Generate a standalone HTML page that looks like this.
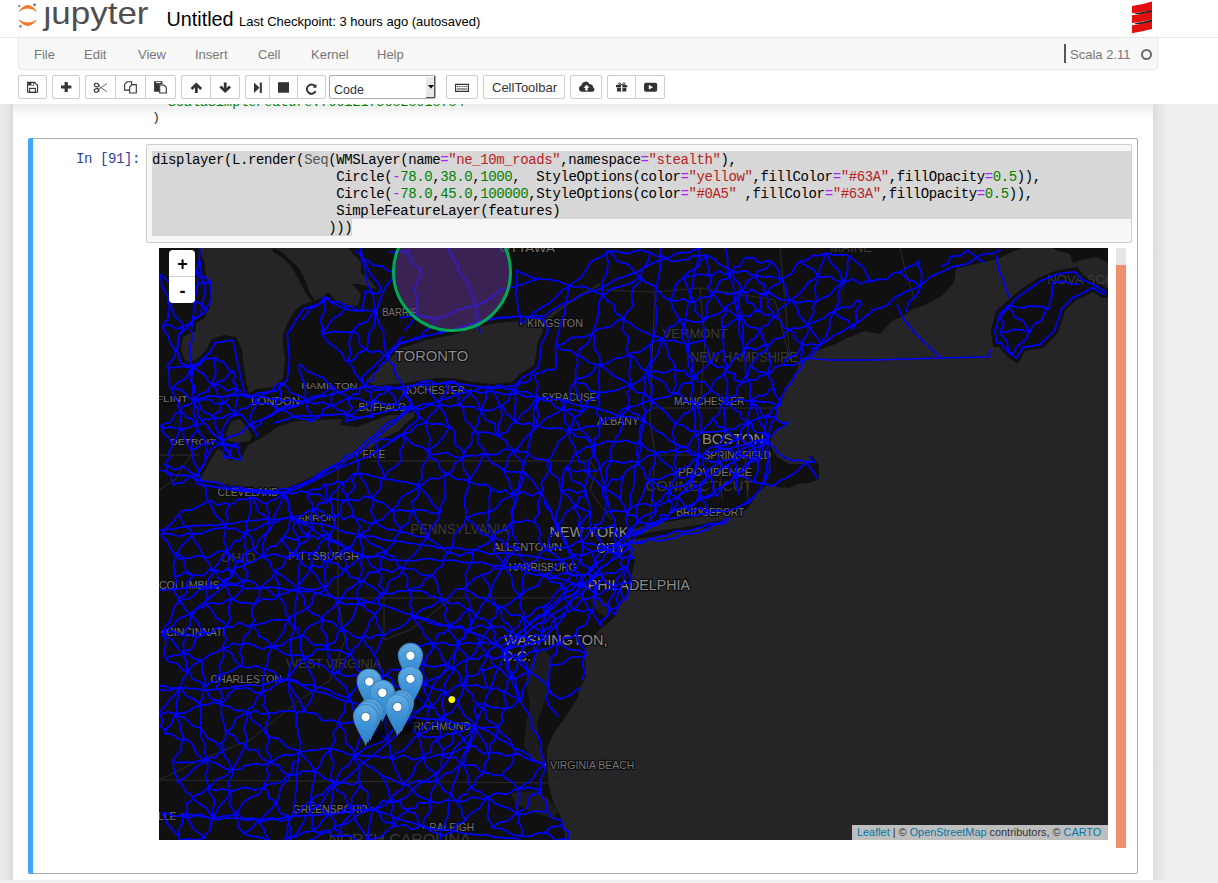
<!DOCTYPE html>
<html><head><meta charset="utf-8">
<style>
*{box-sizing:border-box;margin:0;padding:0}
html,body{width:1218px;height:883px;overflow:hidden;background:#fff;font-family:"Liberation Sans",sans-serif;position:relative}
.abs{position:absolute}
#nbbg{left:0;top:104px;width:1218px;height:779px;background:#eeeeee}
#lshadow{left:0;top:104px;width:13px;height:776px;background:linear-gradient(to right,#ececec 0,#e6e6e6 60%,#d8d8d8 100%)}
#rshadow{left:1153px;top:104px;width:14px;height:776px;background:linear-gradient(to right,#dcdcdc 0,#e8e8e8 60%,#eeeeee 100%)}
#page{left:13px;top:104px;width:1140px;height:776px;background:#fff}
#topshadow{left:13px;top:104px;width:1140px;height:16px;background:linear-gradient(to bottom,#ececec 0,#f8f8f8 50%,#fff 100%)}
#bottomstrip{left:0;top:880px;width:1218px;height:3px;background:#efeeec}
#hdrline{left:0;top:37px;width:1218px;height:1px;background:#e7e7e7}
#menubar{left:18px;top:38px;width:1140px;height:32px;background:#f8f8f8;border:1px solid #e7e7e7;border-top:none;border-radius:0 0 4px 4px}
.menu{position:absolute;top:47px;font-size:13px;color:#777;line-height:16px}
.btn{position:absolute;top:75px;height:24px;background:#fff;border:1px solid #ccc;border-radius:2px}
.grp{position:absolute;top:75px;height:24px;display:flex}
.grp>div{height:24px;background:#fff;border:1px solid #ccc;margin-left:-1px;position:relative}
.grp>div:first-child{border-radius:2px 0 0 2px;margin-left:0}
.grp>div:last-child{border-radius:0 2px 2px 0}
.ico{position:absolute;left:50%;top:50%;transform:translate(-50%,-50%)}
#cell{left:28px;top:138px;width:1110px;height:736px;border:1px solid #ababab;border-radius:2px}
#cellbar{left:28px;top:138px;width:5px;height:736px;background:#42a5f5;border-radius:2px 0 0 2px}
#prompt{left:76px;top:151px;font-family:"Liberation Mono",monospace;font-size:14px;letter-spacing:-0.395px;color:#303f9f;line-height:17px}
#input{left:146px;top:144px;width:986px;height:99px;background:#f7f7f7;border:1px solid #cfcfcf;border-radius:2px}
#code{left:152px;top:152px;font-family:"Liberation Mono",monospace;font-size:14px;letter-spacing:-0.395px;line-height:17px;color:#000;white-space:pre}
.sel{position:absolute;background:#d7d7d7}
.k{color:#aa22ff}.s{color:#ba2121}.n{color:#008000}.b{color:#555}
</style></head><body>
<div id="nbbg" class="abs"></div>
<div id="lshadow" class="abs"></div>
<div id="rshadow" class="abs"></div>
<div id="page" class="abs"></div>
<div id="topshadow" class="abs"></div>
<div id="bottomstrip" class="abs"></div>
<div id="hdrline" class="abs"></div>
<!-- header -->
<svg class="abs" style="left:0;top:0" width="160" height="36" viewBox="0 0 160 36">
  <path d="M18 12.6 Q27.6 -2.3 37.2 12.2 Q27.6 4.8 18 12.6 Z" fill="#f37726"/>
  <path d="M18 19 Q27.6 32.8 37.2 19.2 Q27.6 26 18 19 Z" fill="#f37726"/>
  <circle cx="19.2" cy="5.9" r="1.1" fill="#767677"/>
  <circle cx="34.6" cy="4.7" r="1.3" fill="#616262"/>
  <circle cx="20.5" cy="26.3" r="1.5" fill="#989798"/>
  <text x="43.5" y="23.6" font-family="Liberation Sans" font-size="31.5" fill="#4e4e4e" textLength="105" lengthAdjust="spacingAndGlyphs">&#x237;upyter</text>
</svg>
<div class="abs" style="left:166.5px;top:7.5px;font-size:19.8px;color:#000;line-height:22px">Untitled</div>
<div class="abs" style="left:239px;top:14px;font-size:13px;color:#000;line-height:16px">Last Checkpoint: 3 hours ago (autosaved)</div>
<svg class="abs" style="left:1131px;top:0px" width="22" height="35" viewBox="0 0 22 35">
  <path d="M1 6 Q11 4.8 21 1.5 L21 10.5 Q11 12.2 1 13.2 Z" fill="#e30f0f"/>
  <path d="M3 13.3 Q12 12.3 21 10 L21 12.6 Q12 14.6 6 14.2 Z" fill="#1f2325"/>
  <path d="M1 15.3 Q11 14.2 21 11.8 L21 19.5 Q11 22 1 23.1 Z" fill="#e30f0f"/>
  <path d="M3 23.2 Q12 22.2 21 19.5 L21 22 Q12 24.4 6 24.2 Z" fill="#1f2325"/>
  <path d="M1 25.3 Q11 24 21 21.5 L21 29 Q11 31.6 1 33.2 Z" fill="#e30f0f"/>
</svg>
<!-- menubar -->
<div id="menubar" class="abs"></div>
<div class="menu" style="left:34px">File</div>
<div class="menu" style="left:84px">Edit</div>
<div class="menu" style="left:138px">View</div>
<div class="menu" style="left:195px">Insert</div>
<div class="menu" style="left:258px">Cell</div>
<div class="menu" style="left:311px">Kernel</div>
<div class="menu" style="left:377px">Help</div>
<div class="abs" style="left:1064px;top:44px;width:1.5px;height:19px;background:#555"></div>
<div class="menu" style="left:1070px">Scala 2.11</div>
<div class="abs" style="left:1141px;top:49px;width:11px;height:11px;border:2px solid #6a6a6a;border-radius:50%"></div>
<!-- toolbar -->
<div class="btn" style="left:18px;width:29px"></div>
<div class="btn" style="left:52px;width:28px"></div>
<div class="grp" style="left:85px"><div style="width:31px"></div><div style="width:31px"></div><div style="width:31px"></div></div>
<div class="grp" style="left:181px"><div style="width:30px"></div><div style="width:30px"></div></div>
<div class="grp" style="left:245px"><div style="width:25px"></div><div style="width:29px"></div><div style="width:29px"></div></div>
<div class="btn" style="left:329px;width:107px;border-color:#aaa;background:#fff"></div>
<div class="btn" style="left:446px;width:32px"></div>
<div class="btn" style="left:483px;width:82px"></div>
<div class="abs" style="left:492px;top:80px;font-size:13px;color:#333;line-height:16px">CellToolbar</div>
<div class="btn" style="left:570px;width:32px"></div>
<div class="grp" style="left:607px"><div style="width:29px"></div><div style="width:30px"></div></div>

<svg class="abs" style="left:0;top:0" width="700" height="104" viewBox="0 0 700 104">
 <g fill="#333">
  <!-- save -->
  <path d="M27.6 82.4 h7 l2.9 2.9 v7 h-9.9 z" fill="none" stroke="#333" stroke-width="1.1"/>
  <rect x="28.2" y="82.5" width="6" height="3" fill="#333"/>
  <rect x="31.4" y="83" width="1.8" height="2" fill="#fff"/>
  <rect x="29.6" y="88.4" width="5.8" height="4" fill="none" stroke="#333" stroke-width="1.1"/>
  <!-- plus -->
  <path d="M64.6 82 h3.2 v3.6 h3.6 v2.9 h-3.6 v3.4 h-3.2 v-3.4 h-3.6 v-2.9 h3.6 z"/>
  <!-- cut -->
  <g fill="none" stroke="#333" stroke-width="1.2">
   <ellipse cx="96.6" cy="85.1" rx="2.3" ry="1.7" transform="rotate(20 96.6 85.1)"/>
   <ellipse cx="96.6" cy="90.4" rx="2.3" ry="1.7" transform="rotate(-20 96.6 90.4)"/>
  </g>
  <g fill="none" stroke="#555" stroke-width="0.9">
   <path d="M98.8 86.2 L106.8 91.6 M98.8 89.3 L106.8 83.5"/>
  </g>
  <!-- copy -->
  <g fill="#fff" stroke="#333" stroke-width="1.1">
   <path d="M124.6 84.3 l2.4-2.5 h4.6 v8.3 h-7 z"/>
   <path d="M129.7 87 l2.4-2.4 h4.2 v8.4 h-6.6 z"/>
  </g>
  <!-- paste -->
  <path d="M154.1 81.3 h8.3 v3.2 h-3.2 v7.2 h-5.1 z"/>
  <rect x="156" y="82.1" width="4.8" height="1" fill="#fff"/>
  <path d="M159.7 85 h4.3 l2.3 2.3 v5.7 h-6.6 z" fill="#fff" stroke="#333" stroke-width="1.1"/>
  <!-- up arrow -->
  <path d="M196.3 82.5 l5.8 5.6 l-1.9 1.9 l-2.5 -2.5 v5.5 h-2.8 v-5.5 l-2.5 2.5 l-1.9 -1.9 z"/>
  <!-- down arrow -->
  <path d="M225.2 93 l5.8 -5.6 l-1.9 -1.9 l-2.5 2.5 v-5.5 h-2.8 v5.5 l-2.5 -2.5 l-1.9 1.9 z"/>
  <!-- step forward -->
  <path d="M254 82.5 l5.5 5.2 l-5.5 5.3 z M259.8 82.5 h2 v10.5 h-2 z"/>
  <!-- stop -->
  <rect x="278" y="82.2" width="11" height="10.5"/>
  <!-- repeat -->
  <path d="M316.5 84 v3.8 h-3.8 l1.3-1.3 a3.6 3.6 0 1 0 0.7 4.2 l1.9 0.9 a5.6 5.6 0 1 1 -1.2 -6.5 z"/>
  <!-- keyboard -->
  <path d="M455 83.7 h14 v8.3 h-14 z M456.2 84.9 v5.9 h11.6 v-5.9 z" fill-rule="evenodd"/>
  <path d="M457 86 h1.2 v1 h-1.2z M459.2 86 h1.2 v1 h-1.2z M461.4 86 h1.2 v1 h-1.2z M463.6 86 h1.2 v1 h-1.2z M465.8 86 h1.2 v1 h-1.2z M457 88.6 h10 v1 h-10z"/>
  <!-- cloud upload -->
  <path d="M582 91.7 a3.2 3.2 0 0 1 -0.6-6.3 a4.3 4.3 0 0 1 8.2-1.2 a3 3 0 0 1 3.6 3.2 a2.3 2.3 0 0 1 -0.4 4.3 z"/>
  <path d="M586.5 84.8 l3 3 h-1.8 v2.8 h-2.4 v-2.8 h-1.8 z" fill="#fff"/>
  <!-- gift -->
  <path d="M616 85 h11.3 v2.3 h-11.3 z M617 87.8 h9.3 v3.6 h-9.3 z"/>
  <path d="M621 85 h1.4 v6.4 h-1.4 z" fill="#fff"/>
  <path d="M621.6 84.8 c-1-2.2 -3.5-2.5 -3.3-0.8 c0.2 1 2 0.8 3.3 0.8 z M621.8 84.8 c1-2.2 3.5-2.5 3.3-0.8 c-0.2 1 -2 0.8 -3.3 0.8 z" fill="none" stroke="#333" stroke-width="1"/>
  <!-- youtube play -->
  <rect x="644" y="82.8" width="13.2" height="8.9" rx="2"/>
  <path d="M648.8 84.8 l4.2 2.4 l-4.2 2.4 z" fill="#fff"/>
 </g>
 <!-- select arrow -->
 <rect x="426" y="77" width="9" height="20" fill="#e8e8e8"/>
 <path d="M435 76 v22 h-9 v-1 h8 v-21z" fill="#555"/>
 <path d="M428 85 h6 l-3 3.5z" fill="#000"/>
</svg>
<div class="abs" style="left:334px;top:83px;font-size:12.5px;color:#333;line-height:15px">Code</div>

<!-- previous output -->
<div class="abs" style="left:13px;top:104px;width:1140px;height:34px;overflow:hidden">
 <div class="abs" style="left:155px;top:-10px;font-family:'Liberation Mono',monospace;font-size:13.37px;line-height:17px;color:#008000;white-space:pre">ScalaSimpleFeature:766121756828918784</div>
</div>
<div class="abs" style="left:152px;top:109px;font-family:'Liberation Mono',monospace;font-size:13.37px;line-height:17px;color:#333;white-space:pre">)</div>
<div id="cell" class="abs"></div>
<div id="cellbar" class="abs"></div>
<div id="prompt" class="abs">In&nbsp;[91]:</div>
<div id="input" class="abs"></div>
<div class="sel" style="left:152px;top:151px;width:979px;height:68px"></div>
<div class="sel" style="left:152px;top:219px;width:200px;height:17px"></div>
<div id="code" class="abs">displayer(L.render(<span class="b">Seq</span>(WMSLayer(name<span class="k">=</span><span class="s">"ne_10m_roads"</span>,namespace<span class="k">=</span><span class="s">"stealth"</span>),
                       Circle(<span class="k">-</span><span class="n">78.0</span>,<span class="n">38.0</span>,<span class="n">1000</span>,  StyleOptions(color<span class="k">=</span><span class="s">"yellow"</span>,fillColor<span class="k">=</span><span class="s">"#63A"</span>,fillOpacity<span class="k">=</span><span class="n">0.5</span>)),
                       Circle(<span class="k">-</span><span class="n">78.0</span>,<span class="n">45.0</span>,<span class="n">100000</span>,StyleOptions(color<span class="k">=</span><span class="s">"#0A5"</span> ,fillColor<span class="k">=</span><span class="s">"#63A"</span>,fillOpacity<span class="k">=</span><span class="n">0.5</span>)),
                       SimpleFeatureLayer(features)
                      )))</div>
<!-- scrollbar -->
<div class="abs" style="left:1116px;top:248px;width:10px;height:600px;background:#e6e6e6"></div>
<div class="abs" style="left:1116px;top:265px;width:10px;height:583px;background:#f0906a"></div>
<div id="map" class="abs" style="left:159px;top:248px;width:949px;height:592px;background:#101010;overflow:hidden"><svg width="949" height="592" viewBox="159 248 949 592" style="position:absolute;left:0;top:0">
<rect x="159" y="248" width="949" height="592" fill="#101010"/>
<polygon points="1022,248 1010,253 1000,258 985,262 971,265 956,269 954,282 942,296 925,305 911,310 902,317 893,320 880,334 864,331 847,338 833,345 816,351 800,360 797,370 787,386 781,404 777,410 776,420 786,424 773,432 770,445 777,457 789,464 805,464 813,462 808,456 813,456 819,466 819,479 809,483 797,484 789,488 777,487 767,485 758,493 752,502 746,510 726,514 702,516 679,520 651,524 630,530 628,536 629,550 635,561 632,573 629,591 620,606 614,618 598,631 586,647 585,659 586,677 580,688 578,697 569,712 554,733 547,748 547,765 549,787 554,804 562,819 566,840 1108,840 1108,262 1095,257 1081,260 1073,263 1070,254 1058,251 1052,248" fill="#252527"/>
<polygon points="198,248 204,260 206,276 210,287 210,307 204,319 196,323 196,331 183,337 181,350 185,360 190,362 198,358 206,350 212,339 224,335 236,337 242,350 244,366 246,382 249,393 256,389 274,387 283,378 285,358 283,346 283,333 293,313 301,305 314,301 319,299 329,292 334,299 349,305 358,306 361,294 352,284 359,284 376,289 376,287 368,278 361,273 361,263 358,258 353,254 349,248" fill="#252527"/>
<polygon points="232,421 240,419 248,429 252,435 250,441 238,443 228,441 226,433" fill="#252527"/>
<polygon points="414,412 399,415 389,415 356,427 340,425 342,419 320,420 297,421 277,427 263,437 248,445 242,457 230,461 220,449 216,451 204,472 200,480 210,482 238,486 269,490 287,488 308,479 336,465 366,453 384,438 399,431 403,426 414,417" fill="#252527"/>
<polygon points="366,380 372,374 382,366 400,348.5 425,340.6 453,334.7 478,326.8 496,322.9 520,320.9 540,322.9 543.4,330.8 537.5,342.6 535.5,358.3 533.5,366.2 520,374.1 512,382 492,384 472.5,382 453,378 435,378 413,382 394,384 375,386" fill="#252527"/>
<polygon points="540,322 560,307 580,294 600,283 601,285 582,296 562,309 543,325" fill="#252527"/>
<polygon points="526,680 530,706 526,723 524,744 532,761 545,761 539,744 537,723 545,701 549,680 552,660 545,650 535,655 528,668" fill="#1d1d1f"/>
<polygon points="612,606 600,598 590,600 596,610 606,618" fill="#1d1d1f"/>
<polygon points="511,793 536.6,791 549.4,799.5 558,812 553.7,818.7 532.3,812 515.3,803.8" fill="#1d1d1f"/>
<polygon points="991,330 996,311 1011,298 1022,288 1040,277 1058,270 1077,267 1084,276 1095,280 1108,289 1108,298 1102,298 1093,292 1075,301 1065,311 1058,333 1043,348 1025,351 1018,364 1008,357 999,347 993,347" fill="#101010"/>
<polygon points="630,540 659,536 689,530 706,528 731,518 703,524 679,528 651,532 630,537" fill="#101010"/>
<polygon points="274,248 282,252 290,260 299,268 305,280 310,293 315,301 312,302 305,292 298,278 291,266 283,258 272,251" fill="#101010"/>
<polyline points="372,461 590,461 596,470 590,490 600,505 612,520" fill="none" stroke="#2c2c2c" stroke-width="1"/>
<polyline points="338,466 338,598 600,598" fill="none" stroke="#2c2c2c" stroke-width="1"/>
<polyline points="338,598 345,640 330,680 300,700 250,740 200,760 159,780" fill="none" stroke="#2c2c2c" stroke-width="1"/>
<polyline points="159,780 300,781 450,782 560,783" fill="none" stroke="#2c2c2c" stroke-width="1"/>
<polyline points="384,598 384,640 410,630 450,600" fill="none" stroke="#2c2c2c" stroke-width="1"/>
<polyline points="655,292 652,360 650,420 655,455 650,520" fill="none" stroke="#2c2c2c" stroke-width="1"/>
<polyline points="655,292 700,288 712,290" fill="none" stroke="#2c2c2c" stroke-width="1"/>
<polyline points="700,288 705,340 700,408" fill="none" stroke="#2c2c2c" stroke-width="1"/>
<polyline points="650,408 780,408" fill="none" stroke="#2c2c2c" stroke-width="1"/>
<polyline points="650,455 745,455 748,500" fill="none" stroke="#2c2c2c" stroke-width="1"/>
<polyline points="720,455 722,500" fill="none" stroke="#2c2c2c" stroke-width="1"/>
<polyline points="712,290 775,300 790,360" fill="none" stroke="#2c2c2c" stroke-width="1"/>
<polyline points="780,248 785,300 790,360" fill="none" stroke="#2c2c2c" stroke-width="1"/>
<polyline points="900,248 905,270 915,300" fill="none" stroke="#2c2c2c" stroke-width="1"/>
<polyline points="600,290 655,292" fill="none" stroke="#2c2c2c" stroke-width="1"/>
<polyline points="159,455 200,455" fill="none" stroke="#2c2c2c" stroke-width="1"/>
<polyline points="200,440 175,480 159,490" fill="none" stroke="#2c2c2c" stroke-width="1"/>
<g font-family="Liberation Sans" ><text x="382.2" y="315.8" font-size="10.0" textLength="35.7" lengthAdjust="spacingAndGlyphs" fill="#747474" stroke="#0b0b0b" stroke-width="2.4" stroke-linejoin="round" paint-order="stroke">BARRIE</text>
<text x="527.0" y="326.6" font-size="10.7" textLength="56.0" lengthAdjust="spacingAndGlyphs" fill="#747474" stroke="#0b0b0b" stroke-width="2.4" stroke-linejoin="round" paint-order="stroke">KINGSTON</text>
<text x="401.9" y="393.6" font-size="10.0" textLength="62.9" lengthAdjust="spacingAndGlyphs" fill="#747474" stroke="#0b0b0b" stroke-width="2.4" stroke-linejoin="round" paint-order="stroke">ROCHESTER</text>
<text x="541.8" y="400.9" font-size="10.4" textLength="54.4" lengthAdjust="spacingAndGlyphs" fill="#747474" stroke="#0b0b0b" stroke-width="2.4" stroke-linejoin="round" paint-order="stroke">SYRACUSE</text>
<text x="358.4" y="411.3" font-size="10.0" textLength="47.7" lengthAdjust="spacingAndGlyphs" fill="#747474" stroke="#0b0b0b" stroke-width="2.4" stroke-linejoin="round" paint-order="stroke">BUFFALO</text>
<text x="301.3" y="389.1" font-size="9.8" textLength="56.3" lengthAdjust="spacingAndGlyphs" fill="#747474" stroke="#0b0b0b" stroke-width="2.4" stroke-linejoin="round" paint-order="stroke">HAMILTON</text>
<text x="155.9" y="402.1" font-size="9.8" textLength="32.3" lengthAdjust="spacingAndGlyphs" fill="#747474" stroke="#0b0b0b" stroke-width="2.4" stroke-linejoin="round" paint-order="stroke">FLINT</text>
<text x="251.0" y="404.9" font-size="10.4" textLength="48.9" lengthAdjust="spacingAndGlyphs" fill="#747474" stroke="#0b0b0b" stroke-width="2.4" stroke-linejoin="round" paint-order="stroke">LONDON</text>
<text x="170.2" y="444.9" font-size="9.8" textLength="45.6" lengthAdjust="spacingAndGlyphs" fill="#747474" stroke="#0b0b0b" stroke-width="2.4" stroke-linejoin="round" paint-order="stroke">DETROIT</text>
<text x="362.4" y="457.7" font-size="11.3" textLength="22.8" lengthAdjust="spacingAndGlyphs" fill="#747474" stroke="#0b0b0b" stroke-width="2.4" stroke-linejoin="round" paint-order="stroke">ERIE</text>
<text x="217.5" y="496.1" font-size="11.3" textLength="61.3" lengthAdjust="spacingAndGlyphs" fill="#747474" stroke="#0b0b0b" stroke-width="2.4" stroke-linejoin="round" paint-order="stroke">CLEVELAND</text>
<text x="297.6" y="520.8" font-size="9.7" textLength="38.6" lengthAdjust="spacingAndGlyphs" fill="#747474" stroke="#0b0b0b" stroke-width="2.4" stroke-linejoin="round" paint-order="stroke">AKRON</text>
<text x="288.6" y="560.0" font-size="10.7" textLength="70.2" lengthAdjust="spacingAndGlyphs" fill="#747474" stroke="#0b0b0b" stroke-width="2.4" stroke-linejoin="round" paint-order="stroke">PITTSBURGH</text>
<text x="158.9" y="588.8" font-size="10.4" textLength="60.7" lengthAdjust="spacingAndGlyphs" fill="#747474" stroke="#0b0b0b" stroke-width="2.4" stroke-linejoin="round" paint-order="stroke">COLUMBUS</text>
<text x="166.3" y="635.8" font-size="10.3" textLength="59.0" lengthAdjust="spacingAndGlyphs" fill="#747474" stroke="#0b0b0b" stroke-width="2.4" stroke-linejoin="round" paint-order="stroke">CINCINNATI</text>
<text x="210.5" y="683.0" font-size="10.7" textLength="71.4" lengthAdjust="spacingAndGlyphs" fill="#747474" stroke="#0b0b0b" stroke-width="2.4" stroke-linejoin="round" paint-order="stroke">CHARLESTON</text>
<text x="493.0" y="550.5" font-size="10.5" textLength="68.9" lengthAdjust="spacingAndGlyphs" fill="#747474" stroke="#0b0b0b" stroke-width="2.4" stroke-linejoin="round" paint-order="stroke">ALLENTOWN</text>
<text x="509.0" y="570.7" font-size="11.3" textLength="67.7" lengthAdjust="spacingAndGlyphs" fill="#747474" stroke="#0b0b0b" stroke-width="2.4" stroke-linejoin="round" paint-order="stroke">HARRISBURG</text>
<text x="674.0" y="404.6" font-size="11.1" textLength="70.6" lengthAdjust="spacingAndGlyphs" fill="#747474" stroke="#0b0b0b" stroke-width="2.4" stroke-linejoin="round" paint-order="stroke">MANCHESTER</text>
<text x="597.2" y="425.2" font-size="10.1" textLength="41.8" lengthAdjust="spacingAndGlyphs" fill="#747474" stroke="#0b0b0b" stroke-width="2.4" stroke-linejoin="round" paint-order="stroke">ALBANY</text>
<text x="703.8" y="459.1" font-size="10.7" textLength="67.2" lengthAdjust="spacingAndGlyphs" fill="#747474" stroke="#0b0b0b" stroke-width="2.4" stroke-linejoin="round" paint-order="stroke">SPRINGFIELD</text>
<text x="678.2" y="475.9" font-size="10.4" textLength="74.1" lengthAdjust="spacingAndGlyphs" fill="#747474" stroke="#0b0b0b" stroke-width="2.4" stroke-linejoin="round" paint-order="stroke">PROVIDENCE</text>
<text x="676.2" y="516.3" font-size="10.7" textLength="68.2" lengthAdjust="spacingAndGlyphs" fill="#747474" stroke="#0b0b0b" stroke-width="2.4" stroke-linejoin="round" paint-order="stroke">BRIDGEPORT</text>
<text x="413.3" y="729.5" font-size="11.3" textLength="57.7" lengthAdjust="spacingAndGlyphs" fill="#747474" stroke="#0b0b0b" stroke-width="2.4" stroke-linejoin="round" paint-order="stroke">RICHMOND</text>
<text x="549.9" y="769.2" font-size="11.5" textLength="84.4" lengthAdjust="spacingAndGlyphs" fill="#747474" stroke="#0b0b0b" stroke-width="2.4" stroke-linejoin="round" paint-order="stroke">VIRGINIA BEACH</text>
<text x="292.6" y="813.3" font-size="11.3" textLength="75.1" lengthAdjust="spacingAndGlyphs" fill="#747474" stroke="#0b0b0b" stroke-width="2.4" stroke-linejoin="round" paint-order="stroke">GREENSBORO</text>
<text x="429.3" y="830.5" font-size="11.3" textLength="44.9" lengthAdjust="spacingAndGlyphs" fill="#747474" stroke="#0b0b0b" stroke-width="2.4" stroke-linejoin="round" paint-order="stroke">RALEIGH</text>
<text x="119.4" y="819.5" font-size="11.4" textLength="57.2" lengthAdjust="spacingAndGlyphs" fill="#747474" stroke="#0b0b0b" stroke-width="2.4" stroke-linejoin="round" paint-order="stroke">ASHEVILLE</text>
<text x="499.4" y="252.0" font-size="11.4" textLength="55.5" lengthAdjust="spacingAndGlyphs" fill="#747474" stroke="#0b0b0b" stroke-width="2.4" stroke-linejoin="round" paint-order="stroke">OTTAWA</text>
<text x="395.0" y="361.1" font-size="13.9" textLength="73.1" lengthAdjust="spacingAndGlyphs" fill="#8c8c8c" stroke="#0b0b0b" stroke-width="2.4" stroke-linejoin="round" paint-order="stroke">TORONTO</text>
<text x="701.9" y="444.3" font-size="14.1" textLength="62.2" lengthAdjust="spacingAndGlyphs" fill="#8c8c8c" stroke="#0b0b0b" stroke-width="2.4" stroke-linejoin="round" paint-order="stroke">BOSTON</text>
<text x="549.6" y="537.0" font-size="15.0" textLength="78.8" lengthAdjust="spacingAndGlyphs" fill="#8c8c8c" stroke="#0b0b0b" stroke-width="2.4" stroke-linejoin="round" paint-order="stroke">NEW YORK</text>
<text x="596.4" y="553.0" font-size="15.0" textLength="29.6" lengthAdjust="spacingAndGlyphs" fill="#8c8c8c" stroke="#0b0b0b" stroke-width="2.4" stroke-linejoin="round" paint-order="stroke">CITY</text>
<text x="587.8" y="590.4" font-size="15.0" textLength="102.2" lengthAdjust="spacingAndGlyphs" fill="#8c8c8c" stroke="#0b0b0b" stroke-width="2.4" stroke-linejoin="round" paint-order="stroke">PHILADELPHIA</text>
<text x="504.1" y="645.3" font-size="15.0" textLength="103.4" lengthAdjust="spacingAndGlyphs" fill="#8c8c8c" stroke="#0b0b0b" stroke-width="2.4" stroke-linejoin="round" paint-order="stroke">WASHINGTON,</text>
<text x="502.8" y="661.3" font-size="15.0" textLength="28.3" lengthAdjust="spacingAndGlyphs" fill="#8c8c8c" stroke="#0b0b0b" stroke-width="2.4" stroke-linejoin="round" paint-order="stroke">D.C.</text>
<text x="662.6" y="337.7" font-size="13.4" textLength="65.2" lengthAdjust="spacingAndGlyphs" fill="#3a3a3a">VERMONT</text>
<text x="690.2" y="361.9" font-size="14.2" textLength="107.6" lengthAdjust="spacingAndGlyphs" fill="#3a3a3a">NEW HAMPSHIRE</text>
<text x="645.7" y="490.6" font-size="14.6" textLength="106.6" lengthAdjust="spacingAndGlyphs" fill="#3a3a3a">CONNECTICUT</text>
<text x="410.5" y="533.7" font-size="13.9" textLength="98.5" lengthAdjust="spacingAndGlyphs" fill="#3a3a3a">PENNSYLVANIA</text>
<text x="220.7" y="561.6" font-size="13.5" textLength="35.1" lengthAdjust="spacingAndGlyphs" fill="#3a3a3a">OHIO</text>
<text x="286.3" y="667.5" font-size="13.7" textLength="95.2" lengthAdjust="spacingAndGlyphs" fill="#3a3a3a">WEST VIRGINIA</text>
<text x="328.4" y="843.5" font-size="14.2" textLength="142.2" lengthAdjust="spacingAndGlyphs" fill="#3a3a3a">NORTH CAROLINA</text>
<text x="830.3" y="251.7" font-size="12.8" textLength="41.9" lengthAdjust="spacingAndGlyphs" fill="#3a3a3a">MAINE</text>
<text x="1047.2" y="284.1" font-size="13.2" textLength="88.4" lengthAdjust="spacingAndGlyphs" fill="#3a3a3a">NOVA SCOTIA</text>
<circle cx="375.9" cy="312.8" r="2.3" fill="#6e6e6e" stroke="#0b0b0b" stroke-width="1.3"/>
<circle cx="521.3" cy="323.6" r="2.3" fill="#6e6e6e" stroke="#0b0b0b" stroke-width="1.3"/>
<circle cx="388.1" cy="356.6" r="2.3" fill="#6e6e6e" stroke="#0b0b0b" stroke-width="1.3"/>
<circle cx="470.5" cy="391" r="2.3" fill="#6e6e6e" stroke="#0b0b0b" stroke-width="1.3"/>
<circle cx="537.5" cy="397" r="2.3" fill="#6e6e6e" stroke="#0b0b0b" stroke-width="1.3"/>
<circle cx="412.4" cy="408" r="2.3" fill="#6e6e6e" stroke="#0b0b0b" stroke-width="1.3"/>
<circle cx="364.9" cy="385.8" r="2.3" fill="#6e6e6e" stroke="#0b0b0b" stroke-width="1.3"/>
<circle cx="193.5" cy="399" r="2.3" fill="#6e6e6e" stroke="#0b0b0b" stroke-width="1.3"/>
<circle cx="305.8" cy="401.3" r="2.3" fill="#6e6e6e" stroke="#0b0b0b" stroke-width="1.3"/>
<circle cx="222.4" cy="442.4" r="2.3" fill="#6e6e6e" stroke="#0b0b0b" stroke-width="1.3"/>
<circle cx="357" cy="454" r="2.3" fill="#6e6e6e" stroke="#0b0b0b" stroke-width="1.3"/>
<circle cx="284.1" cy="492.6" r="2.3" fill="#6e6e6e" stroke="#0b0b0b" stroke-width="1.3"/>
<circle cx="292.6" cy="517.7" r="2.3" fill="#6e6e6e" stroke="#0b0b0b" stroke-width="1.3"/>
<circle cx="362.8" cy="556" r="2.3" fill="#6e6e6e" stroke="#0b0b0b" stroke-width="1.3"/>
<circle cx="224.7" cy="585" r="2.3" fill="#6e6e6e" stroke="#0b0b0b" stroke-width="1.3"/>
<circle cx="162.4" cy="632" r="2.3" fill="#6e6e6e" stroke="#0b0b0b" stroke-width="1.3"/>
<circle cx="287.6" cy="679.5" r="2.3" fill="#6e6e6e" stroke="#0b0b0b" stroke-width="1.3"/>
<circle cx="567.5" cy="546.8" r="2.3" fill="#6e6e6e" stroke="#0b0b0b" stroke-width="1.3"/>
<circle cx="503.4" cy="566.5" r="2.3" fill="#6e6e6e" stroke="#0b0b0b" stroke-width="1.3"/>
<circle cx="582.8" cy="585" r="2.3" fill="#6e6e6e" stroke="#0b0b0b" stroke-width="1.3"/>
<circle cx="699.5" cy="455.5" r="2.3" fill="#6e6e6e" stroke="#0b0b0b" stroke-width="1.3"/>
<circle cx="670.9" cy="512.6" r="2.3" fill="#6e6e6e" stroke="#0b0b0b" stroke-width="1.3"/>
<circle cx="544.5" cy="765" r="2.3" fill="#6e6e6e" stroke="#0b0b0b" stroke-width="1.3"/>
<circle cx="372" cy="809" r="2.3" fill="#6e6e6e" stroke="#0b0b0b" stroke-width="1.3"/>
<circle cx="423.8" cy="827" r="2.3" fill="#6e6e6e" stroke="#0b0b0b" stroke-width="1.3"/>
<circle cx="475.1" cy="725.5" r="2.3" fill="#6e6e6e" stroke="#0b0b0b" stroke-width="1.3"/>
<circle cx="182.4" cy="815" r="2.3" fill="#6e6e6e" stroke="#0b0b0b" stroke-width="1.3"/>
<circle cx="644" cy="421" r="2.3" fill="#6e6e6e" stroke="#0b0b0b" stroke-width="1.3"/>
<circle cx="750.9" cy="400.5" r="2.3" fill="#6e6e6e" stroke="#0b0b0b" stroke-width="1.3"/>
<circle cx="767" cy="439" r="2.3" fill="#6e6e6e" stroke="#0b0b0b" stroke-width="1.3"/></g>
<path d="M222.4 442.4 L218.2 444.2 L213.6 440.0 L209.5 443.9 L205.2 443.5 M179.7 687.9 L178.9 692.3 L179.1 696.7 L176.7 700.8 L176.6 705.3 L177.2 709.8 L175.9 714.1 M192.8 797.6 L196.6 794.7 L201.6 793.7 L204.8 789.9 L208.7 787.2 M182.4 815.0 L186.4 812.7 L187.4 808.5 L186.8 803.5 L190.8 801.1 L192.8 797.6 M722.8 327.1 L726.8 326.2 L730.0 323.5 L733.1 320.8 L736.6 318.8 L740.7 318.2 M732.8 271.8 L730.4 275.6 L727.2 278.7 L721.7 279.6 L718.6 282.7 L717.2 287.4 L714.5 290.9 L711.5 294.2 M351.0 654.8 L352.5 650.9 L354.8 647.5 L358.6 645.0 L360.5 641.3 L362.0 637.4 M253.0 428.6 L256.8 426.2 L260.6 423.9 L262.4 419.0 L266.5 416.9 L270.7 415.1 L274.2 412.3 L277.4 409.3 M767.6 345.9 L764.7 342.6 L762.8 338.7 L762.1 334.3 L760.1 330.6 M200.2 705.3 L196.0 706.4 L192.3 708.8 L188.5 711.0 L184.6 712.8 L180.1 713.1 L175.9 714.1 M462.5 763.8 L466.9 765.2 L472.0 765.1 L476.7 766.1 L479.8 770.7 L483.9 772.8 M496.9 606.9 L496.8 611.9 L495.6 616.7 L490.6 620.4 L491.5 625.8 M267.6 713.1 L266.4 709.0 L262.6 705.6 L265.6 700.5 L264.6 696.3 L262.2 692.6 M709.1 362.3 L712.9 359.5 L714.5 354.2 L719.3 352.6 L723.5 350.4 M742.0 290.6 L746.6 292.7 L751.7 289.3 L756.2 291.9 L760.7 294.1 L765.6 293.3 M201.7 660.2 L205.2 658.0 L208.3 655.1 L212.1 653.5 L216.2 652.2 L219.9 650.4 L222.9 647.4 M707.5 255.0 L704.1 258.0 L700.2 260.6 L699.1 266.1 L695.5 268.9 L691.0 270.7 L686.9 273.0 L684.1 276.7 M270.0 762.4 L274.2 760.6 L277.8 757.3 L281.9 755.4 L286.4 754.7 L291.4 755.3 L295.8 754.1 L299.6 751.6 M372.6 417.5 L368.0 416.4 L363.3 416.6 L358.6 417.9 L354.1 416.8 L349.4 416.3 M375.9 312.8 L371.9 310.8 L367.6 310.0 L362.9 310.9 L358.5 310.9 L354.6 308.4 L350.6 306.3 L346.1 306.1 M702.9 321.6 L704.4 317.8 L707.2 314.4 L706.5 309.8 L706.3 305.5 L708.2 301.7 L710.4 298.1 L711.5 294.2 M465.9 518.2 L470.3 516.7 L474.6 514.6 L479.1 513.4 L483.9 513.3 L488.3 511.8 M774.4 389.2 L772.6 385.5 L772.6 381.0 L769.0 377.9 L768.3 373.7 M523.0 836.4 L522.2 831.8 L521.6 827.1 L518.7 822.9 L519.4 817.9 L517.7 813.5 M314.4 770.1 L310.5 771.6 L306.2 771.0 L302.0 771.3 L298.5 774.5 L294.3 774.6 L290.2 775.0 M175.3 554.4 L178.6 551.5 L180.1 546.9 L183.8 544.4 L186.2 540.7 L189.9 538.1 L192.4 534.4 M276.1 571.4 L273.2 574.5 L271.6 578.7 L267.8 581.1 L264.2 583.6 L262.2 587.6 M735.1 474.6 L738.9 476.6 L743.6 476.4 L747.5 478.0 L751.0 480.8 L755.0 482.3 M388.1 356.6 L390.2 353.0 L393.3 350.2 L397.2 347.9 L397.5 343.0 L399.8 339.6 L402.8 336.7 M185.6 634.5 L185.1 629.2 L190.2 625.7 L189.9 620.5 L191.4 615.8 M512.1 631.4 L508.6 634.7 L504.4 637.0 L499.7 638.5 L496.7 642.4 M517.7 813.5 L517.1 809.3 L516.1 805.1 L518.6 801.0 L520.2 796.9 L517.8 792.6 L518.3 788.5 M386.0 551.6 L384.0 555.3 L380.8 558.6 L380.5 563.0 L380.8 567.7 L378.2 571.2 M203.4 556.8 L206.0 560.0 L209.3 562.7 L209.9 567.4 L213.2 570.1 M226.8 626.6 L222.6 627.9 L217.8 627.3 L214.0 629.9 L210.4 633.1 L205.8 633.2 M383.6 478.3 L379.1 477.9 L374.8 476.8 L370.5 475.5 L366.2 474.3 L361.8 473.6 L357.3 473.1 M386.0 551.6 L382.5 549.2 L379.2 546.5 L374.7 545.6 L371.1 543.5 L367.8 540.7 L364.6 537.9 L360.9 535.8 M225.9 551.8 L230.0 553.9 L233.0 557.9 L236.3 561.3 L241.8 561.2 L245.5 564.1 M462.5 763.8 L465.8 759.9 L464.7 754.1 L468.4 750.4 L470.5 746.1 M309.2 536.8 L304.5 536.1 L300.0 537.1 L295.6 539.9 L290.9 538.9 L286.1 537.4 L281.6 538.7 M182.1 287.9 L185.6 285.0 L186.7 280.6 L185.7 274.8 L191.0 273.1 L193.9 269.9 M187.5 670.9 L186.0 675.4 L182.7 679.0 L181.5 683.6 L179.7 687.9 M514.5 450.7 L515.3 455.2 L519.0 458.3 L521.5 462.1 L522.9 466.4 L523.2 471.2 L526.5 474.5 M502.6 775.1 L497.9 775.2 L493.2 774.8 L488.6 773.4 L483.9 772.8 M297.5 588.7 L299.6 592.5 L302.4 596.0 L304.8 599.6 L304.5 604.4 L306.4 608.2 M364.9 385.8 L365.8 390.3 L371.1 392.6 L370.8 397.7 L372.4 401.8 M630.9 385.9 L626.8 386.5 L622.7 387.7 L618.8 389.0 L614.8 390.6 L610.6 390.9 L606.6 392.1 L602.3 392.1 L598.3 393.4 M711.5 294.2 L715.3 296.2 L717.8 299.4 L719.7 303.1 L722.0 306.5 L725.5 308.7 M391.8 510.4 L396.1 510.8 L400.5 509.8 L404.8 510.8 L409.1 511.1 L413.5 510.5 M758.6 460.0 L755.9 456.8 L754.1 453.2 L754.4 448.5 L751.4 445.5 M537.5 397.0 L541.2 399.7 L545.8 400.8 L550.8 400.9 L553.7 405.3 L557.5 408.0 L562.1 408.9 M304.0 657.1 L305.2 660.9 L306.3 664.8 L307.7 668.6 L310.4 671.9 L311.7 675.7 L313.8 679.2 L314.2 683.4 L315.7 687.2 M404.4 784.6 L408.8 785.9 L412.0 789.0 L414.9 792.8 L418.1 795.9 L422.3 797.6 L426.5 799.0 L430.4 801.1 M748.2 422.6 L744.8 426.3 L741.0 429.6 L740.4 435.1 L737.8 439.2 M625.4 599.7 L626.9 595.8 L628.4 591.9 L629.7 588.0 L629.9 583.6 L631.9 579.9 M707.5 255.0 L706.5 259.9 L707.5 264.7 L709.4 269.4 L708.1 274.3 M737.2 454.6 L738.3 449.5 L736.7 444.3 L737.8 439.2 M267.6 713.1 L269.1 717.5 L267.1 721.8 L265.7 726.0 L265.9 730.4 L266.7 734.7 M158.8 712.9 L163.0 713.9 L167.5 711.7 L171.7 712.9 L175.9 714.1 M275.2 803.6 L277.9 800.5 L279.3 796.7 L279.7 792.3 L280.4 788.1 L282.9 784.9 L285.5 781.6 L289.1 779.0 L290.2 775.0 M656.2 452.4 L661.0 451.9 L666.0 452.7 L670.7 450.3 L675.6 450.9 M236.2 414.6 L234.7 410.5 L235.8 406.4 L236.3 402.2 L237.8 398.1 L237.2 394.0 L236.4 389.8 M572.6 609.6 L569.0 611.3 L564.8 612.0 L562.2 615.5 L558.6 617.4 L555.1 619.3 M457.6 644.6 L459.4 648.7 L462.7 651.7 L466.1 654.6 L467.9 658.7 M638.1 504.3 L642.4 504.0 L646.7 503.8 L650.9 506.2 L655.3 505.0 M565.3 468.1 L569.9 468.3 L574.0 471.6 L578.6 471.5 L583.6 470.0 L587.7 472.4 M332.8 386.3 L333.5 391.0 L332.2 395.5 L331.1 400.1 L331.8 404.8 M604.3 547.5 L601.5 544.4 L600.2 540.3 L597.8 537.0 L594.6 534.1 L593.2 530.1 M347.6 499.0 L351.8 499.9 L356.0 500.8 L360.2 500.0 L364.3 496.2 L368.5 497.2 L372.7 498.5 M335.5 516.2 L331.9 513.0 L332.5 508.1 L331.6 503.8 L328.7 500.4 M330.2 814.6 L329.9 810.1 L330.5 805.7 L331.9 801.3 L332.3 796.9 L333.3 792.5 L333.3 788.1 L333.2 783.6 M685.7 343.7 L690.6 343.9 L695.1 342.0 L699.9 341.1 L704.7 340.7 M403.0 567.8 L401.4 572.2 L399.0 576.1 L394.6 578.5 L389.7 580.5 L387.9 584.9 L387.1 590.0 L384.0 593.4 M441.9 598.8 L446.8 599.3 L450.0 595.9 L453.2 592.7 L456.3 589.2 L461.0 589.2 L465.3 588.5 M765.6 293.3 L767.6 297.0 L767.9 301.4 L767.6 305.9 L770.4 309.4 L773.5 312.7 L774.1 317.0 M351.0 654.8 L353.0 658.3 L355.8 661.4 L355.7 665.9 L357.1 669.7 L360.9 672.3 L361.9 676.3 M513.6 494.5 L515.8 490.2 L519.9 487.2 L522.1 483.0 L523.0 477.9 L526.5 474.5 M204.5 688.5 L207.1 685.3 L209.8 682.2 L215.2 682.0 L216.0 676.8 L219.7 674.9 M382.4 709.1 L378.8 712.1 L375.0 714.8 L371.9 718.3 L368.9 722.0 L365.3 725.0 M201.7 660.2 L196.6 659.7 L192.2 657.6 L188.3 654.1 L183.5 653.1 M815.5 302.6 L819.2 300.1 L823.0 297.6 L827.5 296.1 L831.2 293.6 L834.0 289.8 L837.2 286.7 L840.9 284.0 L844.3 281.2 M468.7 480.9 L471.3 477.2 L473.9 473.5 L476.4 469.8 L478.3 465.7 L480.6 461.8 L481.8 457.3 L484.6 453.7 M388.0 737.8 L389.9 734.2 L392.3 730.8 L394.8 727.5 L397.1 724.1 L397.7 719.8 L398.7 715.6 L401.7 712.6 M726.1 370.0 L722.8 366.0 L717.0 367.7 L713.5 364.1 L709.1 362.3 M726.1 370.0 L729.3 372.8 L734.3 373.4 L734.3 380.1 L738.8 381.3 L742.6 383.4 M684.1 276.7 L688.2 276.7 L692.2 276.2 L696.0 274.5 L700.0 274.2 L704.2 275.3 L708.1 274.3 M193.5 399.0 L191.6 403.4 L187.4 405.4 L182.4 406.5 L180.7 411.2 M359.1 580.9 L355.8 577.6 L350.3 577.3 L348.2 572.4 L344.0 570.4 M263.4 787.4 L266.9 785.0 L270.9 783.5 L275.6 783.7 L279.7 782.5 L283.4 780.5 L286.2 776.4 L290.2 775.0 M359.9 781.3 L357.9 777.1 L359.8 772.1 L359.5 767.5 L357.1 763.4 L354.7 759.2 L354.5 754.6 M272.1 647.3 L274.6 643.9 L277.1 640.5 L279.7 637.2 L282.2 633.8 L284.2 630.1 L284.9 625.6 L287.4 622.2 L289.5 618.6 M185.6 634.5 L189.7 634.5 L193.9 636.9 L197.7 632.7 L201.7 632.2 L205.8 633.2 M338.5 723.1 L337.4 727.4 L334.0 731.0 L333.3 735.5 L335.3 740.8 L332.3 744.5 L330.6 748.7 M691.6 479.5 L694.8 476.2 L698.2 473.2 L703.5 474.0 L707.3 472.0 M347.5 361.5 L352.0 360.2 L355.8 357.9 L358.0 352.9 L362.3 351.4 L366.6 349.7 M328.3 560.8 L326.7 556.6 L330.3 552.6 L329.3 548.4 L328.7 544.2 L329.4 540.1 L329.8 536.0 M277.4 409.3 L273.4 406.7 L269.7 403.3 L264.5 403.6 L259.5 403.2 L255.7 400.1 M407.4 809.0 L402.2 807.8 L400.0 801.9 L394.8 800.8 L390.5 798.4 M699.5 455.5 L697.6 459.3 L698.2 463.9 L696.9 468.0 L693.7 471.3 L692.6 475.4 L691.6 479.5 M305.8 401.3 L310.0 402.6 L314.3 404.0 L318.9 402.6 L323.3 402.1 L327.4 404.8 L331.8 404.8 M225.5 731.4 L226.0 735.6 L225.5 739.7 L220.7 743.2 L224.1 747.7 L223.2 751.8 M577.9 526.4 L578.9 522.2 L580.3 517.8 L577.8 514.0 L575.5 510.1 L575.4 506.0 M255.7 400.1 L253.2 403.6 L249.6 405.6 L246.6 408.2 L241.7 408.6 L238.4 410.8 L236.2 414.6 M675.8 369.6 L675.4 373.6 L674.5 377.6 L675.9 381.8 L675.9 385.9 L673.6 389.8 L673.4 393.8 M201.7 660.2 L197.7 662.4 L193.8 664.5 L190.6 667.7 L187.5 670.9 M342.3 630.2 L341.1 625.7 L339.1 621.4 L338.4 616.8 L339.8 611.8 L337.7 607.4 L336.6 602.9 M514.8 389.2 L517.7 385.9 L520.3 382.3 L526.0 382.6 L529.9 380.6 L531.4 375.4 L535.4 373.5 M255.7 400.1 L252.5 396.8 L247.9 396.1 L243.0 396.1 L240.7 391.0 L236.4 389.8 M200.4 728.3 L200.6 723.7 L200.0 719.1 L201.6 714.5 L200.2 709.9 L200.2 705.3 M648.8 479.8 L649.7 475.8 L649.5 471.6 L652.2 468.1 L654.4 464.5 L655.3 460.6 L655.4 456.4 L656.2 452.4 M166.0 659.4 L169.8 656.4 L174.4 655.3 L179.4 655.4 L183.5 653.1 M712.1 418.8 L710.5 423.0 L706.8 425.6 L704.0 428.9 L701.9 432.7 M245.8 532.4 L246.2 527.9 L246.3 523.5 L248.5 519.2 L249.4 514.9 L250.9 510.6 L251.3 506.1 L249.7 501.5 L249.8 497.0 M562.1 408.9 L564.8 412.8 L564.4 417.7 L564.3 422.4 L568.1 425.9 L568.6 430.5 M452.5 668.0 L448.0 666.6 L443.7 664.6 L438.9 665.9 L434.2 667.2 L429.7 666.0 L425.3 664.7 M471.7 553.1 L473.4 558.0 L471.4 562.2 L469.1 566.3 L467.1 570.5 L465.0 574.7 L465.9 579.5 L465.9 584.0 L465.3 588.5 M510.9 677.9 L506.5 675.9 L503.4 672.2 L499.9 668.9 L495.7 666.7 M572.6 609.6 L571.5 605.6 L568.6 602.6 L565.1 599.8 L564.6 595.6 L564.9 590.9 L561.8 588.0 M582.7 411.4 L578.6 411.2 L574.5 410.0 L570.5 408.9 L566.2 410.2 L562.1 408.9 M404.4 784.6 L402.0 789.1 L397.7 791.8 L393.7 794.7 L390.5 798.4 M308.3 492.2 L312.1 494.6 L317.2 493.8 L321.2 495.4 L324.0 500.2 L328.7 500.4 M825.8 253.0 L828.0 256.6 L829.8 260.5 L832.0 264.1 L835.4 266.9 L838.6 269.8 L840.1 273.9 L841.8 277.8 L844.3 281.2 M712.1 418.8 L715.9 421.2 L717.3 426.3 L722.3 427.3 L725.3 430.5 M418.5 735.1 L419.5 739.6 L420.9 744.0 L421.4 748.5 L422.7 752.9 L423.1 757.5 M637.6 443.0 L633.1 443.3 L628.7 441.2 L624.3 440.3 L619.7 441.9 L615.2 441.3 M537.7 426.1 L534.7 429.1 L531.8 432.2 L528.3 434.7 L525.4 437.8 L522.8 441.1 L520.6 444.8 L517.8 447.9 L514.5 450.7 M166.0 659.4 L169.2 661.9 L173.6 662.5 L177.4 663.8 L180.3 667.1 L183.2 670.3 L187.5 670.9 M185.6 634.5 L185.7 639.2 L183.0 643.6 L183.9 648.4 L183.5 653.1 M428.6 453.7 L430.4 458.1 L435.7 459.3 L438.8 462.5 L439.4 468.0 L442.4 471.2 L446.5 473.5 M220.6 704.2 L221.2 700.0 L222.6 695.8 L220.3 691.6 L216.6 687.5 L218.7 683.3 L221.5 679.0 L219.7 674.9 M737.2 454.6 L733.8 452.1 L730.2 450.2 L726.1 449.4 L721.7 449.4 L718.4 446.5 M656.2 452.4 L653.0 455.4 L648.1 455.5 L644.6 458.2 L641.4 461.3 L637.3 462.8 M603.0 487.7 L599.7 485.0 L597.3 481.2 L593.5 478.9 L590.2 476.1 L587.7 472.4 M468.7 480.9 L468.3 476.8 L465.8 473.1 L463.5 469.4 L463.2 465.2 L463.2 461.0 L463.7 456.7 M567.5 546.8 L570.8 550.4 L572.6 555.3 L576.3 558.5 L580.7 561.0 M162.4 632.0 L162.9 636.6 L166.0 640.8 L165.5 645.5 L163.7 650.4 L164.7 654.9 L166.0 659.4 M745.2 257.7 L749.6 257.5 L753.9 257.8 L757.6 261.8 L761.8 263.1 L766.4 260.7 L770.7 261.3 M542.9 633.4 L539.5 636.1 L534.4 634.4 L531.3 638.2 L527.3 639.3 M484.6 453.7 L480.5 454.4 L476.4 456.0 L472.1 455.3 L467.8 455.8 L463.7 456.7 M470.5 391.0 L465.6 390.4 L461.0 388.9 L457.3 385.5 L454.0 381.4 L448.8 381.3 M418.5 735.1 L419.3 730.9 L422.5 727.5 L424.7 723.8 L426.7 720.0 L427.5 715.8 L428.1 711.4 L429.4 707.4 M429.4 707.4 L434.3 707.7 L436.3 712.3 L438.8 716.2 L443.5 716.8 M675.8 369.6 L671.2 369.6 L666.9 372.2 L662.5 373.2 L657.7 371.3 L653.1 371.4 L648.6 372.6 M719.3 462.7 L718.2 458.7 L719.8 454.6 L718.5 450.6 L718.4 446.5 M178.5 601.9 L183.0 604.2 L185.0 608.9 L188.2 612.3 L191.4 615.8 M355.7 518.6 L352.9 515.1 L352.6 510.7 L351.2 506.7 L348.5 503.2 L347.6 499.0 M222.9 647.4 L223.9 643.3 L227.0 639.5 L224.3 634.7 L224.3 630.4 L226.8 626.6 M673.4 393.8 L669.6 392.0 L667.2 388.6 L665.5 384.2 L662.6 381.4 L659.0 379.3 L654.8 377.9 L650.9 376.2 L648.6 372.6 M418.5 735.1 L422.3 732.7 L427.0 731.7 L429.6 727.8 L432.5 724.2 L435.8 721.2 L439.5 718.8 L443.5 716.8 M364.9 385.8 L369.0 386.5 L373.2 386.4 L377.3 387.5 L381.4 387.6 L385.6 386.5 L389.7 386.6 M200.2 705.3 L197.2 701.9 L193.8 699.0 L189.2 697.5 L185.5 694.9 L182.9 691.0 L179.7 687.9 M251.4 624.8 L247.4 626.2 L243.1 624.5 L238.9 622.4 L235.0 625.1 L231.0 627.6 L226.8 626.6 M563.4 823.4 L562.8 828.4 L568.6 831.5 L567.8 836.6 L568.5 841.2 M709.1 362.3 L706.6 366.7 L702.7 369.8 L698.6 372.8 L695.7 376.8 M576.0 633.1 L577.7 637.5 L578.2 642.5 L582.2 645.9 L585.0 649.8 L586.1 654.5 M321.9 618.8 L318.7 622.3 L314.1 624.0 L309.6 625.8 L306.3 629.1 L303.8 633.4 L300.2 636.4 M517.7 813.5 L520.7 810.6 L525.2 809.2 L527.9 806.0 L528.6 800.9 L529.8 796.3 L533.6 794.2 L538.3 792.9 L540.7 789.4 M458.3 703.3 L459.2 698.6 L462.3 694.5 L463.3 689.9 L463.2 684.9 M633.6 557.6 L628.8 555.8 L623.5 558.4 L618.7 555.9 M670.4 299.8 L671.7 303.9 L672.7 308.2 L675.0 311.9 L677.0 315.7 L679.7 319.1 M383.4 675.5 L387.5 674.7 L390.0 670.0 L394.2 669.4 L399.2 670.5 L402.5 667.8 L406.0 665.7 M182.1 287.9 L186.4 287.8 L190.9 288.6 L194.9 287.3 L198.7 284.2 L202.7 282.6 L207.0 282.4 L211.3 282.9 M432.3 643.8 L432.5 648.5 L430.4 652.4 L427.2 656.0 L425.8 660.2 L425.3 664.7 M516.9 753.3 L513.2 756.1 L513.1 761.2 L511.1 765.1 L508.3 768.4 L504.1 770.9 L502.6 775.1 M594.4 559.3 L592.9 555.0 L591.1 551.0 L586.9 548.6 L583.3 545.8 L582.0 541.4 M321.9 618.8 L322.2 623.1 L321.0 627.7 L323.2 631.6 L326.4 635.4 L327.3 639.6 L326.0 644.2 L327.2 648.4 M160.8 425.7 L162.2 430.2 L164.3 434.3 L168.5 437.1 L170.8 441.1 L172.4 445.5 M702.9 321.6 L703.4 326.4 L704.4 331.1 L704.2 336.0 L704.7 340.7 M374.4 656.0 L372.4 651.9 L370.4 647.9 L365.9 645.5 L365.0 640.7 L362.0 637.4 M615.2 441.3 L611.1 441.6 L606.7 440.9 L602.9 442.7 L599.0 444.6 L594.9 444.8 M496.9 606.9 L493.4 604.8 L490.3 602.1 L486.9 599.9 L483.2 598.2 L479.0 597.2 L475.2 595.8 L472.2 592.9 L468.6 590.9 L465.3 588.5 M711.0 389.7 L707.5 386.0 L704.4 382.0 L698.1 381.7 L695.7 376.8 M735.1 474.6 L730.8 472.1 L729.0 466.3 L722.8 466.3 L719.3 462.7 M510.9 677.9 L512.3 673.5 L516.1 670.1 L517.3 665.7 L517.9 661.0 L519.5 656.7 M542.9 633.4 L539.8 630.6 L536.1 628.5 L532.5 626.3 L529.5 623.4 L526.4 620.5 L523.2 617.9 M637.3 462.8 L633.9 466.0 L629.8 468.3 L626.2 471.2 L623.5 475.1 M213.4 385.4 L216.4 382.5 L220.1 380.6 L224.8 380.3 L226.8 376.0 L229.8 373.0 L233.8 371.7 M628.6 354.8 L626.6 350.5 L627.3 345.9 L628.3 341.2 L628.2 336.7 L623.9 332.8 L622.4 328.5 L623.6 323.8 L623.4 319.3 M475.1 725.5 L470.8 725.9 L466.6 726.6 L463.5 730.9 L459.4 731.7 L455.0 731.7 M503.4 566.5 L506.3 569.8 L509.0 573.3 L511.6 576.8 L512.1 581.5 L513.1 585.9 L514.4 590.1 L517.5 593.4 L520.0 596.9 M205.8 604.7 L205.3 600.6 L207.9 596.5 L205.9 592.3 L206.2 588.2 M496.9 606.9 L499.8 609.9 L501.6 613.7 L501.7 618.4 L504.0 621.9 L508.3 624.0 L510.8 627.4 L512.1 631.4 M542.9 633.4 L545.0 629.0 L550.5 627.6 L552.0 622.8 L555.1 619.3 M699.3 494.7 L700.4 490.8 L700.6 486.6 L703.8 483.5 L706.2 480.1 L705.8 475.7 L707.3 472.0 M800.3 261.2 L797.0 264.0 L794.5 267.7 L792.7 272.1 L789.6 275.2 L785.1 276.8 L781.5 279.4 M582.7 411.4 L579.2 414.7 L574.4 417.1 L572.8 421.8 L571.9 427.0 L568.6 430.5 M423.9 683.6 L426.2 679.0 L424.7 674.1 L422.1 669.2 L425.3 664.7 M355.7 518.6 L357.5 522.7 L360.2 526.6 L358.6 531.8 L360.9 535.8 M422.7 381.4 L418.2 383.4 L413.6 385.2 L409.9 388.5 L405.8 391.2 M520.0 596.9 L521.4 592.6 L523.0 588.4 L522.5 583.7 L522.6 579.2 L524.2 575.0 L525.6 570.7 L526.4 566.3 M806.1 463.6 L802.3 465.7 L799.3 468.9 L796.1 472.0 L792.8 474.7 L788.5 476.2 L785.0 478.7 L780.8 480.3 L777.2 482.8 L774.1 485.9 M225.5 731.4 L229.5 729.7 L232.7 727.2 L234.4 722.8 L235.9 718.3 L239.8 716.4 L243.3 714.2 L247.1 712.3 M581.9 679.1 L583.9 675.2 L585.0 671.2 L583.1 666.7 L582.9 662.4 L584.3 658.4 L586.1 654.5 M513.6 494.5 L509.9 496.7 L506.0 498.8 L501.6 500.1 L499.2 504.4 L496.3 508.0 L492.8 510.7 L488.3 511.8 M438.5 737.9 L442.8 736.9 L446.3 733.7 L451.1 734.0 L455.0 731.7 M608.5 611.5 L611.9 609.2 L615.9 607.7 L618.9 604.8 L621.2 601.0 L625.4 599.7 M600.2 365.1 L596.0 364.4 L592.0 363.3 L588.1 362.0 L584.8 359.3 L581.5 356.5 L577.4 355.7 M455.0 731.7 L458.5 734.0 L461.9 736.6 L464.2 740.4 L466.9 743.7 L470.5 746.1 M623.4 319.3 L620.9 316.1 L616.7 314.3 L614.9 310.6 L614.7 305.5 L611.5 302.8 L607.4 301.1 L604.8 298.0 L602.4 294.7 M158.8 712.9 L161.4 709.7 L164.2 706.8 L167.0 703.9 L169.3 700.4 L172.0 697.4 L174.9 694.5 L177.5 691.4 L179.7 687.9 M688.1 509.4 L691.6 506.3 L695.2 503.2 L697.5 499.1 L699.3 494.7 M293.3 554.1 L297.9 555.2 L302.3 551.4 L306.9 552.7 L311.5 553.3 M388.0 737.8 L384.6 740.4 L381.0 742.5 L376.9 743.6 L373.1 745.2 L369.0 746.4 L365.2 748.2 L362.0 750.9 L358.5 753.3 L354.5 754.6 M349.9 398.6 L354.5 398.4 L359.1 398.4 L363.3 401.0 L367.8 402.2 L372.4 401.8 M834.0 311.6 L831.8 315.6 L830.0 319.7 L829.9 324.4 L828.7 328.8 L827.1 333.0 L826.0 337.4 L822.3 340.7 L820.8 344.9 M299.6 751.6 L304.1 751.7 L308.4 750.2 L312.9 750.4 L317.3 749.9 L321.7 748.7 L326.1 748.4 L330.6 748.7 M443.5 716.8 L444.5 712.7 L443.0 708.6 L442.0 704.5 L442.7 700.4 L443.9 696.4 L444.6 692.4 M206.2 588.2 L208.3 583.8 L208.4 578.6 L212.0 574.8 L213.2 570.1 M503.4 566.5 L502.4 562.2 L499.4 558.7 L496.5 555.2 L494.6 551.3 L495.2 546.3 L494.3 542.0 L491.3 538.5 M436.6 780.3 L436.9 775.9 L438.7 771.8 L441.6 768.0 L441.3 763.4 L441.5 758.9 L442.7 754.7 M774.1 317.0 L777.7 319.0 L781.4 320.7 L782.4 325.8 L785.3 328.6 L789.6 329.7 M224.7 585.0 L228.9 583.2 L233.7 584.3 L238.0 583.2 L242.2 581.2 L246.7 580.5 M789.6 329.7 L793.7 332.4 L794.5 337.9 L798.0 341.1 L801.7 344.2 M899.9 272.6 L895.4 272.2 L891.8 274.4 L888.6 277.8 L884.9 279.6 L880.4 279.2 L876.2 279.6 L872.5 281.4 M514.5 450.7 L511.0 453.8 L507.8 457.0 L507.2 461.8 L506.5 466.5 L503.1 469.7 M519.5 656.7 L522.3 652.8 L521.9 647.4 L524.9 643.5 L527.3 639.3 M193.5 399.0 L196.7 396.6 L199.7 393.8 L203.7 392.5 L208.0 391.7 L209.6 387.0 L213.4 385.4 M448.8 381.3 L444.5 382.9 L440.1 383.4 L435.8 384.2 L431.4 381.3 L427.1 381.2 L422.7 381.4 M245.7 745.3 L241.9 743.6 L237.6 742.7 L236.0 737.7 L232.9 735.1 L229.0 733.6 L225.5 731.4 M503.4 566.5 L506.8 563.2 L507.8 558.1 L510.8 554.5 L513.9 550.9 L516.9 547.3 M555.6 525.3 L559.8 523.1 L563.0 519.7 L564.0 514.1 L567.7 511.3 L571.6 508.7 L575.4 506.0 M222.9 647.4 L227.9 647.2 L232.2 643.0 L237.5 645.0 L242.4 644.1 M516.9 753.3 L512.8 754.1 L508.8 755.7 L504.8 755.8 L500.7 753.6 L496.6 752.4 L492.6 752.6 L488.5 753.8 M521.3 323.6 L520.8 319.5 L520.2 315.4 L518.6 311.4 L517.9 307.4 L517.6 303.3 L516.6 299.2 L515.4 295.2 L516.6 290.9 L516.2 286.8 L516.7 282.6 L516.6 278.5 L517.4 274.3 L516.1 270.3 M178.5 601.9 L178.5 597.6 L175.7 593.7 L173.9 589.6 L175.4 585.1 L176.8 580.6 L174.8 576.5 M403.0 567.8 L398.8 567.8 L394.9 570.2 L391.1 572.5 L386.5 570.3 L382.1 568.9 L378.2 571.2 M471.7 553.1 L474.5 550.1 L477.9 547.8 L481.7 546.1 L485.6 544.4 L489.1 542.3 L491.3 538.5 M808.3 325.0 L809.6 320.5 L812.1 316.3 L814.0 312.0 L812.9 306.7 L815.5 302.6 M349.9 398.6 L345.1 399.3 L340.7 401.4 L336.7 404.3 L331.8 404.8 M475.1 725.5 L475.0 729.8 L475.7 734.3 L473.4 738.1 L470.8 741.8 L470.5 746.1 M593.2 530.1 L590.8 525.8 L589.3 521.3 L590.3 516.3 L589.9 511.7 M457.6 644.6 L459.5 640.0 L465.5 638.3 L465.0 631.9 L469.0 628.8 M270.0 762.4 L266.2 760.4 L262.4 758.5 L259.5 755.3 L258.0 750.0 L252.9 749.9 L248.0 749.4 L245.7 745.3 M808.3 325.0 L810.6 329.1 L813.2 333.0 L816.4 336.6 L819.0 340.4 L820.8 344.9 M224.3 457.6 L229.1 455.4 L230.4 450.2 L232.7 445.8 L237.3 443.5 M751.4 445.5 L746.5 444.1 L743.0 439.9 L737.8 439.2 M684.1 276.7 L685.2 281.1 L686.9 285.2 L688.2 289.4 L689.8 293.6 L691.9 297.6 L692.9 301.9 M402.6 434.6 L405.7 437.3 L408.5 440.2 L411.3 443.2 L414.8 445.3 L419.3 445.9 L423.0 447.7 L426.5 449.8 L428.6 453.7 M382.4 709.1 L379.9 705.6 L379.1 701.0 L377.1 697.2 L373.7 694.2 L370.5 691.2 L366.9 688.4 L365.6 684.1 L363.8 680.2 L361.9 676.3 M474.6 430.3 L476.2 426.5 L478.6 423.1 L478.6 418.7 L480.0 414.8 L482.0 411.2 M305.8 401.3 L301.6 401.9 L298.1 405.1 L293.9 405.5 L289.4 405.1 L285.2 405.9 L281.5 408.1 L277.4 409.3 M321.9 618.8 L318.6 615.3 L313.7 614.2 L309.9 611.4 L306.4 608.2 M412.4 408.0 L417.0 408.5 L421.6 409.1 L425.9 406.4 L430.2 404.7 L434.9 405.5 L439.4 405.4 M330.2 814.6 L332.7 818.7 L335.5 822.6 L334.1 828.7 L339.0 831.6 L340.7 836.1 M456.6 801.2 L459.4 798.3 L461.9 795.1 L467.0 794.7 L467.8 789.8 L471.3 787.6 M496.9 606.9 L494.9 602.9 L492.1 599.2 L490.6 595.0 L490.0 590.4 L489.3 585.9 L486.7 582.2 L484.1 578.4 L482.5 574.3 M373.7 523.0 L377.6 523.9 L381.1 526.2 L384.7 528.1 L388.5 529.6 L392.7 529.6 L396.5 530.8 L400.4 531.8 M341.2 482.1 L339.6 486.4 L337.0 490.0 L333.1 492.7 L330.9 496.5 L328.7 500.4 M175.3 554.4 L172.4 551.4 L170.6 547.6 L168.7 544.0 L166.8 540.3 L163.2 537.7 L161.3 534.1 M801.6 361.7 L800.0 357.3 L802.9 353.0 L802.0 348.6 L801.7 344.2 M513.6 494.5 L511.7 490.4 L510.2 486.2 L509.4 481.6 L507.0 477.8 L505.0 473.7 L503.1 469.7 M582.8 585.0 L578.1 582.4 L576.7 576.2 L571.1 574.4 M323.6 484.4 L326.6 487.8 L326.5 492.3 L326.0 496.8 L328.7 500.4 M742.0 290.6 L740.5 286.7 L738.7 282.9 L735.0 280.1 L733.6 276.1 L732.8 271.8 M577.9 526.4 L582.8 528.6 L588.3 528.3 L593.2 530.1 M555.6 345.6 L555.5 350.2 L556.0 354.7 L556.3 359.3 L556.2 363.8 L555.7 368.4 M312.7 509.7 L313.1 504.9 L310.3 501.0 L307.9 497.0 L308.3 492.2 M603.0 487.7 L607.1 486.7 L609.6 483.0 L611.7 478.9 L617.1 480.1 L620.8 478.4 L623.5 475.1 M382.4 709.1 L385.2 705.7 L388.0 702.3 L392.1 700.5 L397.1 699.5 L399.4 695.6 L401.8 691.8 L405.5 689.4 M230.4 570.9 L226.2 569.0 L221.7 572.6 L217.5 570.5 L213.2 570.1 M230.4 570.9 L227.8 566.5 L227.9 561.4 L228.8 556.1 L225.9 551.8 M488.3 687.7 L486.2 684.2 L485.0 680.4 L484.7 676.2 L482.7 672.6 L480.5 669.2 M707.3 472.0 L710.4 467.7 L715.0 465.4 L719.3 462.7 M600.2 365.1 L599.6 369.1 L599.0 373.1 L599.2 377.2 L598.2 381.2 L599.5 385.4 L599.2 389.4 L598.3 393.4 M582.8 585.0 L583.8 589.8 L582.9 594.5 L582.5 599.2 M474.6 430.3 L478.4 432.9 L483.0 431.9 L487.2 432.6 L491.5 432.9 L495.3 435.4 L499.5 436.2 M357.3 473.1 L360.2 476.3 L362.5 479.9 L365.1 483.3 L367.3 486.8 L368.2 491.3 L369.9 495.2 L372.7 498.5 M418.5 735.1 L414.9 737.0 L412.1 740.0 L409.7 743.5 L407.1 746.7 L404.5 749.8 L400.8 751.7 L396.3 752.5 L393.9 756.1 L390.4 758.1 M520.0 596.9 L521.5 601.0 L519.8 605.5 L521.6 609.6 L524.2 613.5 L523.2 617.9 M425.7 422.8 L421.4 424.0 L417.1 425.0 L413.8 428.1 L411.0 432.0 L406.7 433.1 L402.6 434.6 M224.7 585.0 L219.8 583.9 L215.7 587.9 L211.1 588.9 L206.2 588.2 M270.1 842.8 L274.0 841.2 L278.5 842.2 L282.4 841.0 L286.0 838.3 L290.2 837.9 M575.8 452.6 L580.0 452.1 L583.1 448.8 L586.7 446.7 L591.2 446.8 L594.9 444.8 M372.0 809.0 L368.6 805.8 L367.2 801.7 L368.0 796.6 L367.7 792.1 L363.6 789.1 L360.0 786.0 L359.9 781.3 M567.5 546.8 L572.5 545.4 L576.8 542.1 L582.0 541.4 M783.0 365.2 L784.4 361.1 L787.3 358.4 L791.1 356.3 L795.9 355.2 L798.4 352.1 L800.1 348.1 L801.7 344.2 M293.3 554.1 L288.9 555.4 L284.7 557.3 L280.1 555.9 L275.5 554.1 L271.1 554.5 L266.7 556.1 L262.4 556.9 M400.4 531.8 L401.7 527.7 L405.1 524.9 L409.5 522.7 L409.5 517.8 L410.8 513.7 L413.5 510.5 M375.9 312.8 L377.4 308.7 L378.9 304.5 L380.3 300.4 L381.1 296.0 L383.0 292.0 L384.9 288.0 L387.3 284.3 L390.8 281.0 L392.3 276.9 L393.2 272.5 M743.4 350.5 L743.4 346.4 L742.5 342.4 L743.5 338.3 L742.8 334.3 L743.4 330.2 L742.6 326.2 L741.6 322.2 L740.7 318.2 M429.4 707.4 L430.0 703.0 L428.5 699.2 L426.6 695.5 L424.8 691.7 L424.3 687.7 L423.9 683.6 M512.1 631.4 L507.7 631.4 L504.2 627.9 L500.2 626.3 L495.6 627.0 L491.5 625.8 M311.0 801.2 L310.6 805.4 L311.2 809.6 L311.1 813.8 L312.2 817.9 L312.1 822.2 L312.0 826.4 L312.4 830.5 M718.4 446.5 L722.4 445.2 L726.6 444.8 L729.8 441.4 L734.0 440.8 L737.8 439.2 M180.7 411.2 L178.5 407.0 L178.1 402.0 L175.0 398.2 L173.6 393.6 L172.0 389.2 M374.7 614.0 L373.0 618.1 L369.4 621.2 L368.2 625.6 L367.1 630.1 L364.3 633.6 L362.0 637.4 M409.7 590.5 L410.8 594.9 L412.1 599.2 L409.1 603.9 L411.2 608.2 L412.9 612.5 L412.3 617.0 M278.7 595.3 L275.5 598.8 L271.4 599.9 L266.7 599.2 L262.1 599.0 L258.6 601.5 L255.1 604.3 M599.7 425.7 L595.2 426.0 L590.7 426.4 L586.2 426.5 L581.9 428.3 L577.6 429.9 L573.0 429.5 L568.6 430.5 M234.6 814.8 L239.0 814.8 L242.6 818.2 L246.8 819.3 L251.6 817.9 L255.6 819.6 L259.6 821.3 M548.2 460.4 L550.8 457.3 L552.7 453.7 L554.7 450.2 L556.7 446.7 L558.1 442.8 L560.9 439.8 L564.0 437.0 L566.8 434.1 L568.6 430.5 M345.3 549.1 L342.9 553.2 L343.5 557.5 L346.0 562.0 L345.9 566.3 L344.0 570.4 M1078.9 284.1 L1074.7 284.0 L1070.3 284.0 L1066.3 281.8 L1062.0 281.1 L1057.6 282.7 L1053.4 281.7 M442.7 754.7 L443.4 750.1 L446.7 746.9 L451.2 744.4 L453.2 740.6 L453.0 735.6 L455.0 731.7 M586.2 491.9 L584.2 496.0 L579.1 497.6 L578.3 502.6 L575.4 506.0 M516.9 547.3 L512.1 547.5 L507.9 545.9 L504.0 543.2 L500.7 539.0 L496.1 538.5 L491.3 538.5 M381.2 775.6 L378.7 772.0 L374.8 770.0 L371.9 766.9 L367.2 766.0 L364.1 763.0 L360.5 760.7 L357.2 758.1 L354.5 754.6 M503.4 566.5 L508.0 567.0 L512.6 566.8 L517.2 565.1 L521.8 565.4 L526.4 566.3 M224.7 585.0 L227.6 589.5 L229.4 594.5 L231.7 599.3 M628.6 354.8 L624.7 356.5 L620.6 358.0 L616.1 358.2 L612.2 360.1 L608.5 362.7 L604.5 364.3 L600.2 365.1 M648.8 479.8 L650.0 484.0 L653.4 487.6 L653.3 492.1 L652.0 496.9 L653.0 501.1 L655.3 505.0 M262.4 556.9 L265.1 553.4 L267.3 549.3 L270.9 546.6 L276.1 545.7 L279.2 542.6 L281.6 538.7 M711.0 389.7 L714.7 392.8 L718.7 395.4 L721.9 399.0 L726.2 401.2 M767.6 345.9 L763.3 345.2 L759.5 347.2 L755.8 349.6 L751.4 348.4 L747.2 348.2 L743.4 350.5 M389.7 386.6 L393.5 388.5 L397.7 389.0 L402.0 389.3 L405.8 391.2 M699.5 455.5 L703.2 458.8 L702.9 464.0 L704.8 468.1 L707.3 472.0 M628.6 354.8 L632.7 356.9 L636.2 359.6 L638.4 363.9 L640.9 367.9 L644.7 370.3 L648.6 372.6 M820.8 344.9 L816.0 344.9 L811.2 343.7 L806.4 345.1 L801.7 344.2 M463.2 684.9 L465.9 688.6 L469.1 691.9 L472.7 694.9 L473.3 700.0 L476.5 703.4 M184.6 739.1 L182.5 735.2 L180.5 731.2 L180.5 726.5 L179.6 722.1 L177.3 718.3 L175.9 714.1 M183.4 326.3 L179.4 328.2 L175.3 328.6 L171.0 325.5 L166.8 324.4 L162.8 327.3 M430.4 801.1 L434.8 802.4 L439.2 803.0 L443.5 800.8 L447.9 799.9 L452.3 800.5 L456.6 801.2 M630.9 385.9 L629.7 390.1 L627.1 394.0 L629.4 398.8 L629.0 403.0 L627.5 407.1 M259.6 821.3 L255.2 823.6 L252.4 828.1 L248.2 830.7 L244.0 833.2 M513.6 494.5 L513.5 498.9 L515.4 503.3 L514.5 507.7 L511.1 512.1 L512.0 516.5 L513.2 520.9 M446.5 473.5 L450.5 471.9 L453.5 469.1 L454.0 463.9 L457.1 461.4 L461.1 459.8 L463.7 456.7 M200.4 728.3 L203.1 731.4 L205.3 734.9 L207.5 738.6 L212.0 739.9 L215.7 742.0 L218.0 745.4 L220.6 748.6 L223.2 751.8 M527.3 639.3 L531.2 641.3 L533.3 644.9 L534.0 649.5 L537.4 651.9 M284.1 492.6 L288.1 492.9 L292.2 493.5 L296.2 492.9 L300.2 491.0 L304.3 491.6 L308.3 492.2 M711.0 389.7 L707.8 393.2 L703.6 395.9 L701.0 399.9 L698.4 404.0 M484.6 453.7 L487.5 456.6 L489.2 460.9 L492.4 463.4 L496.5 464.9 L499.8 467.2 L503.1 469.7 M562.7 561.3 L567.1 564.6 L566.4 571.3 L571.1 574.4 M191.8 366.4 L195.1 368.8 L198.7 371.0 L202.2 373.2 L205.3 376.0 L207.2 380.0 L210.1 382.9 L213.4 385.4 M215.0 357.6 L218.4 360.8 L223.5 361.8 L226.3 366.0 L229.3 369.9 L233.8 371.7 M272.1 647.3 L267.9 646.9 L263.4 648.8 L259.1 648.2 L255.1 645.9 L251.0 644.1 L246.8 643.2 L242.4 644.1 M160.8 425.7 L164.4 423.5 L169.1 423.1 L172.2 420.3 L173.9 415.7 L176.6 412.5 L180.7 411.2 M263.4 787.4 L266.9 789.8 L268.3 793.7 L268.8 798.3 L273.5 799.9 L275.2 803.6 M409.7 590.5 L413.5 587.9 L418.7 587.5 L422.4 584.7 L424.5 579.2 L428.7 577.3 L433.4 576.1 M742.0 290.6 L739.2 293.6 L737.4 297.4 L735.4 301.1 L731.7 303.3 L727.7 305.2 L725.5 308.7 M247.1 712.3 L248.9 708.4 L253.5 706.8 L255.1 702.8 L256.3 698.5 L259.5 695.7 L262.2 692.6 M808.3 325.0 L811.8 322.8 L815.7 321.3 L819.6 319.8 L823.6 318.5 L826.8 315.8 L829.8 312.6 L834.0 311.6 M637.6 443.0 L637.6 447.9 L636.4 452.9 L638.3 457.9 L637.3 462.8 M587.7 472.4 L589.3 468.6 L588.3 464.2 L589.0 460.1 L592.3 456.8 L593.9 453.0 L594.9 449.0 L594.9 444.8 M236.2 414.6 L231.4 413.8 L226.8 415.2 L222.3 417.9 L217.7 418.3 L212.8 417.1 M289.2 818.1 L293.7 816.3 L297.2 813.4 L300.6 810.2 L303.4 806.3 L306.9 803.4 L311.0 801.2 M675.9 474.1 L671.2 474.2 L666.7 475.5 L662.6 478.3 L658.2 479.7 L653.3 479.1 L648.8 479.8 M781.5 279.4 L777.3 278.2 L773.1 277.0 L768.9 276.4 L764.4 277.1 L760.2 276.2 L756.0 274.9 M800.3 261.2 L804.9 260.8 L808.9 258.8 L812.5 255.4 L817.4 255.9 L821.7 254.6 L825.8 253.0 M495.7 666.7 L490.6 667.3 L485.9 670.1 L480.5 669.2 M440.3 511.9 L435.7 513.6 L431.3 513.0 L426.9 510.8 L422.5 509.9 L418.0 509.8 L413.5 510.5 M443.5 716.8 L446.9 720.1 L447.7 725.4 L452.7 727.5 L455.0 731.7 M175.3 554.4 L179.3 554.7 L183.1 557.5 L187.1 558.4 L191.2 557.8 L195.4 556.2 L199.5 555.7 L203.4 556.8 M325.3 587.2 L320.6 587.4 L316.1 589.6 L311.5 589.5 L306.8 589.1 L302.1 588.1 L297.5 588.7 M164.9 464.5 L166.7 460.8 L170.2 457.8 L168.5 452.7 L170.6 449.2 L172.4 445.5 M465.9 518.2 L464.7 522.5 L463.3 526.8 L458.7 529.4 L456.2 533.1 L453.7 536.8 L452.8 541.3 L452.8 546.3 L450.3 550.0 L447.5 553.5 M372.6 417.5 L371.1 412.3 L372.2 407.0 L372.4 401.8 M367.9 841.0 L371.7 838.8 L376.2 838.0 L380.7 837.0 L383.9 833.9 L387.0 830.5 L390.7 828.1 L394.3 825.7 M386.0 551.6 L388.2 548.1 L391.6 545.5 L394.0 542.3 L394.9 537.8 L397.6 534.8 L400.4 531.8 M545.1 574.5 L549.4 573.9 L553.8 576.9 L558.1 575.3 L562.5 573.1 L566.8 573.4 L571.1 574.4 M519.5 656.7 L521.9 660.9 L526.2 664.0 L526.5 669.3 L528.9 673.5 M577.9 526.4 L581.7 523.3 L583.8 519.0 L587.2 515.7 L589.9 511.7 M516.1 270.3 L519.9 272.3 L523.9 273.9 L527.9 275.5 L531.7 277.6 L535.9 278.4 L540.2 279.0 L544.5 279.5 L549.0 279.2 L553.1 280.4 L557.5 280.5 L561.3 282.8 L565.3 284.0 L569.3 285.6 M401.7 712.6 L402.0 707.9 L400.6 702.9 L401.0 698.2 L403.5 693.8 L405.5 689.4 M442.7 754.7 L446.8 753.7 L450.9 753.1 L454.9 751.9 L458.7 750.1 L462.3 747.6 L466.4 747.1 L470.5 746.1 M592.7 332.6 L594.7 336.4 L594.4 340.8 L593.7 345.2 L594.3 349.4 L597.6 352.9 L599.7 356.7 L600.0 360.8 L600.2 365.1 M555.6 345.6 L559.9 344.7 L564.0 343.2 L567.7 340.6 L571.3 337.5 L575.9 337.4 L580.4 337.3 L584.9 336.7 L589.0 335.2 L592.7 332.6 M212.8 417.1 L209.1 419.6 L203.8 418.9 L201.4 423.8 L197.1 425.2 M428.6 453.7 L427.6 457.8 L425.8 461.5 L423.4 465.1 L421.5 468.9 L421.9 473.4 L421.9 477.7 L419.5 481.3 L418.0 485.2 M479.8 642.7 L481.9 647.1 L484.6 651.2 L487.4 655.2 M623.4 319.3 L624.6 315.3 L627.1 311.9 L630.8 309.0 L632.7 305.3 L632.3 300.7 L631.3 295.8 L632.2 291.7 L633.1 287.6 L637.0 284.7 L640.2 281.6 L640.6 277.3 M372.0 809.0 L367.4 810.8 L363.4 807.6 L359.3 804.8 L354.8 806.0 L350.4 806.7 M750.9 400.5 L746.8 401.2 L742.6 399.6 L738.5 399.0 L734.4 401.0 L730.3 402.2 L726.2 401.2 M334.1 673.7 L335.6 678.2 L339.4 681.3 L342.9 684.6 L346.4 687.9 L347.6 692.7 L349.3 697.1 M504.6 708.8 L506.7 704.6 L505.1 700.4 L503.6 696.3 L504.1 692.1 M423.8 827.0 L427.6 828.9 L431.0 831.5 L435.1 832.7 L439.2 833.8 L443.0 835.7 M268.5 522.8 L269.1 527.3 L267.9 531.5 L265.7 535.5 L264.8 539.7 L263.0 543.8 L262.6 548.1 L263.3 552.7 L262.4 556.9 M354.5 754.6 L350.3 754.8 L346.3 753.5 L342.6 751.5 L338.6 750.5 L334.6 749.4 L330.6 748.7 M270.0 762.4 L266.0 764.0 L261.8 765.1 L257.2 763.8 L252.9 764.2 L248.7 765.2 L244.5 766.0 L240.8 769.3 L236.4 769.5 L232.1 769.4 M537.5 397.0 L538.5 401.2 L536.3 405.3 L536.7 409.5 L539.4 413.6 L537.8 417.8 L536.8 422.0 L537.7 426.1 M205.8 604.7 L209.2 607.5 L212.3 610.5 L214.3 614.6 L216.5 618.5 L220.4 620.8 L224.5 622.8 L226.8 626.6 M487.6 797.4 L483.2 798.7 L478.7 798.5 L474.0 796.9 L469.7 798.2 L465.6 800.9 L461.2 801.7 L456.6 801.2 M449.0 626.2 L452.8 628.8 L457.2 626.3 L461.3 625.6 L464.8 630.2 L469.0 628.8 M550.1 666.0 L549.8 660.8 L552.1 656.6 L556.9 653.3 L556.6 648.1 L558.5 643.7 M270.1 842.8 L268.6 838.2 L265.4 834.4 L264.4 829.6 L261.2 825.8 L259.6 821.3 M430.4 801.1 L426.8 802.9 L422.6 803.1 L418.0 802.3 L415.7 808.2 L411.5 808.4 L407.4 809.0 M652.2 524.2 L650.4 519.0 L655.1 514.8 L656.0 510.1 L655.3 505.0 M576.0 633.1 L577.2 628.3 L582.4 626.6 L586.1 623.7 L588.4 619.8 L588.7 614.4 L592.3 611.4 M335.5 516.2 L339.7 515.4 L343.3 519.7 L347.7 517.1 L351.9 516.0 L355.7 518.6 M516.9 547.3 L519.6 550.7 L519.8 555.3 L521.9 559.0 L525.1 562.2 L526.4 566.3 M436.6 780.3 L439.4 783.4 L441.7 786.9 L443.7 790.7 L447.9 792.4 L451.8 794.4 L453.9 798.2 L456.6 801.2 M544.5 765.0 L540.8 767.4 L537.3 770.1 L535.3 774.4 L532.9 778.4 L529.8 781.5 L525.7 783.5 L522.2 786.2 L518.3 788.5 M230.4 570.9 L233.9 568.6 L237.8 567.1 L241.9 566.3 L245.5 564.1 M765.6 293.3 L768.7 290.4 L771.2 286.9 L775.2 285.0 L779.0 282.9 L781.5 279.4 M630.9 385.9 L634.0 389.0 L636.8 392.5 L641.7 392.8 L645.8 394.4 L648.6 397.8 L652.1 400.2 M767.6 345.9 L771.3 343.2 L773.8 339.0 L779.0 338.4 L783.6 336.9 L785.6 331.9 L789.6 329.7 M627.5 407.1 L631.8 406.6 L636.0 406.0 L639.9 404.1 L643.8 402.0 L648.0 401.4 L652.1 400.2 M205.2 443.5 L204.3 439.5 L202.3 436.1 L199.4 433.0 L197.6 429.4 L197.1 425.2 M409.7 590.5 L413.9 590.8 L418.3 590.5 L422.4 591.3 L426.3 592.9 L429.7 596.2 L433.9 596.3 L437.7 598.4 L441.9 598.8 M206.2 760.6 L207.8 764.9 L207.9 769.4 L205.4 774.1 L206.0 778.5 L207.4 782.8 L208.7 787.2 M311.0 801.2 L310.9 796.7 L311.4 792.3 L312.3 787.9 L313.3 783.5 L314.6 779.1 L315.0 774.7 L314.4 770.1 M172.9 761.9 L177.1 762.7 L181.3 762.4 L185.5 762.2 L189.6 762.4 L193.8 762.4 L197.9 761.0 L202.1 760.3 L206.2 760.6 M177.6 782.0 L181.4 779.7 L185.2 777.2 L188.7 774.4 L191.6 770.9 L195.0 768.0 L198.6 765.2 L202.4 762.9 L206.2 760.6 M623.4 319.3 L619.0 319.8 L615.6 322.4 L612.5 325.8 L608.7 327.6 L604.2 327.7 L600.1 328.8 L596.0 329.8 L592.7 332.6 M817.3 276.2 L821.8 277.3 L826.6 276.5 L831.2 276.6 L835.2 280.0 L839.6 281.6 L844.3 281.2 M409.7 590.5 L405.4 591.0 L401.1 590.9 L396.8 591.6 L392.7 593.6 L388.3 593.6 L384.0 593.4 M429.4 707.4 L432.8 704.7 L436.4 702.3 L438.8 698.7 L440.8 694.6 L444.6 692.4 M193.5 399.0 L193.2 394.9 L194.8 390.8 L194.8 386.7 L191.7 382.8 L190.3 378.8 L192.4 374.6 L193.0 370.4 L191.8 366.4 M568.6 430.5 L572.3 432.6 L575.4 436.0 L579.7 436.9 L584.4 437.2 L587.9 439.8 L591.0 443.0 L594.9 444.8 M449.0 626.2 L449.1 630.7 L451.7 634.0 L454.7 637.0 L456.9 640.5 L457.6 644.6 M229.9 791.3 L225.8 789.7 L221.6 788.8 L216.8 790.6 L212.7 789.5 L208.7 787.2 M325.3 587.2 L326.0 582.9 L324.8 578.3 L324.3 573.8 L325.0 569.4 L327.0 565.1 L328.3 560.8 M758.6 460.0 L757.9 464.5 L758.4 469.1 L757.3 473.6 L754.6 477.7 L755.0 482.3 M359.1 580.9 L355.9 584.1 L352.7 587.2 L348.2 589.1 L345.1 592.3 L342.3 595.9 L340.0 600.0 L336.6 602.9 M304.0 657.1 L302.6 653.1 L300.7 649.1 L300.4 644.9 L300.7 640.6 L300.2 636.4 M251.4 624.8 L255.7 624.8 L259.9 623.7 L264.2 623.5 L268.2 621.3 L272.3 619.7 L276.6 619.6 L281.1 620.3 L285.4 619.9 L289.5 618.6 M403.0 567.8 L398.3 565.9 L396.2 561.3 L394.4 556.4 L388.7 555.6 L386.0 551.6 M563.4 823.4 L559.6 826.0 L554.8 826.7 L550.1 827.6 L546.8 831.2 L542.8 833.5 M607.7 250.5 L611.6 252.5 L613.9 256.3 L616.2 260.3 L620.0 262.3 L624.8 263.2 L628.7 265.1 L631.9 267.9 L633.8 272.2 L637.0 275.1 L640.6 277.3 M275.2 803.6 L272.6 807.7 L269.5 811.2 L265.7 814.1 L262.4 817.5 L259.6 821.3 M278.7 595.3 L273.8 595.0 L270.4 591.5 L267.0 588.2 L262.2 587.6 M449.0 626.2 L444.9 625.3 L440.5 625.7 L436.4 624.9 L432.4 623.5 L428.3 622.4 L424.6 620.0 L420.5 619.1 L416.4 618.0 L412.3 617.0 M499.5 436.2 L502.4 433.0 L507.2 432.0 L509.4 428.1 L511.5 424.0 L515.6 422.3 M334.1 673.7 L338.9 672.7 L343.3 675.2 L347.9 676.5 L352.6 675.1 L357.3 675.7 L361.9 676.3 M293.3 554.1 L290.8 557.3 L285.9 558.3 L284.6 562.6 L282.9 566.8 L278.9 568.5 L276.1 571.4 M178.5 601.9 L182.4 599.7 L186.9 599.0 L191.3 597.8 L194.7 594.7 L197.8 591.1 L201.6 588.9 L206.2 588.2 M483.9 772.8 L479.9 775.8 L475.9 778.8 L474.9 784.3 L471.3 787.6 M304.0 657.1 L308.2 656.4 L312.2 655.4 L314.7 650.2 L318.6 649.1 L323.3 649.9 L327.2 648.4 M577.9 526.4 L581.8 530.8 L580.2 536.6 L582.0 541.4 M372.0 809.0 L376.2 807.8 L379.3 804.6 L382.0 800.7 L387.7 802.1 L390.5 798.4 M555.6 345.6 L558.8 348.2 L562.2 350.3 L566.9 349.8 L570.9 350.8 L574.2 353.1 L577.4 355.7 M276.1 571.4 L275.6 575.5 L276.2 579.5 L278.5 583.3 L279.9 587.1 L279.0 591.3 L278.7 595.3 M334.1 673.7 L332.4 669.6 L333.5 664.8 L331.9 660.7 L328.6 657.0 L327.6 652.8 L327.2 648.4 M222.9 647.4 L223.5 652.1 L224.0 656.8 L221.4 661.1 L219.1 665.5 L220.0 670.3 L219.7 674.9 M627.5 407.1 L626.1 410.9 L622.7 414.0 L621.6 417.9 L622.2 422.4 L622.5 426.8 L620.7 430.4 L619.3 434.2 L615.9 437.3 L615.2 441.3 M780.5 405.1 L775.8 406.8 L771.9 409.5 L769.5 414.2 L765.5 416.8 M546.3 550.2 L548.3 546.2 L548.5 541.6 L549.5 537.2 L552.8 533.7 L555.4 530.0 L555.6 525.3 M649.8 252.2 L649.2 256.7 L648.3 261.1 L645.6 264.9 L642.8 268.6 L641.5 272.9 L640.6 277.3 M513.6 494.5 L509.0 493.5 L505.1 489.9 L499.5 492.4 L495.1 490.7 L490.8 488.4 M572.6 609.6 L577.5 610.4 L582.3 611.7 L587.5 609.8 L592.3 611.4 M449.0 626.2 L452.4 623.3 L456.8 621.6 L460.4 619.0 L462.1 614.1 L465.9 611.6 L470.0 609.6 M602.1 575.0 L602.3 579.4 L599.2 582.8 L596.5 586.4 L595.9 590.6 L596.2 595.0 M630.9 385.9 L630.5 381.5 L629.4 377.1 L629.0 372.6 L630.1 368.1 L630.0 363.6 L630.3 359.1 L628.6 354.8 M345.3 549.1 L341.4 550.7 L338.6 554.0 L335.2 556.3 L331.8 558.7 L328.3 560.8 M750.9 400.5 L754.6 398.2 L758.2 395.7 L763.1 395.9 L766.9 393.7 L769.7 389.5 L774.4 389.2 M537.5 397.0 L535.5 392.4 L538.0 387.5 L537.4 382.8 L535.1 378.3 L535.4 373.5 M161.3 534.1 L165.8 533.4 L170.2 533.6 L174.6 535.0 L179.1 536.2 L183.5 535.1 L188.0 533.3 L192.4 534.4 M222.4 442.4 L224.6 447.3 L223.4 452.6 L224.3 457.6 M372.4 401.8 L377.2 401.4 L381.6 403.5 L386.0 405.1 L390.8 404.0 L395.4 404.9 M406.0 665.7 L404.4 670.4 L406.0 675.2 L408.1 679.9 L404.7 684.6 L405.5 689.4 M324.3 297.0 L328.7 298.9 L332.3 302.4 L337.8 301.7 L342.1 303.5 L346.1 306.1 M699.5 455.5 L703.4 454.0 L706.5 450.8 L709.8 447.8 L713.9 446.7 L718.4 446.5 M586.2 491.9 L584.1 487.8 L581.4 484.1 L576.6 482.3 L571.7 480.5 L570.7 475.4 L568.9 471.0 L565.3 468.1 M309.2 536.8 L313.3 535.6 L317.6 539.3 L321.5 535.1 L325.6 534.4 L329.8 536.0 M220.6 704.2 L218.3 700.2 L212.5 699.6 L209.3 696.5 L207.7 691.7 L204.5 688.5 M342.3 630.2 L337.6 632.5 L336.8 638.0 L334.8 642.4 L329.4 644.1 L327.2 648.4 M711.5 294.2 L710.0 290.3 L707.9 286.6 L711.7 281.9 L710.4 278.0 L708.1 274.3 M267.6 713.1 L263.4 714.2 L259.4 713.0 L255.4 709.9 L251.2 713.0 L247.1 712.3 M675.9 474.1 L675.0 478.5 L672.5 482.2 L670.3 486.1 L669.4 490.4 M225.4 527.3 L229.2 529.1 L233.9 527.9 L237.7 530.1 L241.4 532.5 L245.8 532.4 M329.8 536.0 L326.7 538.9 L322.6 540.6 L319.8 543.7 L318.6 548.5 L315.5 551.3 L311.5 553.3 M594.4 559.3 L598.1 555.7 L600.1 550.7 L604.3 547.5 M575.0 380.9 L578.8 383.3 L583.8 383.2 L587.2 386.2 L589.8 390.7 L594.3 391.7 L598.3 393.4 M423.9 683.6 L419.8 686.7 L414.9 687.2 L409.7 686.8 L405.5 689.4 M740.7 318.2 L744.0 315.0 L749.7 317.1 L752.2 312.2 L756.4 311.1 M172.9 761.9 L174.2 757.8 L177.2 754.5 L180.1 751.2 L181.1 747.0 L181.8 742.5 L184.6 739.1 M328.3 560.8 L332.3 563.1 L337.4 563.6 L340.3 567.5 L344.0 570.4 M266.7 734.7 L270.2 736.9 L274.3 737.9 L278.5 738.6 L281.8 741.3 L284.5 745.0 L287.8 747.7 L292.0 748.5 L295.9 749.8 L299.6 751.6 M725.3 430.5 L725.1 426.3 L725.4 422.2 L724.4 417.9 L724.1 413.7 L724.4 409.6 L726.1 405.4 L726.2 401.2 M452.5 668.0 L456.5 666.0 L459.9 662.8 L464.1 661.1 L467.9 658.7 M526.5 474.5 L522.0 472.7 L517.3 471.6 L512.4 472.0 L507.5 471.8 L503.1 469.7 M391.8 510.4 L394.4 514.3 L393.6 519.6 L396.1 523.6 L399.8 527.1 L400.4 531.8 M613.3 525.0 L609.4 526.5 L605.4 527.7 L601.3 528.3 L596.9 528.0 L593.2 530.1 M602.1 575.0 L603.9 579.4 L606.3 583.2 L610.8 585.0 L614.4 587.6 M324.3 297.0 L321.5 300.6 L318.9 304.3 L315.0 306.8 L310.3 308.6 L307.9 312.5 L304.9 315.8 L302.4 319.7 M383.6 478.3 L386.2 474.7 L388.2 470.5 L392.6 468.5 L396.1 465.8 L399.5 463.0 L401.8 459.1 M817.3 276.2 L819.4 272.5 L819.8 268.3 L821.5 264.6 L823.5 260.9 L824.2 256.8 L825.8 253.0 M685.7 343.7 L683.6 339.9 L681.7 336.0 L682.5 331.5 L683.7 326.8 L681.5 323.0 L679.7 319.1 M305.8 401.3 L309.2 398.3 L313.0 396.0 L317.9 395.9 L322.2 394.5 L325.6 391.4 L329.1 388.7 L332.8 386.3 M335.5 516.2 L330.4 516.8 L325.8 515.6 L322.2 511.0 L317.6 509.9 L312.7 509.7 M391.8 510.4 L394.6 507.4 L397.8 505.0 L399.0 500.4 L401.7 497.4 L404.9 494.9 L408.7 493.1 L412.4 491.0 L415.7 488.7 L418.0 485.2 M546.7 811.3 L542.6 811.6 L538.4 811.5 L534.2 811.0 L530.1 812.3 L526.0 813.8 L521.9 814.4 L517.7 813.5 M622.7 567.4 L620.8 563.8 L621.9 559.1 L618.7 555.9 M537.5 397.0 L533.6 396.1 L530.2 393.5 L526.7 391.4 L522.3 392.0 L518.2 391.5 L514.8 389.2 M474.6 430.3 L472.0 427.1 L469.4 423.9 L466.2 421.1 L464.1 417.5 L463.8 412.9 L463.1 408.5 L459.7 405.8 M333.2 783.6 L331.7 779.3 L331.0 775.0 L331.5 770.5 L333.6 766.0 L333.8 761.6 L330.9 757.4 L330.5 753.1 L330.6 748.7 M555.7 368.4 L551.8 370.0 L547.3 369.2 L543.6 371.9 L539.5 372.9 L535.4 373.5 M178.2 514.9 L180.8 518.0 L182.2 521.9 L184.1 525.5 L187.6 527.9 L191.1 530.3 L192.4 534.4 M423.8 827.0 L423.6 822.4 L424.1 817.9 L428.1 814.3 L430.7 810.4 L430.1 805.6 L430.4 801.1 M338.5 723.1 L343.0 723.4 L347.5 722.8 L352.1 722.2 L356.5 723.1 L360.9 724.4 L365.3 725.0 M510.9 677.9 L512.4 682.4 L514.6 686.6 L516.1 691.2 L517.9 695.6 L521.4 699.2 M383.2 635.3 L378.9 634.9 L374.6 635.4 L370.7 639.0 L366.1 636.0 L362.0 637.4 M545.1 574.5 L549.4 572.9 L552.6 569.8 L555.7 566.7 L558.7 563.4 L562.7 561.3 M439.4 405.4 L443.5 404.9 L447.5 406.4 L451.6 406.5 L455.7 404.7 L459.7 405.8 M178.5 601.9 L179.7 597.7 L184.3 595.3 L187.2 592.0 L186.6 586.7 L187.4 582.2 L190.5 578.9 L193.2 575.5 M204.5 688.5 L203.0 692.6 L203.7 697.3 L200.2 700.8 L200.2 705.3 M1030.3 331.1 L1026.9 328.4 L1025.2 324.1 L1022.9 320.4 L1018.0 319.0 L1014.3 316.5 L1013.0 311.9 L1009.9 308.9 L1006.9 305.8 M742.0 290.6 L745.3 293.5 L746.4 297.7 L747.0 302.4 L752.4 303.7 L755.0 307.0 L756.4 311.1 M174.8 576.5 L179.4 575.6 L183.8 572.6 L188.5 573.9 L193.2 575.5 M470.0 609.6 L469.2 614.4 L470.5 619.2 L470.5 624.0 L469.0 628.8 M568.5 841.2 L564.5 839.1 L559.7 839.6 L554.7 840.7 L551.3 836.3 L547.6 833.2 L542.8 833.5 M351.0 654.8 L346.9 654.2 L343.2 652.1 L339.5 650.1 L335.2 650.2 L330.9 650.3 L327.2 648.4 M735.1 474.6 L739.5 473.0 L742.3 468.7 L745.2 464.7 L748.8 461.8 L754.2 461.6 L758.6 460.0 M691.6 479.5 L688.0 481.6 L685.0 484.6 L681.3 486.5 L676.8 486.7 L672.8 488.0 L669.4 490.4 M722.8 327.1 L721.6 322.3 L722.2 317.6 L725.9 313.5 L725.5 308.7 M468.7 480.9 L472.9 483.0 L477.3 484.7 L482.3 484.4 L487.0 485.2 L490.8 488.4 M287.6 679.5 L290.0 675.5 L292.6 671.7 L295.1 667.8 L298.7 664.6 L301.5 661.0 L304.0 657.1 M304.0 657.1 L300.2 655.2 L295.9 655.1 L291.3 655.8 L287.3 654.7 L283.4 653.3 L279.8 650.7 L276.2 648.2 L272.1 647.3 M321.9 618.8 L326.0 621.0 L331.0 621.6 L335.1 623.9 L338.2 627.9 L342.3 630.2 M331.8 404.8 L334.9 407.8 L338.5 409.9 L343.0 410.8 L346.1 413.7 L349.4 416.3 M443.0 835.7 L447.2 833.7 L452.0 832.6 L454.3 827.9 L457.0 823.9 L461.8 822.8 L465.5 820.1 M558.5 643.7 L554.1 644.9 L550.1 647.2 L546.1 649.4 L541.4 649.6 L537.4 651.9 M637.6 443.0 L641.7 444.1 L645.0 447.0 L648.2 449.8 L652.3 451.0 L656.2 452.4 M783.0 365.2 L778.6 366.0 L774.5 367.4 L772.2 371.9 L768.3 373.7 M233.8 371.7 L235.7 376.0 L232.5 381.1 L236.3 385.2 L236.4 389.8 M596.2 595.0 L601.0 593.7 L604.7 589.8 L609.9 589.5 L614.4 587.6 M544.5 765.0 L544.6 769.2 L543.7 773.2 L541.6 777.1 L540.4 781.0 L540.4 785.2 L540.7 789.4 M255.1 604.3 L256.3 599.9 L259.4 596.3 L259.6 591.4 L262.2 587.6 M767.0 439.0 L766.2 443.6 L761.8 446.7 L762.3 451.7 L761.0 456.1 L758.6 460.0 M545.1 574.5 L540.9 573.8 L537.8 570.7 L533.4 570.6 L529.7 568.7 L526.4 566.3 M180.0 428.7 L184.5 428.7 L188.7 427.7 L192.8 425.6 L197.1 425.2 M560.9 490.0 L561.9 485.6 L562.9 481.3 L562.3 476.6 L564.2 472.4 L565.3 468.1 M510.9 677.9 L509.9 673.4 L507.1 669.6 L505.5 665.3 L506.4 660.3 L504.2 656.2 M475.1 725.5 L479.6 727.8 L484.3 727.8 L489.1 727.1 L493.9 727.2 L498.5 728.2 M391.8 510.4 L388.1 512.8 L385.1 516.3 L382.3 519.9 L377.3 520.5 L373.7 523.0 M767.0 439.0 L763.0 440.3 L759.1 442.0 L755.4 444.2 L751.4 445.5 M442.7 754.7 L442.2 750.3 L440.7 746.3 L438.4 742.4 L438.5 737.9 M449.0 626.2 L447.9 622.3 L445.3 618.8 L444.5 614.8 L446.8 610.0 L445.2 606.3 L442.5 602.8 L441.9 598.8 M691.6 479.5 L693.1 483.5 L696.2 486.7 L698.9 490.1 L699.3 494.7 M433.4 576.1 L434.6 571.6 L437.8 568.4 L442.2 565.9 L443.5 561.5 L444.1 556.7 L447.5 553.5 M748.2 422.6 L752.4 420.9 L756.5 418.8 L761.0 417.6 L765.5 416.8 M504.6 708.8 L503.0 712.6 L501.2 716.3 L503.0 721.1 L499.6 724.3 L498.5 728.2 M630.9 385.9 L627.7 383.3 L624.2 381.2 L620.6 379.1 L616.7 377.5 L613.2 375.3 L610.1 372.5 L606.7 370.2 L603.5 367.5 L600.2 365.1 M670.4 299.8 L674.8 301.1 L679.4 300.3 L684.2 298.3 L688.3 302.4 L692.9 301.9 M716.3 496.0 L715.0 492.0 L712.6 488.3 L713.5 483.4 L711.8 479.4 L708.0 476.3 L707.3 472.0 M712.1 418.8 L716.0 416.1 L719.6 413.3 L719.7 407.6 L722.4 404.0 L726.2 401.2 M546.7 811.3 L546.8 806.6 L546.0 802.1 L543.1 798.2 L540.7 794.1 L540.7 789.4 M586.2 491.9 L586.8 495.9 L587.0 499.9 L589.2 503.6 L589.7 507.6 L589.9 511.7 M817.3 276.2 L815.2 271.7 L811.9 268.6 L807.6 266.6 L803.6 264.3 L800.3 261.2 M440.3 511.9 L440.4 507.6 L442.1 503.5 L444.6 499.5 L444.4 495.1 L445.6 490.9 L445.0 486.4 L444.7 482.0 L445.2 477.7 L446.5 473.5 M175.5 351.8 L177.2 347.7 L178.9 343.5 L178.5 338.7 L179.2 334.3 L182.2 330.5 L183.4 326.3 M774.1 485.9 L769.3 485.3 L764.6 483.6 L759.7 483.6 L755.0 482.3 M193.5 399.0 L188.8 397.8 L185.5 393.8 L181.9 390.3 L177.5 388.5 L172.0 389.2 M630.9 385.9 L634.5 383.3 L638.6 381.4 L642.2 378.8 L645.0 375.1 L648.6 372.6 M234.6 814.8 L237.7 817.9 L237.9 822.4 L238.2 826.9 L241.0 830.1 L244.0 833.2 M439.4 405.4 L436.9 409.1 L434.1 412.5 L430.2 415.0 L427.9 418.9 L425.7 422.8 M817.3 276.2 L818.1 280.7 L815.6 284.9 L814.8 289.3 L815.7 293.8 L816.1 298.2 L815.5 302.6 M452.5 668.0 L452.9 672.6 L449.3 676.0 L447.2 679.8 L444.5 683.4 L444.6 687.9 L444.6 692.4 M474.6 430.3 L477.1 433.9 L478.3 438.0 L477.5 442.9 L481.0 446.1 L484.2 449.3 L484.6 453.7 M450.0 426.7 L445.9 426.9 L442.2 423.9 L438.0 423.6 L433.8 424.1 L429.7 423.8 L425.7 422.8 M182.4 815.0 L186.7 817.0 L191.2 817.6 L196.0 815.2 L200.6 814.1 L204.9 816.4 L209.2 818.0 L213.7 818.4 M514.5 450.7 L511.5 447.8 L507.5 445.9 L506.2 441.3 L502.6 439.0 L499.5 436.2 M205.1 838.0 L205.9 833.7 L209.6 830.6 L210.8 826.5 L210.6 821.7 L213.7 818.4 M312.7 509.7 L316.8 507.5 L319.4 502.7 L325.2 503.4 L328.7 500.4 M638.1 504.3 L636.5 509.2 L637.1 514.1 L637.3 519.1 M496.7 642.4 L493.4 638.8 L495.8 633.5 L492.8 629.9 L491.5 625.8 M354.5 754.6 L358.5 755.0 L362.5 755.9 L366.5 755.8 L370.5 756.0 L374.5 756.4 L378.5 756.2 L382.4 757.9 L386.5 756.8 L390.4 758.1 M292.6 517.7 L296.0 520.3 L298.4 523.9 L300.5 527.6 L302.2 531.8 L306.2 533.9 L309.2 536.8 M357.3 473.1 L354.2 476.8 L352.5 481.1 L355.3 487.1 L352.1 490.8 L347.7 494.1 L347.6 499.0 M502.6 775.1 L505.3 778.3 L509.3 780.0 L513.0 782.0 L515.3 785.7 L518.3 788.5 M602.1 575.0 L606.0 572.9 L610.8 573.1 L615.5 573.1 L618.9 569.7 L622.7 567.4 M488.5 753.8 L488.5 758.8 L484.6 762.9 L484.5 767.9 L483.9 772.8 M582.8 585.0 L578.7 586.5 L574.2 585.0 L569.9 584.7 L566.2 589.0 L561.8 588.0 M633.0 532.0 L637.2 531.1 L641.2 530.1 L644.3 526.6 L647.9 524.6 L652.2 524.2 M270.0 762.4 L274.4 764.4 L279.4 765.4 L281.5 771.0 L285.6 773.5 L290.2 775.0 M1012.0 354.3 L1014.8 351.1 L1016.0 346.7 L1019.8 344.3 L1023.3 341.7 L1026.3 338.8 L1027.8 334.5 L1030.3 331.1 M575.8 452.6 L573.2 456.5 L571.9 461.3 L568.7 464.8 L565.3 468.1 M304.0 657.1 L307.6 659.4 L311.3 661.7 L314.9 664.1 L319.8 664.1 L323.6 666.1 L326.9 668.9 L330.0 672.1 L334.1 673.7 M310.1 569.5 L308.3 573.8 L304.5 576.8 L302.0 580.7 L299.7 584.7 L297.5 588.7 M765.6 293.3 L763.5 289.7 L764.7 284.4 L759.5 282.4 L756.7 279.2 L756.0 274.9 M596.2 595.0 L594.5 599.0 L595.1 603.4 L593.5 607.4 L592.3 611.4 M702.9 321.6 L698.2 321.5 L693.4 322.2 L688.9 320.7 L684.3 319.7 L679.7 319.1 M276.1 571.4 L279.7 574.2 L283.6 576.7 L287.2 579.6 L291.0 582.2 L294.2 585.6 L297.5 588.7 M510.9 677.9 L506.7 681.7 L507.6 687.9 L504.1 692.1 M235.6 688.2 L240.1 689.0 L244.8 687.7 L249.3 688.3 L253.3 691.2 L257.5 693.3 L262.2 692.6 M735.1 474.6 L737.0 479.3 L736.2 484.4 L738.0 489.1 L738.6 494.0 M206.1 311.3 L207.1 307.3 L209.0 303.5 L211.2 299.7 L211.4 295.5 L210.4 291.1 L209.9 286.8 L211.3 282.9 M465.5 820.1 L468.0 816.2 L471.2 813.1 L475.4 810.8 L479.3 808.3 L481.8 804.4 L484.6 800.8 L487.6 797.4 M325.3 587.2 L327.2 591.8 L330.5 595.4 L334.9 598.2 L336.6 602.9 M605.6 512.4 L610.5 511.2 L615.4 510.6 L620.4 511.5 L625.3 511.3 M448.8 381.3 L449.6 385.8 L450.6 390.3 L455.8 392.9 L458.7 396.5 L457.3 402.0 L459.7 405.8 M349.3 697.1 L351.1 700.7 L351.9 704.9 L353.1 708.8 L355.7 712.0 L360.7 713.8 L363.4 716.9 L363.6 721.4 L365.3 725.0 M983.8 261.9 L979.7 260.3 L976.6 257.4 L973.3 254.7 L970.0 252.0 L966.0 250.4 M388.1 356.6 L383.7 355.6 L380.3 351.2 L375.5 351.4 L370.5 352.3 L366.6 349.7 M436.6 780.3 L432.6 781.4 L428.6 782.2 L424.5 781.8 L420.2 780.7 L416.2 781.3 L412.3 782.7 L408.4 784.3 L404.4 784.6 M299.6 751.6 L298.3 755.6 L298.1 760.1 L293.2 762.6 L292.2 766.7 L292.3 771.3 L290.2 775.0 M167.6 368.1 L169.2 372.2 L169.2 376.6 L169.4 380.9 L169.2 385.4 L172.0 389.2 M458.3 703.3 L455.9 699.4 L450.4 699.2 L447.9 695.3 L444.6 692.4 M457.6 644.6 L462.0 643.7 L466.4 642.6 L470.9 642.9 L475.4 643.8 L479.8 642.7 M523.2 617.9 L524.5 622.1 L524.9 626.4 L525.1 630.9 L525.1 635.3 L527.3 639.3 M488.5 753.8 L483.5 753.1 L479.1 750.8 L475.8 746.1 L470.5 746.1 M362.8 556.0 L358.4 554.4 L354.3 552.0 L349.6 551.1 L345.3 549.1 M309.2 536.8 L308.7 532.2 L312.1 528.0 L312.4 523.4 L310.0 518.5 L311.2 514.1 L312.7 509.7 M487.6 797.4 L489.1 801.5 L488.9 806.0 L488.2 810.5 L487.3 815.1 L488.5 819.3 L491.2 823.3 L492.3 827.5 M514.8 389.2 L510.3 389.0 L505.8 389.4 L501.7 386.0 L497.4 385.2 L492.6 387.9 L488.3 386.1 M325.3 587.2 L323.4 591.0 L319.2 592.7 L315.0 594.3 L312.8 597.7 L312.8 603.1 L309.7 605.8 L306.4 608.2 M268.5 522.8 L266.7 518.6 L263.9 514.9 L259.2 512.7 L256.6 509.0 L255.9 503.8 L253.2 500.2 L249.8 497.0 M640.6 277.3 L643.7 280.1 L646.8 282.9 L651.0 284.2 L654.7 286.2 L657.3 289.6 L660.1 292.7 L662.9 296.0 L666.0 298.6 L670.4 299.8 M631.9 579.9 L628.1 583.0 L623.1 583.6 L618.1 584.0 L614.4 587.6 M523.0 836.4 L527.0 836.3 L531.0 836.2 L534.8 834.3 L538.6 832.7 L542.8 833.5 M289.2 818.1 L286.8 814.9 L281.6 814.2 L279.3 810.9 L278.0 806.5 L275.2 803.6 M555.6 525.3 L555.6 520.8 L556.3 516.4 L556.7 512.0 L559.3 507.8 L559.6 503.4 L560.9 499.1 L561.4 494.6 L560.9 490.0 M628.6 354.8 L632.1 352.6 L636.5 352.3 L640.7 351.6 L644.0 349.1 L647.3 346.4 L650.5 343.8 L654.1 341.7 L657.9 340.2 L661.9 339.1 M205.2 443.5 L205.9 447.5 L206.5 451.6 L204.4 455.6 L205.6 459.6 M412.4 408.0 L411.8 403.4 L410.0 399.3 L406.4 395.8 L405.8 391.2 M383.6 478.3 L387.8 479.6 L392.3 479.7 L396.5 480.9 L400.8 481.7 L405.3 481.7 L409.5 483.2 L413.8 483.9 L418.0 485.2 M429.4 707.4 L425.2 706.5 L421.4 708.5 L418.0 711.9 L413.9 712.0 L409.6 711.0 L405.3 709.8 L401.7 712.6 M474.6 430.3 L472.2 433.8 L471.6 437.9 L471.9 442.5 L469.5 445.8 L466.1 448.9 L464.2 452.5 L463.7 456.7 M541.4 493.1 L543.7 496.9 L544.2 501.5 L545.5 505.7 L548.0 509.4 L551.7 512.6 L552.5 517.1 L554.1 521.2 L555.6 525.3 M698.4 404.0 L697.7 408.2 L699.2 412.2 L701.1 416.1 L701.5 420.2 L701.0 424.5 L701.3 428.6 L701.9 432.7 M418.5 735.1 L415.2 732.6 L412.4 729.7 L410.4 726.2 L410.1 721.4 L407.8 718.1 L404.9 715.3 L401.7 712.6 M711.5 294.2 L708.2 296.7 L704.2 297.4 L699.9 297.6 L696.8 300.8 L692.9 301.9 M491.3 538.5 L494.8 536.4 L496.3 531.9 L500.4 530.6 L504.6 529.5 L507.8 527.0 L509.9 523.3 L513.2 520.9 M158.8 712.9 L161.1 716.8 L162.9 720.8 L160.3 726.1 L164.5 729.4 L165.1 733.8 M208.7 787.2 L208.8 791.8 L211.4 795.9 L214.7 800.0 L214.0 804.6 L212.3 809.5 L212.2 814.1 L213.7 818.4 M450.0 426.7 L453.6 429.6 L454.9 433.5 L454.9 438.1 L454.1 443.0 L456.9 446.2 L461.3 448.7 L463.3 452.3 L463.7 456.7 M177.6 782.0 L181.6 784.2 L184.2 787.7 L185.9 792.1 L190.2 794.0 L192.8 797.6 M586.1 654.5 L582.4 652.3 L578.7 650.0 L574.3 649.9 L569.8 649.6 L566.0 647.7 L562.5 645.2 L558.5 643.7 M675.3 423.3 L678.6 420.5 L681.2 416.9 L684.2 413.8 L688.6 412.4 L691.9 409.6 L695.3 407.0 L698.4 404.0 M781.5 279.4 L783.5 283.5 L786.3 287.3 L785.9 292.5 L787.7 296.7 L790.6 300.5 M206.2 760.6 L210.2 757.7 L215.5 757.7 L218.4 752.9 L223.2 751.8 M423.9 683.6 L427.9 685.6 L431.8 688.0 L436.2 689.1 L440.8 689.8 L444.6 692.4 M546.3 550.2 L541.8 551.4 L539.3 555.1 L537.4 559.5 L533.5 561.5 L529.2 563.0 L526.4 566.3 M575.4 506.0 L580.1 508.1 L584.9 510.2 L589.9 511.7 M408.9 644.2 L407.1 648.4 L408.8 652.9 L410.0 657.5 L407.6 661.5 L406.0 665.7 M289.5 618.6 L293.2 615.1 L297.7 613.0 L302.5 611.3 L306.4 608.2 M241.4 666.2 L242.4 661.8 L242.2 657.4 L239.4 652.8 L241.0 648.5 L242.4 644.1 M277.4 409.3 L281.8 410.3 L286.1 411.4 L290.0 413.8 L293.5 417.0 L297.8 418.2 L302.3 418.8 L307.0 419.0 L310.7 421.7 M575.0 380.9 L573.0 384.8 L569.8 388.2 L569.8 393.1 L570.2 398.1 L567.6 401.7 L564.1 405.0 L562.1 408.9 M191.8 366.4 L189.9 370.5 L187.7 374.3 L185.7 378.2 L182.0 380.8 L177.6 382.7 L174.3 385.5 L172.0 389.2 M289.2 818.1 L287.8 823.1 L291.3 827.9 L290.3 832.9 L290.2 837.9 M237.3 443.5 L237.6 447.7 L238.5 451.8 L240.0 455.7 L241.2 459.7 M684.1 276.7 L681.1 280.1 L677.4 283.1 L674.4 286.5 L674.1 291.5 L672.6 295.9 L670.4 299.8 M592.7 332.6 L590.8 336.9 L588.9 341.2 L586.4 345.1 L581.6 347.4 L578.5 350.9 L577.4 355.7 M321.5 334.0 L324.0 330.7 L326.8 327.6 L329.1 324.1 L331.4 320.7 L334.0 317.4 L338.3 315.7 L341.6 313.1 L344.0 309.7 L346.1 306.1 M899.9 272.6 L903.5 269.8 L907.3 267.2 L911.8 265.9 L916.0 264.0 L919.4 260.8 M603.0 487.7 L604.4 483.9 L606.2 480.2 L606.9 476.2 L606.0 471.7 L607.0 467.8 L609.1 464.1 L610.9 460.4 M310.1 569.5 L312.6 565.4 L317.7 566.8 L322.2 566.9 L324.4 562.1 L328.3 560.8 M463.2 684.9 L464.7 680.6 L466.0 676.4 L466.7 672.0 L465.8 667.3 L466.0 662.9 L467.9 658.7 M534.4 522.0 L537.1 525.5 L539.3 529.4 L540.6 533.6 L538.6 539.2 L540.3 543.2 L543.5 546.6 L546.3 550.2 M516.9 547.3 L517.6 542.7 L515.3 538.6 L512.8 534.4 L512.9 529.9 L513.7 525.3 L513.2 520.9 M207.9 500.9 L204.5 503.3 L200.9 505.3 L197.3 507.3 L193.5 509.0 L189.7 510.4 L184.9 510.0 L181.3 511.9 L178.2 514.9 M402.6 434.6 L398.5 435.2 L395.1 438.1 L391.4 440.2 L387.0 439.5 L382.8 439.4 L378.6 439.7 L374.9 441.7 M470.0 609.6 L465.9 608.4 L462.3 605.6 L458.9 602.6 L454.0 603.4 L449.2 603.6 L445.6 601.0 L441.9 598.8 M251.4 624.8 L250.0 628.9 L248.8 633.0 L244.7 635.8 L243.4 639.9 L242.4 644.1 M427.6 537.7 L426.1 533.6 L424.1 529.7 L421.7 526.0 L419.0 522.5 L416.3 518.9 L415.0 514.6 L413.5 510.5 M223.4 402.8 L221.7 399.1 L218.0 396.6 L217.4 392.3 L216.1 388.5 L213.4 385.4 M192.8 797.6 L195.5 800.8 L199.0 803.3 L202.5 805.7 L206.6 807.7 L208.4 811.8 L211.0 815.2 L213.7 818.4 M429.4 707.4 L425.9 704.9 L423.0 701.6 L420.0 698.5 L415.7 697.1 L411.7 695.3 L407.9 693.3 L405.5 689.4 M220.6 704.2 L223.8 701.2 L227.1 698.3 L228.8 693.9 L232.4 691.2 L235.6 688.2 M487.6 797.4 L491.3 795.8 L494.8 793.7 L498.9 793.2 L503.3 794.2 L507.5 794.1 L511.0 791.9 L514.5 789.6 L518.3 788.5 M545.1 574.5 L547.8 577.9 L550.4 581.6 L555.4 582.3 L560.0 583.4 L561.8 588.0 M575.0 380.9 L575.4 385.5 L575.8 390.0 L577.8 394.1 L579.9 398.2 L581.3 402.5 L581.6 407.1 L582.7 411.4 M215.0 357.6 L214.2 362.2 L215.4 366.9 L216.1 371.6 L214.8 376.2 L213.2 380.7 L213.4 385.4 M383.2 635.3 L381.5 631.1 L378.8 627.2 L377.0 623.0 L376.2 618.4 L374.7 614.0 M1049.5 307.7 L1045.3 307.9 L1041.0 306.7 L1036.8 306.1 L1032.5 306.3 L1028.3 305.9 L1023.9 307.8 L1019.7 307.7 L1015.4 307.0 L1011.2 305.6 L1006.9 305.8 M206.1 311.3 L204.0 307.4 L201.2 304.4 L197.4 302.2 L194.0 299.7 L190.1 297.7 L186.9 295.0 L184.1 291.9 L182.1 287.9 M633.0 532.0 L632.6 527.1 L636.6 523.6 L637.3 519.1 M586.2 491.9 L582.0 491.0 L577.6 493.4 L573.6 491.2 L569.5 489.4 L565.1 490.4 L560.9 490.0 M321.5 334.0 L324.3 337.2 L326.6 340.8 L329.5 343.8 L333.4 345.9 L336.6 348.7 L339.9 351.4 L343.0 354.2 L343.9 359.1 L347.5 361.5 M1049.5 307.7 L1049.4 303.3 L1050.6 299.0 L1052.7 294.9 L1051.9 290.3 L1052.5 286.0 L1053.4 281.7 M439.4 405.4 L439.5 400.8 L441.6 397.0 L445.6 393.9 L447.5 390.1 L446.7 385.1 L448.8 381.3 M412.4 408.0 L408.3 406.3 L403.7 407.3 L399.6 406.0 L395.4 404.9 M496.9 606.9 L501.3 606.4 L505.7 606.0 L509.4 604.0 L512.6 600.8 L516.0 598.3 L520.0 596.9 M304.2 711.4 L308.1 712.6 L312.2 712.8 L316.2 713.7 L319.4 716.8 L322.4 720.6 L326.6 720.7 L331.0 720.1 L335.0 720.8 L338.5 723.1 M504.6 708.8 L509.7 707.9 L514.0 705.8 L517.0 701.3 L521.4 699.2 M362.8 556.0 L362.0 560.1 L360.0 564.1 L362.4 568.7 L361.7 572.8 L359.5 576.7 L359.1 580.9 M452.5 668.0 L453.8 663.4 L454.2 658.6 L455.2 653.9 L456.1 649.2 L457.6 644.6 M640.6 277.3 L636.9 279.1 L633.5 281.9 L629.6 283.6 L625.7 285.0 L621.5 285.9 L617.6 287.6 L613.2 287.9 L609.5 290.1 L606.5 293.5 L602.4 294.7 M175.3 554.4 L175.5 558.8 L173.9 563.2 L173.7 567.6 L174.8 572.1 L174.8 576.5 M375.9 312.8 L374.8 316.9 L374.8 321.3 L374.5 325.5 L371.6 329.2 L369.2 332.9 L368.3 337.0 L368.2 341.4 L367.7 345.6 L366.6 349.7 M362.8 556.0 L366.8 558.1 L369.2 561.8 L371.1 566.1 L375.3 568.0 L378.2 571.2 M394.3 825.7 L393.2 821.2 L392.1 816.7 L391.2 812.2 L393.1 807.3 L391.6 802.8 L390.5 798.4 M357.0 454.0 L357.1 458.8 L358.9 463.5 L357.6 468.3 L357.3 473.1 M362.8 556.0 L362.7 551.9 L363.6 547.8 L361.0 543.9 L359.9 540.0 L360.9 535.8 M206.1 311.3 L202.5 314.2 L198.6 316.5 L194.0 317.7 L191.3 321.7 L187.8 324.7 L183.4 326.3 M638.1 504.3 L633.5 506.0 L629.9 509.5 L625.3 511.3 M245.7 745.3 L246.5 741.2 L247.2 737.1 L245.1 732.9 L243.6 728.7 L244.9 724.6 L246.9 720.5 L247.3 716.4 L247.1 712.3 M767.6 345.9 L767.3 350.5 L768.0 355.1 L770.4 359.7 L770.4 364.4 L768.3 369.1 L768.3 373.7 M740.7 318.2 L736.7 316.2 L733.0 313.6 L729.6 310.6 L725.5 308.7 M726.1 370.0 L724.0 373.5 L721.3 376.7 L716.7 378.4 L714.1 381.6 L712.3 385.5 L711.0 389.7 M468.7 480.9 L464.2 479.7 L459.3 479.5 L454.7 478.4 L450.8 475.5 L446.5 473.5 M383.2 635.3 L381.4 639.4 L379.8 643.6 L378.9 648.1 L376.0 651.8 L374.4 656.0 M669.4 490.4 L666.5 493.2 L663.5 496.0 L661.6 499.8 L658.2 502.2 L655.3 505.0 M245.8 532.4 L249.0 535.3 L251.9 538.4 L253.2 542.7 L253.4 547.7 L255.2 551.5 L259.0 554.1 L262.4 556.9 M170.0 307.4 L168.5 303.2 L168.2 298.7 L166.7 294.5 L164.8 290.5 L161.7 286.8 L161.5 282.3 L160.5 277.9 L158.8 273.8 M178.2 514.9 L175.5 518.2 L173.1 521.8 L170.0 524.7 L166.7 527.5 L163.8 530.6 L161.3 534.1 M737.2 454.6 L733.7 458.6 L728.8 459.7 L723.5 460.1 L719.3 462.7 M180.0 428.7 L178.6 433.1 L176.5 437.2 L174.1 441.2 L172.4 445.5 M514.8 389.2 L511.1 392.0 L509.8 396.6 L508.2 401.0 L504.2 403.5 L501.2 406.7 M541.4 493.1 L540.1 497.1 L538.3 501.1 L537.9 505.3 L538.8 509.9 L538.9 514.3 L535.2 517.8 L534.4 522.0 M314.4 770.1 L311.7 766.2 L309.3 762.0 L305.9 758.8 L302.3 755.5 L299.6 751.6 M175.5 351.8 L173.6 347.6 L170.9 343.9 L169.2 339.6 L167.6 335.2 L164.8 331.4 L162.8 327.3 M342.3 630.2 L344.4 626.3 L347.9 623.3 L351.1 620.2 L353.4 616.4 L354.9 612.1 L356.3 607.8 L358.5 604.1 M608.5 611.5 L609.0 607.4 L608.6 603.1 L609.9 599.2 L612.8 595.6 L615.3 592.0 L614.4 587.6 M750.9 400.5 L750.9 405.0 L750.3 409.4 L748.0 413.6 L747.6 418.0 L748.2 422.6 M487.6 797.4 L491.2 799.6 L494.2 803.0 L498.1 804.9 L502.1 806.4 L506.4 807.3 L510.3 809.1 L513.8 811.7 L517.7 813.5 M615.2 441.3 L612.4 445.7 L610.3 450.3 L611.2 455.5 L610.9 460.4 M162.4 632.0 L164.6 628.3 L166.5 624.5 L170.1 621.6 L171.2 617.4 L172.6 613.3 L173.7 609.0 L175.6 605.2 L178.5 601.9 M180.7 411.2 L183.8 414.2 L186.6 417.5 L191.5 418.6 L194.2 422.0 L197.1 425.2 M442.7 754.7 L437.7 754.6 L432.9 756.2 L428.2 757.8 L423.1 757.5 M463.2 684.9 L459.1 685.3 L455.2 686.4 L452.1 689.5 L448.8 692.1 L444.6 692.4 M184.6 739.1 L188.9 740.9 L192.0 744.0 L194.2 748.0 L195.9 752.4 L198.2 756.3 L202.8 757.8 L206.2 760.6 M289.2 818.1 L285.1 819.7 L281.0 821.4 L276.5 819.3 L272.0 817.5 L267.8 818.4 L263.9 821.4 L259.6 821.3 M245.5 564.1 L243.6 568.4 L248.1 572.2 L246.0 576.4 L246.7 580.5 M207.9 500.9 L212.3 501.0 L216.2 504.8 L220.7 504.3 L225.4 502.9 L229.6 504.6 M496.7 642.4 L494.7 647.4 L489.1 649.9 L487.4 655.2 M512.1 631.4 L515.1 628.2 L519.3 626.0 L520.4 621.3 L523.2 617.9 M661.9 339.1 L660.6 342.9 L659.9 346.9 L658.6 350.7 L658.0 354.8 L655.2 357.9 L653.0 361.4 L650.9 364.8 L650.2 368.9 L648.6 372.6 M675.9 474.1 L676.9 469.5 L674.0 464.9 L673.8 460.2 L676.6 455.5 L675.6 450.9 M182.4 815.0 L177.3 816.2 L172.3 815.7 L167.6 813.6 L162.6 813.1 M523.0 836.4 L518.4 835.9 L513.9 834.9 L509.6 833.3 L505.7 830.6 L501.5 828.6 L496.8 828.5 L492.3 827.5 M652.1 400.2 L650.1 395.8 L652.9 390.7 L652.2 386.1 L648.5 381.9 L648.2 377.3 L648.6 372.6 M575.8 452.6 L575.2 447.9 L573.0 443.7 L569.5 439.9 L569.9 434.9 L568.6 430.5 M383.4 675.5 L382.4 671.2 L379.1 668.0 L377.2 664.1 L376.9 659.5 L374.4 656.0 M225.4 527.3 L225.4 531.4 L224.5 535.5 L223.5 539.6 L224.8 543.7 L226.5 547.7 L225.9 551.8 M521.3 323.6 L524.7 321.3 L527.4 318.1 L531.1 316.3 L533.2 312.4 L536.9 310.4 L540.4 308.2 L543.9 306.1 L547.4 304.0 L550.9 301.8 L554.1 299.3 L556.8 296.1 L559.7 293.2 L562.2 289.8 L566.2 288.2 L569.3 285.6 M661.9 339.1 L665.2 336.1 L666.3 331.1 L668.7 327.2 L673.8 325.9 L677.3 322.9 L679.7 319.1 M767.6 345.9 L765.6 349.9 L762.4 352.9 L757.6 354.4 L756.2 358.9 L753.1 362.0 L750.6 365.6 M198.5 474.2 L194.2 475.5 L189.7 476.3 L186.2 479.6 L182.7 482.9 L177.8 482.9 L173.7 484.7 M436.6 780.3 L440.5 778.3 L443.4 774.8 L447.4 772.7 L452.4 772.4 L455.2 768.7 L458.6 765.8 L462.5 763.8 M335.5 516.2 L333.4 519.9 L334.9 524.6 L333.7 528.5 L331.0 532.0 L329.8 536.0 M582.0 541.4 L586.2 543.7 L591.1 543.4 L595.4 545.2 L599.8 546.7 L604.3 547.5 M432.3 643.8 L429.9 640.4 L427.0 637.3 L423.9 634.4 L423.0 629.9 L420.0 626.9 L417.6 623.5 L414.8 620.3 L412.3 617.0 M230.4 570.9 L235.1 572.3 L237.9 576.9 L241.7 579.7 L246.7 580.5 M458.3 703.3 L454.8 707.0 L452.7 712.0 L447.7 714.0 L443.5 716.8 M342.3 630.2 L344.4 634.1 L346.5 637.9 L346.8 642.5 L346.5 647.1 L349.5 650.7 L351.0 654.8 M205.8 604.7 L202.3 607.7 L196.9 608.1 L194.5 612.4 L191.4 615.8 M605.6 512.4 L603.3 516.1 L602.8 521.0 L599.4 523.9 L594.1 525.4 L593.2 530.1 M310.7 421.7 L314.3 419.0 L318.6 417.1 L322.1 414.2 L323.5 408.8 L328.1 407.4 L331.8 404.8 M516.9 753.3 L514.1 749.8 L512.5 745.5 L510.7 741.3 L507.6 738.0 L504.1 735.1 L500.3 732.3 L498.5 728.2 M354.5 754.6 L355.8 750.3 L357.8 746.2 L358.2 741.6 L360.4 737.6 L362.4 733.5 L364.4 729.5 L365.3 725.0 M352.7 330.9 L357.0 333.5 L358.9 337.9 L359.5 343.3 L362.3 347.1 L366.6 349.7 M765.6 293.3 L762.3 296.1 L760.2 299.5 L760.9 304.4 L760.5 308.7 L756.4 311.1 M742.6 383.4 L746.5 380.9 L751.0 379.8 L755.9 379.7 L759.5 376.4 L763.9 374.9 L768.3 373.7 M872.5 281.4 L868.9 278.9 L866.5 275.3 L865.0 271.0 L863.2 266.9 L859.4 264.6 L856.1 262.0 L853.0 259.1 L849.8 256.3 M440.3 511.9 L437.4 508.6 L434.2 505.7 L431.4 502.4 L429.5 498.3 L427.1 494.6 L423.8 491.7 L420.8 488.5 L418.0 485.2 M604.3 547.5 L608.3 545.8 L612.7 545.1 L616.6 543.3 M345.3 549.1 L342.8 545.8 L340.3 542.4 L335.9 541.3 L332.0 539.6 L329.8 536.0 M338.5 723.1 L340.8 726.9 L344.2 730.1 L345.9 734.2 L345.2 739.5 L346.5 743.8 L350.3 746.9 L353.4 750.2 L354.5 754.6 M225.4 527.3 L227.0 523.0 L227.9 518.4 L225.6 513.3 L227.5 509.0 L229.6 504.6 M280.7 382.8 L276.6 384.5 L274.1 388.5 L271.0 391.7 L266.6 393.1 L262.4 394.6 L259.2 397.6 L255.7 400.1 M287.6 679.5 L291.9 679.6 L296.0 680.4 L299.4 683.7 L303.4 684.8 L307.8 684.7 L312.0 685.0 L315.7 687.2 M560.9 490.0 L563.7 493.3 L567.3 495.9 L570.4 498.9 L572.7 502.6 L575.4 506.0 M732.8 271.8 L728.8 273.5 L724.8 274.5 L720.3 271.3 L716.2 272.2 L712.4 275.8 L708.1 274.3 M278.7 595.3 L280.6 599.1 L283.8 602.4 L285.7 606.2 L285.4 611.1 L286.8 615.1 L289.5 618.6 M644.0 421.0 L641.0 424.9 L639.5 429.2 L639.7 434.0 L640.0 438.9 L637.6 443.0 M537.7 426.1 L533.3 425.5 L529.2 422.6 L524.4 424.1 L519.9 423.9 L515.6 422.3 M725.3 430.5 L729.8 433.0 L733.1 437.1 L737.8 439.2 M383.6 478.3 L383.5 474.0 L382.7 469.9 L380.4 466.2 L377.8 462.5 L377.9 458.2 L378.1 453.9 L377.6 449.7 L376.5 445.7 L374.9 441.7 M594.4 559.3 L594.2 564.6 L590.3 568.6 L588.8 573.5 M470.0 609.6 L473.8 612.0 L475.7 617.0 L480.2 618.4 L485.3 619.1 L488.2 622.7 L491.5 625.8 M245.7 745.3 L243.8 749.5 L241.3 753.4 L239.1 757.4 L237.3 761.8 L234.7 765.6 L232.1 769.4 M308.3 492.2 L311.6 489.2 L316.5 489.3 L321.0 488.7 L323.6 484.4 M418.0 485.2 L417.5 489.5 L419.3 494.1 L416.4 498.0 L412.0 501.5 L413.2 506.1 L413.5 510.5 M707.5 255.0 L703.5 255.4 L699.4 256.0 L695.3 255.7 L691.3 256.4 L687.7 259.5 L683.6 259.4 L679.7 260.5 L675.7 261.1 L671.6 261.3 M557.8 716.3 L555.4 712.8 L552.4 709.8 L549.5 706.6 L548.4 702.3 L546.1 698.8 M582.7 411.4 L586.5 408.5 L586.3 401.9 L591.1 399.8 L596.1 397.8 L598.3 393.4 M861.2 301.3 L860.7 305.5 L857.3 308.8 L855.4 312.5 L856.3 317.1 L856.5 321.6 L854.9 325.4 L852.5 329.0 M510.9 677.9 L515.9 678.9 L520.0 675.9 L524.2 673.5 L528.9 673.5 M462.5 763.8 L464.7 767.5 L466.4 771.3 L468.0 775.3 L467.8 779.9 L469.2 783.9 L471.3 787.6 M359.1 580.9 L363.7 581.9 L367.6 584.5 L371.9 586.3 L375.6 589.4 L379.2 592.4 L384.0 593.4 M742.6 383.4 L743.5 378.5 L747.8 375.0 L749.0 370.2 L750.6 365.6 M675.8 369.6 L679.6 371.6 L684.7 370.0 L687.1 375.8 L691.5 376.1 L695.7 376.8 M702.9 321.6 L706.1 318.6 L709.9 316.4 L714.1 315.1 L718.3 313.6 L722.2 311.7 L725.5 308.7 M305.8 401.3 L306.1 405.5 L307.6 409.5 L311.0 413.0 L310.6 417.4 L310.7 421.7 M200.4 728.3 L196.6 726.9 L192.6 725.7 L189.7 722.5 L186.6 719.7 L183.5 717.1 L179.2 716.4 L175.9 714.1 M480.5 669.2 L482.9 664.6 L485.4 660.0 L487.4 655.2 M673.4 393.8 L677.4 392.4 L679.8 389.0 L681.3 384.4 L685.4 383.1 L690.5 383.2 L692.8 379.6 L695.7 376.8 M488.3 386.1 L486.3 390.0 L486.2 394.4 L486.2 398.9 L483.6 402.7 L482.8 406.9 L482.0 411.2 M774.1 317.0 L778.2 314.4 L779.5 309.1 L783.4 306.5 L787.4 303.9 L790.6 300.5 M471.7 553.1 L467.7 552.6 L463.6 554.3 L459.6 556.1 L455.6 554.5 L451.5 552.8 L447.5 553.5 M726.2 401.2 L729.2 404.4 L732.6 407.2 L735.5 410.5 L740.0 412.1 L741.5 416.9 L744.4 420.2 L748.2 422.6 M622.7 567.4 L627.8 570.1 L629.6 575.2 L631.9 579.9 M232.1 769.4 L229.0 772.3 L226.3 775.7 L222.4 777.5 L218.1 778.7 L214.7 781.3 L212.1 784.7 L208.7 787.2 M349.3 697.1 L344.8 696.9 L340.5 695.8 L336.5 694.2 L332.4 692.4 L328.6 689.8 L324.5 688.4 L320.2 687.6 L315.7 687.2 M383.6 478.3 L380.1 481.6 L380.6 487.1 L378.6 491.2 L374.9 494.5 L372.7 498.5 M206.2 760.6 L210.8 761.4 L214.9 763.3 L219.1 765.0 L223.1 767.5 L227.2 769.6 L232.1 769.4 M374.7 614.0 L378.5 610.7 L380.9 606.9 L377.9 600.6 L381.4 597.2 L384.0 593.4 M623.5 475.1 L623.0 479.8 L621.3 484.4 L620.9 489.2 L621.4 494.1 L619.7 498.6 M220.6 704.2 L221.6 708.7 L221.3 713.5 L222.7 717.9 L223.4 722.4 L225.1 726.8 L225.5 731.4 M170.0 307.4 L172.1 303.3 L174.4 299.3 L176.2 295.0 L180.7 292.4 L182.1 287.9 M726.2 401.2 L728.4 397.8 L732.9 396.4 L737.0 394.7 L737.0 389.2 L738.6 385.3 L742.6 383.4 M213.4 385.4 L218.4 384.4 L222.6 387.1 L226.6 390.9 L231.9 388.4 L236.4 389.8 M515.6 422.3 L512.5 419.4 L509.9 416.0 L506.0 413.9 L504.6 409.3 L501.2 406.7 M569.3 285.6 L573.4 287.0 L577.8 287.0 L582.5 286.1 L586.5 287.7 L590.5 289.3 L594.4 291.6 L598.3 293.4 L602.4 294.7 M222.4 442.4 L221.0 438.1 L219.3 433.9 L216.7 430.1 L215.7 425.7 L214.7 421.2 L212.8 417.1 M817.3 276.2 L814.3 278.8 L810.9 281.1 L807.0 282.7 L805.5 287.0 L802.5 289.7 L800.2 293.2 L797.1 295.7 L793.5 297.6 L790.6 300.5 M211.3 282.9 L208.1 280.0 L205.1 276.6 L199.9 276.3 L197.9 271.8 L193.9 269.9 M229.9 791.3 L229.3 786.8 L228.1 782.2 L230.4 778.0 L233.4 773.9 L232.1 769.4 M496.7 642.4 L500.2 646.4 L502.4 651.2 L504.2 656.2 M179.8 840.2 L178.7 836.1 L175.7 833.3 L173.1 830.2 L170.3 827.2 L167.3 824.4 L165.7 820.6 L163.7 817.1 L162.6 813.1 M333.2 783.6 L329.7 785.7 L326.8 788.6 L324.4 792.0 L321.7 795.2 L316.9 795.5 L313.8 798.2 L311.0 801.2 M167.6 368.1 L168.7 363.6 L171.8 360.1 L175.0 356.6 L175.5 351.8 M241.4 666.2 L236.9 667.4 L232.8 669.9 L228.8 672.3 L224.2 673.5 L219.7 674.9 M541.4 493.1 L538.3 489.5 L535.6 485.6 L533.3 481.3 L529.6 478.2 L526.5 474.5 M648.8 479.8 L653.2 481.2 L656.7 484.7 L661.0 486.5 L665.5 488.0 L669.4 490.4 M725.3 430.5 L728.9 428.5 L733.6 429.9 L736.9 427.1 L740.2 424.3 L744.4 424.0 L748.2 422.6 M222.9 647.4 L226.1 650.3 L230.5 652.3 L233.1 655.8 L234.7 660.4 L237.9 663.4 L241.4 666.2 M514.5 450.7 L510.1 450.0 L505.7 449.1 L501.6 451.1 L497.6 454.2 L493.4 455.2 L489.0 454.1 L484.6 453.7 M373.7 523.0 L368.9 523.0 L364.6 521.2 L360.3 519.2 L355.7 518.6 M328.3 560.8 L323.2 561.0 L319.9 557.1 L316.1 554.2 L311.5 553.3 M180.0 428.7 L183.6 431.9 L183.5 437.1 L186.0 440.9 L187.7 445.2 L190.7 448.7 M475.1 725.5 L476.4 729.9 L478.7 733.7 L481.6 737.3 L483.6 741.3 L486.2 745.0 L487.0 749.6 L488.5 753.8 M403.0 567.8 L402.9 572.7 L407.3 576.4 L407.8 581.2 L406.5 586.5 L409.7 590.5 M170.0 307.4 L173.2 310.8 L174.4 315.6 L177.8 318.9 L181.4 322.0 L183.4 326.3 M707.5 255.0 L710.9 257.8 L715.1 259.3 L717.7 263.2 L721.6 265.1 L725.2 267.6 L729.3 269.2 L732.8 271.8 M225.4 527.3 L221.2 528.1 L217.0 528.4 L212.8 529.1 L208.8 530.6 L204.8 532.1 L200.9 534.0 L196.5 533.4 L192.4 534.4 M488.3 687.7 L492.1 689.3 L496.9 687.4 L500.2 690.9 L504.1 692.1 M352.7 330.9 L348.4 332.6 L343.8 331.8 L339.3 331.8 L334.8 331.4 L330.4 332.1 L326.0 333.1 L321.5 334.0 M725.3 430.5 L723.8 434.6 L722.5 438.8 L719.6 442.3 L718.4 446.5 M463.2 684.9 L466.7 681.8 L467.9 676.2 L473.9 675.8 L478.3 673.7 L480.5 669.2 M546.7 811.3 L549.8 814.1 L551.9 818.2 L556.3 819.2 L560.6 820.2 L563.4 823.4 M404.4 784.6 L402.0 781.0 L399.3 777.6 L397.7 773.6 L395.6 769.9 L394.2 765.8 L392.9 761.7 L390.4 758.1 M767.0 439.0 L764.8 435.2 L761.5 432.7 L756.2 432.4 L753.1 429.6 L752.4 424.1 L748.2 422.6 M293.3 554.1 L296.6 557.2 L300.5 559.8 L302.6 564.2 L306.5 566.7 L310.1 569.5 M425.7 422.8 L426.1 427.2 L427.3 431.6 L429.3 435.8 L430.2 440.2 L428.9 444.8 L429.2 449.2 L428.6 453.7 M602.1 575.0 L597.7 574.7 L593.0 576.6 L588.8 573.5 M756.0 274.9 L757.9 271.1 L762.3 269.9 L766.5 268.6 L768.8 265.2 L770.7 261.3 M253.0 428.6 L252.9 424.5 L251.4 420.2 L250.5 416.0 L252.3 412.1 L254.0 408.2 L257.1 404.3 L255.7 400.1 M423.9 683.6 L420.5 681.0 L417.4 678.1 L414.9 674.6 L412.1 671.4 L409.4 668.3 L406.0 665.7 M767.0 439.0 L766.5 434.6 L764.7 430.2 L765.3 425.7 L767.0 421.2 L765.5 416.8 M740.7 318.2 L744.5 320.8 L746.9 325.6 L751.2 327.4 L756.5 327.8 L760.1 330.6 M325.3 587.2 L321.4 584.4 L318.8 580.4 L316.9 575.9 L313.5 572.7 L310.1 569.5 M808.3 325.0 L807.8 329.1 L808.0 333.5 L805.7 337.0 L802.6 340.2 L801.7 344.2 M184.6 739.1 L180.3 739.5 L176.6 737.7 L173.2 734.8 L169.3 733.7 L165.1 733.8 M675.8 369.6 L674.3 365.7 L673.4 361.5 L669.4 358.7 L667.9 354.7 L667.8 350.2 L666.2 346.3 L664.0 342.7 L661.9 339.1 M287.6 679.5 L288.8 683.4 L290.4 687.1 L292.6 690.4 L294.9 693.7 L297.2 697.0 L299.7 700.3 L301.5 703.9 L302.5 707.8 L304.2 711.4 M310.1 569.5 L311.1 565.5 L312.3 561.5 L308.7 557.1 L311.5 553.3 M389.7 386.6 L387.1 390.6 L384.0 394.0 L378.4 394.6 L375.6 398.4 L372.4 401.8 M555.6 345.6 L556.4 341.6 L557.6 337.6 L558.3 333.6 L559.6 329.7 L559.9 325.5 L561.6 321.7 L563.1 317.9 L564.3 313.9 L565.1 309.9 L564.9 305.6 L565.9 301.7 L566.9 297.7 L567.8 293.7 L568.3 289.6 L569.3 285.6 M373.7 523.0 L374.7 518.9 L372.6 514.8 L370.8 510.8 L372.5 506.7 L373.4 502.5 L372.7 498.5 M765.6 293.3 L770.2 292.9 L773.9 295.7 L777.8 298.1 L781.7 300.0 L786.3 299.7 L790.6 300.5 M175.9 714.1 L173.4 717.8 L172.3 722.4 L169.5 726.0 L165.9 729.1 L165.1 733.8 M220.6 704.2 L224.8 706.0 L229.5 706.6 L233.4 709.6 L237.9 710.9 L242.9 710.3 L247.1 712.3 M330.2 814.6 L325.9 817.0 L322.5 820.4 L319.8 824.5 L316.5 828.0 L312.4 830.5 M213.2 570.1 L208.9 569.8 L205.6 573.6 L202.0 576.0 L197.3 574.7 L193.2 575.5 M362.8 556.0 L367.6 556.1 L372.7 557.5 L376.8 553.9 L381.3 552.3 L386.0 551.6 M603.0 487.7 L602.6 491.9 L602.6 496.1 L606.4 499.8 L606.6 504.0 L605.2 508.3 L605.6 512.4 M496.9 606.9 L501.1 607.5 L505.0 608.7 L507.8 612.6 L511.1 615.1 L515.6 614.9 L520.0 614.9 L523.2 617.9 M652.2 524.2 L647.1 523.1 L641.5 523.0 L637.3 519.1 M180.0 428.7 L179.5 424.3 L181.0 419.9 L180.2 415.5 L180.7 411.2 M616.6 543.3 L620.9 545.4 L625.9 544.6 L630.3 546.0 M190.7 448.7 L192.4 444.9 L190.7 440.3 L191.8 436.4 L195.0 433.1 L197.4 429.5 L197.1 425.2 M521.4 699.2 L516.7 698.2 L512.4 696.5 L508.3 694.0 L504.1 692.1 M203.4 556.8 L208.3 557.4 L212.5 555.3 L216.5 552.0 L221.0 551.2 L225.9 551.8 M561.8 588.0 L563.7 584.3 L566.1 580.9 L569.4 578.2 L571.1 574.4 M284.1 492.6 L281.1 495.4 L278.0 498.1 L274.4 500.0 L269.8 500.4 L267.2 503.9 M251.4 624.8 L254.3 628.0 L257.5 631.0 L258.7 635.9 L262.9 638.0 L267.0 640.1 L269.7 643.6 L272.1 647.3 M463.2 684.9 L467.4 685.6 L471.6 685.6 L476.0 684.6 L480.0 686.4 L484.1 687.9 L488.3 687.7 M725.3 430.5 L720.7 431.1 L716.0 431.6 L711.3 432.1 L706.6 432.0 L701.9 432.7 M272.1 647.3 L276.2 645.8 L280.8 645.9 L284.4 643.3 L287.7 640.0 L292.0 639.0 L296.1 637.6 L300.2 636.4 M270.0 762.4 L267.5 766.2 L266.6 770.4 L268.5 775.4 L266.5 779.3 L264.8 783.3 L263.4 787.4 M198.5 474.2 L199.1 470.0 L202.9 467.3 L204.3 463.5 L205.6 459.6 M241.4 666.2 L246.0 667.5 L250.8 667.3 L255.8 665.6 L260.3 667.8 L264.9 669.2 M327.2 648.4 L323.8 645.5 L319.5 644.7 L314.6 645.5 L311.1 643.1 L308.0 639.6 L304.8 636.4 L300.2 636.4 M198.5 474.2 L200.5 477.8 L201.4 481.8 L203.0 485.5 L206.1 488.7 L206.0 493.0 L206.1 497.2 L207.9 500.9 M550.1 666.0 L554.1 664.7 L558.5 664.7 L562.5 663.5 L566.1 660.8 L569.5 657.8 L573.6 657.0 L578.1 657.2 L582.4 657.0 L586.1 654.5 M596.2 595.0 L594.4 590.8 L595.2 585.7 L591.3 582.2 L590.2 577.8 L588.8 573.5 M383.2 635.3 L387.3 633.7 L390.2 630.3 L394.7 629.3 L399.1 628.2 L402.5 625.6 L406.1 623.2 L408.9 619.5 L412.3 617.0 M801.6 361.7 L805.3 359.4 L809.3 357.5 L811.3 353.4 L812.4 348.3 L817.5 347.6 L820.8 344.9 M475.1 725.5 L476.6 721.2 L477.1 716.8 L474.7 712.2 L474.8 707.8 L476.5 703.4 M638.1 504.3 L639.8 500.2 L642.3 496.4 L643.9 492.3 L644.7 487.7 L646.2 483.5 L648.8 479.8 M576.0 633.1 L573.2 636.4 L569.3 637.9 L564.2 637.3 L562.0 641.6 L558.5 643.7 M607.7 250.5 L611.9 251.0 L616.1 251.4 L620.3 252.1 L624.5 253.4 L628.7 253.4 L633.0 251.7 L637.3 250.6 L641.5 250.3 L645.7 251.5 L649.8 252.2 M670.9 512.6 L667.7 515.8 L661.5 514.1 L660.1 520.1 L657.1 523.7 L652.2 524.2 M225.9 551.8 L229.8 549.2 L232.0 544.8 L234.9 541.1 L240.6 540.3 L242.8 536.0 L245.8 532.4 M384.0 593.4 L383.4 588.8 L378.6 585.3 L381.7 579.7 L381.5 575.1 L378.2 571.2 M314.4 770.1 L318.4 767.5 L320.8 763.8 L322.0 759.0 L324.3 755.2 L327.6 752.1 L330.6 748.7 M341.2 482.1 L336.6 481.2 L332.6 484.6 L328.1 484.5 L323.6 484.4 M825.8 253.0 L829.8 254.0 L833.7 255.2 L837.8 254.8 L841.9 254.5 L845.9 255.0 L849.8 256.3 M815.5 302.6 L811.5 301.1 L807.3 301.1 L803.1 301.6 L798.8 302.9 L794.7 301.8 L790.6 300.5 M432.3 643.8 L435.4 647.0 L439.2 649.8 L441.0 654.1 L442.3 658.9 L445.1 662.4 L448.3 665.7 L452.5 668.0 M834.0 311.6 L835.5 307.9 L838.2 304.6 L840.2 301.0 L837.7 295.9 L838.7 292.0 L840.3 288.3 L843.4 285.1 L844.3 281.2 M193.5 399.0 L197.7 400.3 L202.0 400.0 L206.5 399.4 L210.7 400.1 L214.6 403.8 L219.0 403.4 L223.4 402.8 M262.4 556.9 L258.1 558.5 L254.2 561.1 L250.1 563.1 L245.5 564.1 M372.0 809.0 L371.7 813.0 L370.9 817.0 L370.2 821.0 L369.5 825.0 L368.7 828.9 L368.8 833.0 L368.3 837.0 L367.9 841.0 M504.6 708.8 L500.5 708.2 L496.5 707.4 L492.3 707.6 L488.4 706.3 L484.7 703.8 L480.5 704.0 L476.5 703.4 M347.6 499.0 L346.1 494.7 L342.1 491.4 L344.3 485.8 L341.2 482.1 M519.5 656.7 L514.4 654.7 L509.2 658.7 L504.2 656.2 M623.4 319.3 L627.0 321.7 L630.9 323.6 L634.2 326.6 L637.9 328.9 L641.7 331.0 L645.9 332.2 L649.6 334.6 L653.5 336.3 L658.3 336.5 L661.9 339.1 M603.0 487.7 L607.4 490.2 L611.8 492.5 L615.8 495.5 L619.7 498.6 M808.3 325.0 L805.1 322.0 L802.4 318.6 L799.0 315.8 L798.1 311.1 L796.4 307.0 L794.0 303.4 L790.6 300.5 M205.8 633.2 L202.9 629.8 L199.4 626.8 L198.0 622.1 L195.0 618.7 L191.4 615.8 M231.7 599.3 L235.9 596.5 L239.3 593.1 L242.3 589.3 L243.2 583.9 L246.7 580.5 M442.7 754.7 L446.1 757.7 L451.0 757.5 L456.0 757.0 L458.8 761.4 L462.5 763.8 M263.4 787.4 L259.3 788.7 L255.2 789.9 L250.8 788.7 L246.5 787.9 L242.2 787.4 L238.2 789.3 L234.1 790.6 L229.9 791.3 M487.6 797.4 L483.6 794.7 L480.1 791.4 L475.2 790.3 L471.3 787.6 M861.2 301.3 L856.6 300.9 L853.6 304.7 L850.2 307.6 L845.8 307.5 L841.1 307.0 L837.7 309.6 L834.0 311.6 M224.7 585.0 L224.6 579.5 L231.5 576.8 L230.4 570.9 M675.3 423.3 L672.5 420.4 L669.3 417.8 L667.5 413.7 L664.3 411.2 L661.1 408.5 L657.8 406.1 L654.9 403.2 L652.1 400.2 M191.8 366.4 L196.2 366.3 L200.0 364.9 L202.9 360.6 L206.5 358.5 L210.9 358.6 L215.0 357.6 M610.9 460.4 L615.2 461.4 L619.6 462.2 L623.9 463.6 L628.6 461.2 L633.0 461.3 L637.3 462.8 M743.4 350.5 L746.0 347.0 L748.2 343.2 L751.4 340.2 L755.4 338.0 L757.7 334.3 L760.1 330.6 M441.9 598.8 L438.4 601.4 L435.1 604.2 L431.5 606.7 L427.0 607.6 L422.8 609.1 L419.2 611.5 L416.1 614.8 L412.3 617.0 M423.9 683.6 L427.4 681.5 L431.0 679.6 L434.9 678.2 L438.8 677.0 L442.2 674.8 L445.2 671.8 L448.5 669.2 L452.5 668.0 M537.7 426.1 L541.0 423.4 L543.8 420.0 L547.4 417.6 L551.4 416.0 L555.1 413.8 L558.9 411.7 L562.1 408.9 M229.9 791.3 L231.6 795.0 L230.8 799.2 L229.3 803.6 L231.2 807.3 L234.3 810.8 L234.6 814.8 M304.2 711.4 L305.4 707.0 L308.8 703.7 L310.8 699.7 L312.7 695.6 L313.5 691.1 L315.7 687.2 M849.8 256.3 L848.0 260.3 L847.3 264.4 L847.8 268.9 L846.5 273.0 L846.2 277.2 L844.3 281.2 M175.3 554.4 L177.9 558.2 L183.4 559.6 L185.1 564.2 L185.7 569.8 L189.2 572.9 L193.2 575.5 M245.8 532.4 L245.1 536.9 L245.4 541.4 L244.7 546.0 L245.8 550.5 L246.7 555.0 L246.6 559.6 L245.5 564.1 M223.4 402.8 L227.6 404.7 L230.1 408.4 L233.1 411.5 L236.2 414.6 M276.1 571.4 L271.5 568.9 L270.7 562.7 L266.8 559.6 L262.4 556.9 M673.4 393.8 L678.3 393.6 L682.4 395.7 L684.9 401.4 L689.5 402.0 L694.4 401.9 L698.4 404.0 M231.7 599.3 L236.3 600.8 L240.7 603.0 L245.7 602.6 L250.5 603.2 L255.1 604.3 M470.0 609.6 L469.8 605.2 L469.3 600.9 L465.9 597.2 L465.5 592.9 L465.3 588.5 M160.8 425.7 L165.3 428.2 L170.5 426.9 L175.2 428.4 L180.0 428.7 M602.1 575.0 L599.9 571.2 L597.4 567.6 L597.4 562.7 L594.4 559.3 M364.9 385.8 L362.2 382.5 L359.6 379.1 L356.6 376.0 L354.5 372.2 L353.3 367.9 L350.6 364.5 L347.5 361.5 M223.4 402.8 L227.3 400.2 L229.3 395.8 L233.8 393.7 L236.4 389.8 M440.3 511.9 L438.7 515.7 L437.9 519.9 L435.0 523.0 L432.4 526.4 L430.0 529.7 L429.0 533.8 L427.6 537.7 M575.0 380.9 L578.3 378.2 L583.0 377.7 L587.0 375.9 L590.7 373.9 L593.8 370.9 L595.9 366.2 L600.2 365.1 M702.9 321.6 L701.8 317.2 L698.1 314.1 L694.9 310.8 L695.9 305.4 L692.9 301.9 M352.7 330.9 L351.4 335.2 L349.7 339.4 L349.1 343.8 L350.2 348.5 L351.0 353.1 L348.8 357.3 L347.5 361.5 M289.5 618.6 L289.9 623.2 L292.5 626.5 L298.0 628.1 L297.8 633.0 L300.2 636.4 M359.1 580.9 L363.5 580.2 L366.3 576.3 L369.0 572.1 L374.1 572.6 L378.2 571.2 M726.1 370.0 L724.6 374.5 L726.0 378.9 L727.6 383.4 L727.5 387.8 L726.2 392.3 L726.5 396.8 L726.2 401.2 M625.3 511.3 L628.5 515.1 L634.1 515.3 L637.3 519.1 M220.6 704.2 L216.4 703.1 L212.3 702.2 L208.3 704.5 L204.3 704.8 L200.2 705.3 M191.8 366.4 L187.8 367.3 L183.7 366.4 L179.6 366.4 L175.7 367.8 L171.6 367.4 L167.6 368.1 M436.6 780.3 L435.4 775.9 L433.6 771.8 L429.3 769.2 L426.1 766.0 L424.6 761.8 L423.1 757.5 M716.3 496.0 L712.1 495.3 L707.6 498.4 L703.4 497.1 L699.3 494.7 M699.5 455.5 L696.3 458.3 L692.2 460.2 L690.4 464.8 L686.4 466.7 L682.2 468.3 L678.8 470.9 L675.9 474.1 M364.9 385.8 L360.0 387.6 L359.0 394.1 L352.6 394.1 L349.9 398.6 M555.1 619.3 L555.3 623.5 L556.2 627.5 L557.5 631.4 L558.2 635.5 L558.3 639.6 L558.5 643.7 M278.7 595.3 L283.4 593.8 L288.2 592.4 L292.5 589.6 L297.5 588.7 M384.0 593.4 L379.6 594.8 L376.1 598.4 L372.5 601.6 L368.0 602.8 L362.9 602.6 L358.5 604.1 M439.4 405.4 L437.8 401.5 L434.7 398.5 L432.3 395.1 L429.1 392.2 L427.6 388.2 L425.7 384.4 L422.7 381.4 M203.4 556.8 L202.0 552.9 L200.5 549.0 L197.9 545.6 L195.2 542.3 L193.5 538.5 L192.4 534.4 M941.5 266.2 L945.3 264.4 L949.0 262.4 L950.4 256.9 L954.6 255.8 L959.7 256.0 L963.4 254.1 L966.0 250.4 M479.8 642.7 L477.2 647.0 L475.7 652.1 L472.2 655.7 L467.9 658.7 M470.5 391.0 L471.9 395.5 L476.0 398.6 L478.1 402.7 L479.5 407.3 L482.0 411.2 M207.9 500.9 L210.5 504.6 L212.8 508.5 L214.1 513.1 L216.7 516.8 L220.8 519.5 L223.4 523.2 L225.4 527.3 M675.9 474.1 L673.2 470.9 L671.1 467.2 L667.2 465.1 L664.0 462.3 L660.8 459.6 L659.1 455.5 L656.2 452.4 M312.4 830.5 L307.9 831.9 L303.0 831.8 L299.2 835.3 L294.7 836.7 L290.2 837.9 M418.0 485.2 L422.5 484.6 L426.0 481.6 L429.4 478.1 L434.4 478.7 L439.0 478.5 L442.9 476.1 L446.5 473.5 M272.1 647.3 L269.7 651.4 L268.1 655.7 L267.8 660.4 L266.8 665.0 L264.9 669.2 M607.7 250.5 L605.6 254.1 L602.1 256.2 L598.3 258.1 L594.5 259.8 L591.0 261.9 L588.5 265.0 L586.7 269.1 L584.4 272.4 L582.3 276.1 L579.3 278.7 L575.9 280.9 L572.4 283.1 L569.3 285.6 M193.5 399.0 L194.9 403.3 L194.4 407.8 L193.3 412.4 L194.7 416.6 L196.9 420.8 L197.1 425.2 M330.2 814.6 L334.4 813.7 L338.9 813.2 L342.6 810.8 L346.4 808.5 L350.4 806.7 M699.5 455.5 L695.4 455.5 L691.3 454.9 L687.9 451.4 L683.7 451.4 L679.4 452.5 L675.6 450.9 M488.3 386.1 L490.4 389.6 L493.6 392.3 L495.6 395.9 L497.6 399.4 L498.5 403.6 L501.2 406.7 M350.4 806.7 L351.7 802.4 L351.6 797.5 L354.5 793.8 L357.4 790.0 L359.4 786.0 L359.9 781.3 M182.4 815.0 L185.7 817.5 L188.5 820.4 L190.9 823.6 L193.1 827.2 L195.4 830.6 L198.9 832.9 L202.2 835.3 L205.1 838.0 M224.3 457.6 L228.6 457.6 L232.9 458.1 L237.0 459.3 L241.2 459.7 M198.5 474.2 L198.1 469.7 L196.1 465.7 L193.7 461.7 L192.7 457.4 L192.3 452.9 L190.7 448.7 M528.9 673.5 L531.7 669.6 L532.8 665.1 L534.2 660.6 L535.2 656.0 L537.4 651.9 M350.4 806.7 L347.4 803.8 L345.7 799.9 L345.0 795.3 L341.5 792.8 L337.3 790.8 L334.8 787.5 L333.2 783.6 M222.4 442.4 L227.2 444.4 L232.2 444.8 L237.3 443.5 M182.1 287.9 L178.5 285.1 L173.9 284.0 L169.8 281.9 L165.9 279.6 L162.9 275.7 L158.8 273.8 M622.7 567.4 L621.8 571.7 L619.9 575.7 L616.3 578.9 L615.5 583.3 L614.4 587.6 M347.6 499.0 L343.0 500.6 L338.2 499.9 L333.4 498.9 L328.7 500.4 M499.5 436.2 L496.1 433.3 L495.0 428.7 L495.0 423.4 L489.8 421.7 L485.4 419.5 L484.1 415.1 L482.0 411.2 M224.7 585.0 L222.5 580.8 L218.3 578.0 L216.9 573.2 L213.2 570.1 M780.5 405.1 L780.3 400.7 L777.0 397.4 L774.7 393.7 L774.4 389.2 M388.0 737.8 L387.6 742.0 L390.1 745.8 L390.3 749.9 L390.1 754.1 L390.4 758.1 M537.7 426.1 L542.0 427.3 L546.4 428.1 L550.8 428.9 L555.5 428.0 L560.0 428.1 L564.2 430.3 L568.6 430.5 M393.2 272.5 L389.0 271.0 L385.2 268.6 L381.5 265.9 L376.7 265.8 L372.3 264.6 L369.1 261.0 L364.8 259.7 M1012.0 354.3 L1008.6 351.2 L1007.8 346.7 L1007.3 342.0 L1004.7 338.4 L1001.4 335.2 L999.8 331.1 M249.8 497.0 L254.4 498.1 L258.7 499.9 L262.6 502.8 L267.2 503.9 M745.2 257.7 L742.3 261.4 L740.6 266.2 L734.4 267.0 L732.8 271.8 M338.5 723.1 L339.4 719.1 L341.4 715.6 L344.2 712.4 L345.1 708.4 L345.1 704.1 L347.4 700.7 L349.3 697.1 M292.6 517.7 L289.9 521.6 L288.6 526.3 L287.7 531.2 L284.9 535.1 L281.6 538.7 M383.4 675.5 L379.1 676.1 L374.9 678.3 L370.4 673.4 L366.2 675.7 L361.9 676.3 M182.4 815.0 L182.8 819.3 L182.4 823.5 L179.8 827.5 L178.8 831.6 L178.3 835.8 L179.8 840.2 M277.4 409.3 L276.0 404.6 L277.1 400.3 L281.1 396.3 L280.5 391.8 L279.2 387.1 L280.7 382.8 M503.4 566.5 L499.8 569.5 L494.1 567.1 L490.9 571.3 L487.1 573.9 L482.5 574.3 M571.1 574.4 L575.6 574.9 L580.0 574.8 L584.5 574.6 L588.8 573.5 M834.0 311.6 L836.7 314.9 L839.9 317.6 L844.7 318.8 L848.6 320.8 L850.1 325.4 L852.5 329.0 M205.1 838.0 L200.9 838.7 L196.8 840.1 L192.5 839.7 L188.2 838.6 L184.0 839.6 L179.8 840.2 M600.2 625.7 L598.9 621.8 L596.1 618.6 L594.1 615.1 L592.3 611.4 M404.4 784.6 L400.3 783.6 L396.6 781.7 L392.9 779.8 L389.0 778.4 L385.3 776.6 L381.2 775.6 M321.5 334.0 L322.6 329.9 L322.2 325.8 L320.5 321.5 L321.5 317.5 L323.6 313.5 L325.0 309.5 L325.1 305.4 L323.6 301.1 L324.3 297.0 M675.3 423.3 L679.1 424.7 L683.2 425.1 L686.5 427.9 L689.8 430.8 L693.9 431.3 L698.0 431.5 L701.9 432.7 M540.7 789.4 L536.2 789.6 L531.8 787.8 L527.3 787.4 L522.8 789.1 L518.3 788.5 M743.4 350.5 L741.1 354.3 L737.3 356.7 L733.3 358.9 L731.4 363.0 L728.9 366.6 L726.1 370.0 M546.3 550.2 L551.0 552.2 L555.1 554.8 L558.8 558.2 L562.7 561.3 M610.9 460.4 L606.5 461.4 L602.9 464.0 L600.3 468.3 L596.6 470.6 L591.8 470.9 L587.7 472.4 M170.0 307.4 L167.7 311.1 L168.9 316.0 L167.4 320.0 L163.6 323.1 L162.8 327.3 M423.8 827.0 L420.2 824.8 L418.1 821.2 L416.9 816.8 L415.0 813.1 L409.9 812.2 L407.4 809.0 M205.8 633.2 L202.3 635.7 L197.4 636.6 L195.0 640.3 L193.9 645.5 L191.6 649.4 L186.8 650.4 L183.5 653.1 M465.3 588.5 L467.9 584.6 L471.1 581.5 L474.3 578.3 L478.6 576.6 L482.5 574.3 M688.1 509.4 L684.4 506.8 L682.8 502.1 L679.8 498.9 L675.9 496.5 L671.4 494.7 L669.4 490.4 M372.0 809.0 L376.3 811.0 L380.0 813.7 L381.7 819.2 L385.2 822.3 L390.6 822.9 L394.3 825.7 M479.8 642.7 L482.2 639.3 L483.7 635.3 L486.4 632.2 L489.0 629.1 L491.5 625.8 M383.4 675.5 L387.9 676.4 L391.6 678.8 L393.2 684.3 L396.9 686.6 L402.2 686.3 L405.5 689.4 M406.0 665.7 L410.8 664.9 L415.6 663.1 L420.5 665.2 L425.3 664.7 M204.5 688.5 L204.5 684.5 L205.5 680.3 L203.6 676.4 L202.2 672.4 L202.0 668.4 L202.5 664.2 L201.7 660.2 M670.9 512.6 L671.6 508.1 L671.9 503.6 L667.6 499.4 L668.9 494.9 L669.4 490.4 M708.1 511.2 L704.1 510.7 L700.3 507.3 L696.1 509.7 L691.9 511.5 L688.1 509.4 M349.9 398.6 L346.8 395.7 L342.9 393.9 L338.5 392.8 L335.5 389.8 L332.8 386.3 M232.1 769.4 L230.2 764.8 L228.0 760.4 L224.5 756.6 L223.2 751.8 M737.2 454.6 L741.6 455.0 L745.7 457.1 L749.7 459.1 L754.2 459.2 L758.6 460.0 M463.2 684.9 L460.3 682.0 L460.4 677.2 L459.0 673.3 L456.0 670.5 L452.5 668.0 M465.9 518.2 L469.1 520.7 L473.0 522.3 L475.4 525.9 L478.2 528.8 L480.5 532.5 L483.9 534.7 L488.4 535.6 L491.3 538.5 M359.1 580.9 L360.6 585.6 L357.3 590.1 L356.9 594.7 L358.0 599.4 L358.5 604.1 M268.5 522.8 L264.6 524.0 L261.1 526.3 L257.4 528.2 L253.6 529.8 L249.4 530.3 L245.8 532.4 M367.9 841.0 L363.2 841.4 L358.4 841.9 L354.3 838.4 L350.2 835.4 L345.5 835.8 L340.7 836.1 M699.5 455.5 L703.4 457.2 L706.9 459.9 L710.6 462.1 L715.2 461.7 L719.3 462.7 M619.7 498.6 L621.9 502.7 L624.6 506.6 L625.3 511.3 M270.1 842.8 L266.3 839.8 L262.1 837.8 L257.5 836.8 L252.7 836.4 L248.1 835.5 L244.0 833.2 M582.5 599.2 L585.8 603.2 L587.8 608.3 L592.3 611.4 M205.8 604.7 L209.9 602.8 L214.5 603.3 L219.2 603.9 L223.4 602.7 L227.3 599.8 L231.7 599.3 M1030.3 331.1 L1025.9 331.4 L1021.6 330.0 L1017.2 329.6 L1012.9 329.4 L1008.5 331.5 L1004.2 332.5 L999.8 331.1 M630.3 546.0 L626.4 549.3 L622.7 552.7 L618.7 555.9 M586.2 491.9 L584.8 486.9 L586.5 482.1 L587.6 477.3 L587.7 472.4 M737.2 454.6 L740.6 452.0 L743.3 448.6 L747.2 446.7 L751.4 445.5 M246.7 580.5 L251.0 581.3 L254.9 583.1 L258.0 586.5 L262.2 587.6 M374.7 614.0 L370.7 611.6 L366.4 609.3 L363.3 605.4 L358.5 604.1 M388.0 737.8 L386.9 733.8 L386.0 729.7 L385.5 725.5 L385.8 721.2 L384.7 717.1 L383.0 713.2 L382.4 709.1 M470.5 391.0 L475.2 390.8 L479.4 388.6 L483.8 387.1 L488.3 386.1 M438.5 737.9 L435.7 741.0 L431.8 743.2 L431.2 748.0 L430.1 752.5 L425.8 754.3 L423.1 757.5 M375.9 312.8 L371.8 314.4 L369.7 318.5 L367.0 321.8 L362.4 322.9 L358.5 324.6 L355.7 327.9 L352.7 330.9 M164.9 464.5 L167.3 468.3 L167.4 473.0 L171.1 476.2 L171.9 480.7 L173.7 484.7 M390.4 758.1 L394.5 759.2 L398.6 756.8 L402.6 755.0 L406.7 756.2 L410.9 758.8 L415.0 759.8 L419.0 758.1 L423.1 757.5 M287.6 679.5 L283.8 681.0 L279.8 682.2 L276.4 684.4 L273.0 686.8 L269.7 689.4 L265.5 690.1 L262.2 692.6 M229.9 791.3 L228.4 795.6 L225.9 799.4 L222.7 802.7 L219.5 806.1 L217.2 810.0 L215.3 814.1 L213.7 818.4 M482.0 411.2 L486.8 410.1 L492.0 410.5 L496.3 407.6 L501.2 406.7 M783.0 365.2 L787.8 365.1 L792.7 365.7 L797.1 363.2 L801.6 361.7 M333.2 783.6 L337.6 782.2 L342.2 783.2 L346.6 783.2 L351.3 784.8 L355.6 783.5 L359.9 781.3 M405.8 391.2 L403.0 394.5 L400.6 398.1 L398.3 401.7 L395.4 404.9 M906.2 311.2 L907.6 306.6 L908.7 301.9 L912.3 298.8 L916.3 295.8 L918.4 291.7 L920.6 287.7 M321.9 618.8 L324.1 614.9 L327.7 612.4 L331.0 609.6 L334.2 606.6 L336.6 602.9 M427.6 537.7 L423.1 536.7 L418.4 536.6 L413.8 535.8 L409.5 533.6 L405.0 532.6 L400.4 531.8 M267.6 713.1 L271.7 713.1 L275.7 713.3 L279.7 711.3 L283.8 711.3 L287.9 710.8 L291.9 710.9 L296.1 712.7 L300.1 711.6 L304.2 711.4 M544.5 605.6 L540.8 607.4 L536.6 608.3 L533.7 611.6 L531.0 615.0 L527.2 616.6 L523.2 617.9 M362.8 556.0 L358.8 558.6 L355.3 561.8 L351.8 565.0 L347.8 567.6 L344.0 570.4 M198.5 474.2 L194.0 474.2 L190.1 471.9 L186.4 469.0 L182.7 466.0 L177.2 469.2 L172.7 468.9 L169.0 466.1 L164.9 464.5 M162.4 632.0 L164.9 635.5 L168.3 638.1 L172.5 640.0 L174.6 643.9 L177.4 647.1 L179.9 650.6 L183.5 653.1 M544.5 605.6 L548.9 607.8 L548.4 613.6 L552.4 615.9 L555.1 619.3 M542.9 633.4 L542.6 638.3 L538.4 642.1 L537.4 646.8 L537.4 651.9 M438.5 737.9 L440.9 734.0 L439.2 729.1 L438.8 724.6 L442.0 720.9 L443.5 716.8 M330.2 814.6 L325.9 812.5 L322.1 809.7 L318.7 806.5 L314.8 803.9 L311.0 801.2 M340.7 836.1 L336.5 836.2 L332.4 835.7 L329.0 831.7 L325.1 830.2 L320.5 832.1 L316.3 832.3 L312.4 830.5 M742.0 290.6 L740.4 295.2 L739.0 299.7 L738.4 304.3 L739.0 308.9 L741.5 313.6 L740.7 318.2 M572.6 609.6 L576.6 606.8 L578.9 602.4 L582.5 599.2 M475.1 725.5 L472.6 721.6 L468.7 718.7 L464.6 716.0 L462.7 711.6 L460.4 707.6 L458.3 703.3 M521.4 699.2 L522.8 694.9 L522.8 690.3 L524.4 686.1 L527.5 682.4 L527.9 677.9 L528.9 673.5 M391.8 510.4 L388.4 507.4 L385.0 504.2 L381.0 502.1 L376.4 501.1 L372.7 498.5 M599.7 425.7 L598.9 430.6 L599.5 435.8 L593.6 439.4 L594.9 444.8 M187.5 670.9 L186.1 666.5 L186.7 661.7 L184.5 657.5 L183.5 653.1 M498.5 728.2 L496.8 732.4 L496.3 737.1 L494.0 741.2 L489.7 744.4 L490.1 749.5 L488.5 753.8 M774.1 317.0 L770.6 320.3 L768.1 324.8 L762.9 326.5 L760.1 330.6 M920.6 287.7 L920.3 283.2 L921.4 278.7 L921.9 274.1 L920.4 269.7 L918.4 265.3 L919.4 260.8 M625.4 599.7 L622.1 597.2 L621.6 592.1 L618.2 589.7 L614.4 587.6 M284.1 492.6 L284.8 497.0 L286.6 501.1 L289.1 504.9 L289.6 509.4 L290.3 513.8 L292.6 517.7 M716.3 496.0 L718.9 492.9 L720.9 489.2 L723.4 486.0 L726.1 483.0 L730.3 481.2 L732.6 477.8 L735.1 474.6 M567.5 546.8 L563.4 548.1 L559.0 547.9 L554.5 547.2 L550.5 549.5 L546.3 550.2 M750.6 365.6 L754.4 369.0 L758.5 371.8 L763.8 372.0 L768.3 373.7 M600.2 625.7 L600.9 621.3 L604.1 618.5 L607.8 615.8 L608.5 611.5 M781.5 279.4 L779.5 275.7 L778.8 271.2 L776.5 267.6 L773.9 264.3 L770.7 261.3 M325.3 587.2 L328.6 584.7 L330.8 580.9 L333.7 577.8 L338.2 576.6 L341.6 574.0 L344.0 570.4 M675.9 474.1 L679.0 477.8 L683.4 478.0 L688.4 476.0 L691.6 479.5 M675.3 423.3 L673.8 427.9 L672.5 432.5 L674.1 437.1 L674.4 441.7 L675.9 446.3 L675.6 450.9 M335.5 516.2 L339.3 513.7 L341.4 510.1 L341.1 504.7 L344.1 501.6 L347.6 499.0 M726.1 370.0 L727.2 364.9 L723.3 360.4 L724.5 355.3 L723.5 350.4 M774.1 317.0 L769.9 314.8 L764.9 315.1 L761.1 311.7 L756.4 311.1 M571.1 574.4 L572.4 570.2 L576.7 568.3 L578.1 564.2 L580.7 561.0 M512.1 631.4 L515.2 634.6 L518.9 636.8 L524.3 635.8 L527.3 639.3 M383.4 675.5 L382.7 679.6 L382.0 683.8 L380.8 688.0 L381.5 692.2 L382.5 696.5 L382.7 700.7 L383.3 704.9 L382.4 709.1 M616.6 543.3 L617.3 547.5 L618.8 551.5 L618.7 555.9 M750.9 400.5 L755.2 400.8 L759.3 401.9 L763.7 401.8 L768.0 402.0 L772.3 402.6 L776.2 405.0 L780.5 405.1 M249.8 497.0 L246.2 499.6 L241.4 499.1 L237.0 499.6 L233.8 503.5 L229.6 504.6 M190.7 448.7 L196.3 449.2 L200.3 445.2 L205.2 443.5 M482.0 411.2 L477.7 409.5 L473.6 406.8 L468.9 406.7 L464.2 406.6 L459.7 405.8 M404.4 784.6 L406.3 780.9 L409.4 778.1 L412.3 775.1 L414.2 771.4 L415.0 766.9 L417.2 763.4 L420.4 760.7 L423.1 757.5 M685.7 343.7 L686.6 348.0 L687.2 352.3 L689.6 356.1 L693.8 359.4 L692.9 364.1 L691.8 369.0 L693.8 372.9 L695.7 376.8 M158.4 686.2 L162.8 685.7 L167.0 686.7 L171.1 688.7 L175.4 687.7 L179.7 687.9 M607.7 250.5 L607.5 254.6 L607.0 258.6 L608.3 262.8 L607.6 266.8 L606.7 270.8 L606.4 274.8 L603.5 278.5 L603.1 282.6 L602.6 286.6 L602.2 290.6 L602.4 294.7 M541.4 493.1 L542.6 489.1 L541.5 484.6 L542.4 480.5 L545.8 476.9 L547.6 473.0 L548.0 468.9 L546.8 464.3 L548.2 460.4 M357.3 473.1 L352.7 474.4 L349.5 478.1 L346.2 481.6 L341.2 482.1 M293.3 554.1 L295.4 549.7 L298.3 546.0 L301.9 542.9 L307.4 541.5 L309.2 536.8 M582.0 541.4 L585.8 537.7 L588.6 533.0 L593.2 530.1 M644.0 421.0 L641.5 417.3 L638.1 414.6 L633.5 413.3 L629.9 411.0 L627.5 407.1 M333.2 783.6 L329.9 780.2 L325.2 778.9 L321.5 776.0 L318.1 772.8 L314.4 770.1 M767.0 439.0 L770.6 436.4 L774.1 433.6 L776.6 429.7 L780.8 427.8 L784.7 425.6 L788.1 422.7 M544.5 605.6 L548.2 603.4 L551.2 600.6 L552.9 596.5 L555.6 593.4 L558.4 590.3 L561.8 588.0 M177.6 782.0 L177.4 777.8 L175.3 774.1 L174.1 770.1 L173.7 766.0 L172.9 761.9 M334.1 673.7 L337.5 671.0 L341.7 669.2 L343.3 664.9 L344.8 660.5 L346.6 656.5 L351.0 654.8 M675.6 450.9 L678.6 448.3 L682.1 446.3 L687.4 446.8 L690.0 443.6 L691.9 439.3 L694.2 435.7 L698.4 434.6 L701.9 432.7 M498.5 728.2 L496.5 724.4 L492.4 722.5 L488.1 720.8 L486.0 717.1 L485.9 711.7 L483.8 707.9 L478.9 706.8 L476.5 703.4 M750.9 400.5 L753.7 403.9 L757.8 406.1 L760.1 409.9 L762.0 414.1 L765.5 416.8 M204.5 688.5 L202.6 684.7 L200.1 681.5 L195.4 680.3 L191.6 678.3 L190.9 673.3 L187.5 670.9 M349.9 398.6 L348.1 403.0 L352.6 407.5 L348.9 411.9 L349.4 416.3 M427.6 537.7 L431.0 540.3 L434.7 542.4 L438.2 544.8 L441.5 547.4 L444.7 550.3 L447.5 553.5 M432.3 643.8 L436.5 644.0 L440.8 642.7 L445.0 642.8 L449.1 645.0 L453.3 645.1 L457.6 644.6 M537.5 397.0 L534.6 400.1 L532.7 403.9 L530.4 407.4 L527.3 410.3 L523.5 412.5 L520.4 415.4 L518.4 419.1 L515.6 422.3 M264.9 669.2 L264.0 673.8 L262.8 678.4 L263.4 683.2 L263.0 687.9 L262.2 692.6 M270.0 762.4 L271.1 757.6 L268.1 753.3 L265.8 748.9 L267.9 743.9 L269.0 739.1 L266.7 734.7 M751.4 445.5 L751.5 440.8 L748.6 436.5 L747.3 432.1 L748.3 427.3 L748.2 422.6 M742.0 290.6 L744.7 287.4 L745.9 282.8 L749.1 280.0 L752.9 277.7 L756.0 274.9 M292.6 517.7 L296.6 516.0 L301.4 516.4 L304.8 513.2 L308.5 510.8 L312.7 509.7 M403.0 567.8 L405.4 564.1 L407.6 560.3 L411.0 557.6 L414.3 554.7 L416.9 551.3 L419.7 548.0 L421.6 543.9 L424.4 540.7 L427.6 537.7 M423.8 827.0 L419.6 826.2 L415.3 828.4 L411.0 829.5 L407.0 825.5 L402.8 824.8 L398.5 826.0 L394.3 825.7 M293.3 554.1 L289.6 550.9 L287.0 546.7 L284.2 542.8 L281.6 538.7 M266.7 734.7 L264.1 731.4 L261.8 727.7 L258.8 724.6 L255.0 722.4 L251.7 719.6 L249.8 715.6 L247.1 712.3 M708.1 511.2 L706.1 506.9 L705.4 502.0 L699.6 499.8 L699.3 494.7 M305.8 401.3 L305.3 397.2 L305.6 392.9 L305.5 388.7 L305.3 384.5 L303.0 380.7 L301.8 376.7 L300.5 372.7 L299.2 368.7 L299.5 364.4 M394.3 825.7 L395.4 821.2 L398.0 817.8 L401.0 814.8 L405.5 812.8 L407.4 809.0 M479.8 642.7 L478.5 638.2 L476.4 634.2 L471.6 632.4 L469.0 628.8 M582.0 541.4 L582.3 546.4 L583.3 551.4 L580.4 556.1 L580.7 561.0 M488.3 511.8 L489.0 516.3 L487.8 520.9 L487.2 525.5 L489.5 529.7 L492.1 533.9 L491.3 538.5 M333.2 783.6 L336.0 780.1 L338.2 776.1 L339.9 771.7 L342.6 768.2 L347.6 766.2 L350.1 762.5 L352.7 758.9 L354.5 754.6 M336.6 602.9 L341.0 602.6 L345.3 604.4 L349.7 604.1 L354.1 604.0 L358.5 604.1 M436.6 780.3 L435.8 784.6 L433.2 788.4 L431.1 792.3 L431.1 796.7 L430.4 801.1 M231.7 599.3 L229.9 603.6 L228.1 608.0 L228.9 612.9 L230.6 617.8 L228.7 622.2 L226.8 626.6 M467.9 658.7 L472.9 658.8 L478.0 658.8 L482.4 655.6 L487.4 655.2 M519.5 656.7 L524.2 656.5 L528.2 653.2 L532.4 651.2 L537.4 651.9 M544.5 765.0 L541.0 762.3 L536.4 762.2 L532.4 760.6 L528.3 759.4 L524.4 757.6 L520.9 754.9 L516.9 753.3 M613.3 525.0 L615.5 529.3 L613.5 534.4 L614.0 539.0 L616.6 543.3 M575.8 452.6 L578.0 456.7 L578.8 461.6 L584.9 463.3 L585.6 468.3 L587.7 472.4 M350.4 806.7 L350.6 811.5 L349.8 815.8 L346.6 819.4 L343.1 822.9 L341.3 827.0 L341.2 831.6 L340.7 836.1 M1006.9 305.8 L1006.0 310.0 L1002.7 313.7 L1000.3 317.6 L1003.9 323.1 L1002.6 327.3 L999.8 331.1 M349.3 697.1 L351.4 693.7 L354.1 690.5 L356.5 687.3 L357.4 683.1 L360.2 680.0 L361.9 676.3 M345.3 549.1 L348.8 546.9 L352.8 545.2 L354.6 541.1 L356.4 536.9 L360.9 535.8 M305.8 401.3 L303.1 397.5 L298.8 395.9 L294.4 394.3 L290.3 392.3 L288.1 387.9 L284.5 385.3 L280.7 382.8 M450.0 426.7 L447.6 430.3 L445.2 433.9 L443.0 437.6 L439.9 440.7 L437.7 444.4 L433.4 446.5 L430.4 449.7 L428.6 453.7 M567.5 546.8 L565.0 543.5 L563.5 539.7 L561.9 535.9 L559.9 532.3 L557.7 528.9 L555.6 525.3 M514.5 450.7 L518.8 451.6 L523.4 451.6 L527.6 452.6 L531.3 455.8 L535.0 458.7 L539.4 459.2 L543.8 459.6 L548.2 460.4 M495.7 666.7 L491.8 663.7 L491.1 658.4 L487.4 655.2 M633.6 557.6 L630.1 554.4 L632.7 549.5 L630.3 546.0 M418.5 735.1 L422.5 736.2 L426.3 737.6 L430.5 736.9 L434.6 736.9 L438.5 737.9 M808.3 325.0 L803.8 326.6 L799.3 328.5 L794.1 327.9 L789.6 329.7 M299.5 364.4 L303.2 366.8 L306.3 370.1 L309.9 372.7 L314.4 374.0 L318.2 376.2 L322.8 377.3 L325.7 381.1 L329.1 383.9 L332.8 386.3 M479.8 642.7 L484.0 642.2 L488.3 643.6 L492.5 643.2 L496.7 642.4 M292.6 517.7 L288.3 517.3 L284.3 518.0 L280.5 519.8 L276.8 522.2 L272.7 522.7 L268.5 522.8 M548.2 460.4 L550.6 463.7 L550.1 468.3 L550.7 472.4 L554.2 475.3 L557.8 478.2 L559.4 481.9 L559.9 486.1 L560.9 490.0 M225.9 551.8 L223.9 555.8 L220.8 559.1 L218.7 563.1 L215.5 566.2 L213.2 570.1 M465.5 820.1 L463.0 816.6 L462.0 812.5 L461.4 808.2 L458.3 805.1 L456.6 801.2 M499.5 436.2 L498.9 431.9 L497.8 427.6 L498.7 423.5 L501.3 419.4 L502.1 415.2 L501.2 410.9 L501.2 406.7 M722.8 327.1 L722.9 331.8 L721.4 336.5 L723.1 341.1 L723.9 345.7 L723.5 350.4 M412.4 408.0 L415.4 412.0 L418.7 415.7 L422.1 419.3 L425.7 422.8 M534.4 522.0 L530.1 521.4 L526.0 519.7 L521.6 521.8 L517.4 522.1 L513.2 520.9 M685.7 343.7 L681.7 343.3 L677.8 341.9 L674.0 340.2 L669.9 340.3 L665.6 341.0 L661.9 339.1 M648.8 479.8 L645.5 477.0 L644.5 472.8 L643.1 468.8 L639.8 466.1 L637.3 462.8 M732.8 271.8 L737.4 272.4 L742.3 270.9 L747.0 271.1 L751.3 275.0 L756.0 274.9 M388.0 737.8 L383.2 737.4 L379.8 734.7 L377.0 730.8 L373.8 727.6 L369.8 725.9 L365.3 725.0 M251.4 624.8 L254.4 621.1 L252.9 616.6 L251.3 612.1 L252.5 608.1 L255.1 604.3 M402.6 434.6 L404.4 438.8 L404.0 442.8 L402.8 446.9 L399.6 450.8 L400.4 454.9 L401.8 459.1 M520.0 596.9 L522.7 593.7 L525.7 590.7 L529.5 588.6 L534.0 587.3 L538.1 585.5 L540.0 581.4 L542.2 577.6 L545.1 574.5 M381.2 775.6 L383.6 779.1 L385.2 782.8 L387.2 786.4 L388.9 790.2 L389.0 794.5 L390.5 798.4 M491.5 625.8 L487.3 628.0 L482.3 625.5 L477.8 625.6 L473.6 628.5 L469.0 628.8 M644.0 421.0 L644.1 416.3 L645.9 412.1 L650.5 409.2 L652.0 404.9 L652.1 400.2 M542.9 633.4 L543.0 628.7 L541.4 624.0 L544.3 619.5 L546.2 615.0 L543.8 610.2 L544.5 605.6 M373.7 523.0 L369.9 525.6 L368.4 530.5 L363.1 531.6 L360.9 535.8 M1049.5 307.7 L1045.9 310.3 L1043.8 314.2 L1042.8 319.0 L1039.2 321.6 L1034.7 323.6 L1032.4 327.3 L1030.3 331.1 M765.5 416.8 L770.4 416.6 L775.0 417.4 L778.8 421.4 L783.2 423.2 L788.1 422.7 M432.3 643.8 L427.6 643.4 L422.9 645.4 L418.3 646.0 L413.5 643.6 L408.9 644.2 M350.4 806.7 L352.1 810.6 L353.9 814.6 L354.8 818.9 L357.0 822.6 L359.4 826.2 L361.9 829.7 L364.3 833.3 L365.8 837.3 L367.9 841.0 M389.7 386.6 L389.3 391.8 L393.6 395.4 L395.5 399.9 L395.4 404.9 M193.5 399.0 L197.6 401.1 L199.8 405.2 L201.7 409.6 L204.8 412.8 L209.6 414.1 L212.8 417.1 M604.3 547.5 L608.3 549.0 L610.8 553.0 L615.8 552.6 L618.7 555.9 M349.4 416.3 L353.2 413.8 L356.6 410.7 L360.3 408.1 L365.4 407.6 L368.8 404.5 L372.4 401.8 M709.1 362.3 L706.0 358.5 L707.7 353.6 L708.1 349.0 L705.4 345.1 L704.7 340.7 M592.7 332.6 L594.1 328.5 L595.6 324.4 L596.4 320.1 L598.3 316.1 L598.8 311.8 L598.7 307.3 L599.1 302.9 L600.5 298.7 L602.4 294.7 M468.7 480.9 L469.0 485.1 L467.4 489.1 L466.2 493.2 L464.3 497.2 L464.8 501.4 L464.5 505.6 L466.5 509.9 L465.8 514.0 L465.9 518.2 M514.8 389.2 L514.8 393.4 L515.5 397.5 L516.0 401.6 L514.9 405.8 L514.9 409.9 L515.0 414.1 L514.7 418.2 L515.6 422.3 M504.2 656.2 L500.0 656.4 L495.6 658.7 L491.5 657.3 L487.4 655.2 M596.2 595.0 L591.9 597.2 L587.4 598.9 L582.5 599.2 M742.0 290.6 L737.7 291.7 L733.5 293.5 L729.2 294.3 L724.7 293.9 L720.1 291.8 L715.6 291.6 L711.5 294.2 M223.4 402.8 L219.9 405.7 L220.2 411.5 L215.0 413.2 L212.8 417.1 M342.3 630.2 L346.5 630.9 L350.1 633.3 L353.5 636.2 L357.4 637.6 L362.0 637.4 M433.4 576.1 L435.2 579.7 L437.1 583.3 L437.6 587.5 L438.4 591.5 L440.5 595.0 L441.9 598.8 M488.3 511.8 L489.8 507.3 L489.5 502.5 L488.9 497.7 L490.1 493.1 L490.8 488.4 M622.7 567.4 L627.7 565.7 L628.4 559.1 L633.6 557.6 M470.5 391.0 L468.3 395.1 L464.6 398.0 L461.8 401.7 L459.7 405.8 M408.9 644.2 L410.8 648.3 L412.6 652.5 L417.2 654.4 L420.9 657.0 L422.8 661.1 L425.3 664.7 M200.4 728.3 L200.7 732.4 L201.1 736.5 L202.6 740.4 L204.9 744.1 L205.4 748.2 L204.4 752.6 L206.3 756.4 L206.2 760.6 M234.6 814.8 L230.4 815.3 L226.2 815.9 L221.9 816.1 L217.8 817.5 L213.7 818.4 M580.7 561.0 L583.4 565.2 L589.1 567.4 L588.8 573.5 M649.8 252.2 L653.8 254.8 L658.2 256.7 L663.5 256.2 L667.2 259.5 L671.6 261.3 M439.4 405.4 L441.5 409.7 L444.7 413.4 L446.0 418.1 L447.0 422.9 L450.0 426.7 M517.7 813.5 L513.9 815.3 L510.9 818.4 L507.6 821.0 L503.4 821.8 L499.0 822.5 L495.6 824.9 L492.3 827.5 M428.6 453.7 L432.9 454.6 L437.4 454.1 L441.9 453.0 L446.4 452.6 L450.6 454.5 L454.8 457.0 L459.2 457.6 L463.7 456.7 M899.9 272.6 L903.5 274.9 L906.3 278.3 L909.8 280.7 L914.7 281.2 L917.4 284.8 L920.6 287.7 M735.1 474.6 L736.2 470.7 L736.8 466.7 L734.6 462.4 L734.5 458.3 L737.2 454.6 M287.6 679.5 L283.4 678.6 L279.1 678.0 L276.1 674.6 L273.0 671.4 L269.0 670.2 L264.9 669.2 M268.5 522.8 L268.5 518.1 L269.2 513.3 L267.2 508.6 L267.2 503.9 M312.7 509.7 L315.5 513.2 L318.9 516.3 L321.9 519.8 L321.4 525.4 L322.2 530.2 L327.0 532.4 L329.8 536.0 M575.0 380.9 L575.9 376.8 L575.5 372.5 L575.7 368.3 L578.1 364.3 L577.4 360.0 L577.4 355.7 M598.3 393.4 L597.8 397.5 L599.8 401.5 L598.1 405.6 L596.4 409.7 L596.9 413.7 L600.0 417.6 L600.3 421.6 L599.7 425.7 M872.5 281.4 L868.4 281.1 L864.4 281.8 L860.4 283.7 L856.4 280.9 L852.4 278.6 L848.4 281.4 L844.3 281.2 M673.4 393.8 L669.6 396.4 L665.1 397.2 L660.8 398.0 L656.3 398.7 L652.1 400.2 M513.6 494.5 L518.3 494.3 L522.8 491.1 L527.6 494.2 L532.3 495.9 L536.8 492.8 L541.4 493.1 M449.0 626.2 L447.3 630.1 L444.6 633.1 L439.1 633.5 L436.3 636.4 L435.3 641.1 L432.3 643.8 M403.0 567.8 L407.4 569.0 L412.2 568.5 L416.3 570.4 L420.0 574.1 L424.3 575.4 L429.1 574.8 L433.4 576.1 M633.0 532.0 L628.6 534.3 L624.0 536.3 L620.8 540.5 L616.6 543.3 M263.4 787.4 L261.1 791.4 L258.4 795.0 L253.3 796.1 L249.2 798.2 L245.5 800.7 L242.3 803.7 L240.0 807.7 L238.0 812.0 L234.6 814.8 M162.4 632.0 L167.0 632.5 L171.9 631.4 L176.5 632.5 L180.8 635.8 L185.6 634.5 M550.1 666.0 L549.5 670.1 L549.1 674.2 L547.8 678.2 L548.3 682.4 L548.6 686.6 L548.6 690.8 L547.1 694.8 L546.1 698.8 M627.5 407.1 L623.5 408.7 L620.5 411.7 L618.7 416.5 L614.8 418.1 L609.7 418.1 L605.4 419.1 L602.4 422.1 L599.7 425.7 M418.7 412.3 L418.9 412.1 L418.4 410.8 L417.2 409.4 L417.4 409.7 L417.0 408.2 L415.6 407.8 L415.1 406.7 L413.9 407.0 L413.1 407.3 L389.1 410.3 L388.4 410.6 L387.3 411.1 L345.5 421.3 L347.3 420.8 L346.4 418.8 L345.7 417.5 L346.0 416.8 L346.5 417.2 L345.6 414.9 L344.7 414.9 L344.0 414.3 L343.5 414.2 L342.3 414.1 L320.0 415.7 L296.5 416.2 L295.6 416.4 L275.0 422.8 L274.5 423.0 M231.5 455.6 L222.9 445.6 L222.3 445.5 L222.0 445.7 L221.3 444.5 L220.3 444.8 L219.1 444.3 L217.2 445.6 L214.5 447.5 L213.6 447.2 L213.3 447.4 L211.8 448.3 L200.3 469.9 L195.5 478.5 L196.0 479.4 L195.4 479.8 L195.7 481.0 L196.9 482.1 L196.9 483.0 L197.2 483.0 L198.0 483.6 L198.1 484.4 L198.9 484.6 L209.7 486.2 L237.2 490.7 L268.7 493.7 L287.0 493.0 L288.3 492.2 L309.7 483.0 L337.6 468.5 L367.8 456.5 L368.1 456.8 L400.7 435.8 L401.3 434.5 L402.1 434.2 L406.3 429.2 L417.3 420.2 L417.6 419.6 L418.3 418.0 L418.8 417.6 L418.2 417.1 M363.4 383.7 L372.6 389.7 L374.3 389.8 L374.8 390.9 L375.7 390.3 L413.5 385.3 L452.4 382.9 L471.5 385.7 L492.4 388.7 L512.7 385.6 L513.8 386.5 L514.2 385.8 L514.6 385.8 L522.5 377.4 L535.7 369.7 L536.3 369.2 L537.8 367.9 L538.1 366.9 L539.9 359.5 L541.5 343.2 L547.8 332.6 L547.9 332.1 L548.2 330.7 L547.1 330.2 L548.0 329.0 L543.7 320.3 L543.9 319.9 L542.6 320.0 L542.2 318.6 L541.4 318.6 L540.4 318.7 L520.1 316.2 L496.1 318.4 L476.4 322.7 L451.7 330.4 L423.3 336.5 L398.4 344.4 L397.4 344.8 L396.5 344.5 L368.8 370.9 L362.4 376.8 L362.9 377.8 L361.5 378.4 L362.4 379.1 L362.0 379.7 L362.0 380.6 L362.3 381.7 L363.0 382.5 L362.6 382.8 L363.8 383.4 M200.1 261.4 L201.5 277.0 L205.4 287.5 L200.6 315.4 L194.1 319.6 L192.6 319.6 L192.2 321.1 L192.7 321.9 L190.7 322.4 L192.2 322.6 L181.1 332.8 L180.8 333.5 L180.5 334.4 L179.5 334.8 L178.6 335.4 L178.1 336.2 L177.3 349.9 L176.5 350.9 L177.4 351.9 L180.8 361.8 L181.4 363.1 L182.0 363.3 L183.2 364.1 L189.1 365.9 L188.6 366.9 L190.1 366.6 L190.9 366.7 L191.3 365.6 L200.8 362.3 L200.3 360.9 L208.8 353.1 L210.1 352.5 L214.9 342.8 L232.7 340.1 L241.9 383.1 L245.2 394.4 L244.8 395.2 L245.5 395.6 L245.7 396.7 L247.3 396.3 L246.3 396.9 L249.0 397.8 L249.1 397.1 L250.6 397.2 L250.9 397.6 L256.5 393.4 L275.3 391.0 L274.9 391.5 L276.2 391.3 L277.3 389.7 L286.1 380.8 L286.7 380.0 L287.4 379.1 L287.3 379.0 L289.7 357.6 L289.2 357.6 L287.2 334.2 L303.3 309.0 L315.6 305.1 L320.9 303.2 L328.6 298.1 L330.1 302.3 L331.5 302.4 L331.8 303.0 L347.6 309.5 L348.3 309.8 L357.5 311.1 L358.8 310.7 L359.7 310.5 L360.1 309.6 L361.3 309.7 L362.1 308.7 L362.1 308.3 L362.5 307.3 L364.9 294.5 L365.5 293.8 L365.8 293.1 L365.1 292.6 L365.7 292.1 L363.8 291.0 L374.8 293.3 L375.8 293.2 L376.0 293.7 L376.6 293.6 L377.8 293.3 L379.5 292.6 L379.7 291.8 L379.7 291.4 L380.2 290.6 L380.3 289.0 L380.1 286.3 L380.0 286.2 L379.9 285.5 L379.3 284.9 L371.7 275.3 L370.5 274.5 L365.7 262.9 L365.6 261.9 L365.3 261.5 L365.4 260.5 L360.5 255.5 L361.0 254.3 L356.5 251.4 M228.2 419.2 L221.8 431.1 L221.3 432.2 L222.2 433.4 L221.7 434.4 L223.0 442.6 L224.4 443.9 L224.7 444.5 L225.5 444.7 L225.5 445.5 L227.4 445.5 L237.4 447.4 L238.5 447.1 M256.3 436.1 L256.1 435.4 L256.5 434.7 L256.4 433.7 L255.9 433.1 L251.1 426.4 L242.8 416.2 L242.9 415.7 L241.8 415.2 L241.2 414.3 L240.6 414.8 L240.1 414.6 L238.8 414.5 L229.6 417.0 L230.0 417.4 L228.3 418.2 L228.3 418.6 L227.6 419.0 M994.8 329.8 L996.8 343.0 L999.2 342.9 L999.3 343.1 L999.5 342.9 L1000.2 343.2 L1000.8 342.7 L1001.3 343.0 L1001.2 343.1 L1001.6 344.2 L1002.1 343.9 L1001.6 344.7 L1010.4 354.1 L1016.6 357.9 L1022.1 349.0 L1021.3 348.5 L1022.3 348.7 L1022.4 348.4 L1022.3 347.7 L1022.8 347.1 L1023.9 347.4 L1023.3 347.2 L1024.3 347.1 L1024.5 347.4 L1040.1 344.3 L1054.5 330.5 L1061.4 310.5 L1061.9 309.3 L1061.1 309.2 L1061.6 309.0 L1061.8 308.4 L1062.8 307.5 L1072.5 297.9 L1072.5 296.9 L1072.2 298.0 L1074.0 297.8 L1091.3 288.2 L1091.4 288.2 L1092.3 288.5 L1092.8 287.3 L1092.7 288.1 L1093.6 288.3 L1093.5 288.2 L1094.2 288.7 L1094.1 288.2 L1094.4 288.2 L1094.7 288.2 L1095.1 289.5 L1103.2 293.9 L1103.8 294.4 L1104.4 291.1 L1093.3 284.5 L1082.1 279.8 L1082.1 279.4 L1082.0 279.8 L1081.0 278.7 L1081.9 278.8 L1080.3 279.0 L1081.0 278.4 L1074.7 271.8 L1057.9 273.9 L1041.3 280.6 L1025.2 291.8 L1013.2 300.6 L1013.8 301.6 L999.9 313.6 L995.2 330.7 M767.0 439.1 L761.5 439.8 L756.1 440.9 L751.0 442.8 L745.7 444.5 L740.3 445.6 L734.9 446.6 L730.0 448.8 L724.5 448.2 L719.4 449.5 L714.4 451.5 L709.4 453.4 L704.1 453.7 L698.9 455.2 L694.1 452.6 L689.4 449.8 L684.7 447.1 L679.3 445.8 L674.6 443.0 L669.7 440.4 L665.9 436.5 L661.6 433.3 L656.4 431.3 L652.6 427.4 L648.7 423.7 L643.9 421.4 L639.2 419.5 L634.4 417.7 L629.5 416.6 L624.2 417.0 L619.3 415.9 L614.5 414.2 L609.9 411.9 L604.9 411.1 L600.2 409.2 L595.2 408.1 L590.2 406.8 L585.0 406.4 L579.8 405.8 L574.8 404.4 L570.0 402.7 L565.1 400.9 L560.1 399.0 L554.2 399.7 L548.7 397.3 L542.7 398.1 L537.0 397.2 L531.7 396.4 L526.3 397.0 L521.2 395.1 L516.1 392.8 L510.6 394.2 L505.2 394.3 L500.0 393.0 L495.0 392.1 L490.1 391.3 L485.0 392.2 L479.9 392.9 L475.0 391.1 L469.9 390.7 L465.1 392.8 L459.8 393.4 L454.9 395.3 L450.1 397.5 L445.1 398.9 L440.1 400.3 L434.6 402.2 L428.9 403.7 L423.0 404.1 L417.7 406.6 L412.0 408.0 L407.8 412.0 L402.8 415.1 L398.5 419.0 L394.4 423.2 L389.5 426.3 L385.0 430.0 L381.3 433.8 L377.0 436.8 L373.0 440.2 L368.9 443.6 L365.4 447.6 L361.3 450.9 L357.0 454.0 L352.3 456.6 L347.4 458.6 L343.8 463.0 L339.3 466.0 L333.7 466.9 L328.6 468.7 L324.4 471.9 L320.1 475.2 L315.0 477.7 L309.8 480.0 L305.0 483.1 L299.4 484.7 L294.1 486.7 L289.2 489.7 L284.0 492.0 L278.5 492.0 L273.0 491.9 L267.5 490.4 L262.0 490.5 L256.5 491.2 L251.0 491.0 L245.5 490.2 L240.0 489.8 L234.8 489.6 L229.6 488.9 L224.9 486.5 L220.3 483.9 L215.4 482.1 L210.2 481.9 L205.0 481.3 L199.9 480.3 L194.8 479.1 L190.1 476.0 L184.9 475.2 L179.3 475.7 L174.1 474.8 L169.1 473.3 L164.2 471.0 L159.0 470.0 M766.8 438.9 L764.6 443.4 L760.8 446.8 L758.1 451.1 L754.5 454.6 L751.1 459.6 L748.5 465.1 L745.1 470.1 L740.3 472.6 L736.1 476.1 L732.1 479.7 L728.3 483.6 L723.3 485.8 L718.5 488.4 L714.0 491.3 L710.1 495.2 L704.9 496.7 L700.1 499.2 L695.6 502.2 L690.9 504.8 L685.8 506.6 L680.6 508.1 L675.4 509.8 L671.0 513.0 L667.0 516.4 L662.5 518.9 L657.7 521.0 L652.9 523.1 L649.9 528.0 L645.0 530.0 L641.4 533.5 L636.1 534.8 L633.3 539.4 L628.8 541.7 L625.0 545.0 L620.6 548.6 L616.0 552.0 L613.4 557.4 L609.9 561.9 L605.2 565.2 L600.1 568.5 L595.6 572.3 L592.3 577.6 L587.5 581.1 L583.1 585.1 L579.1 588.4 L575.5 592.3 L571.3 595.2 L566.1 597.0 L561.5 599.4 L557.7 603.0 L554.3 607.1 L549.7 609.6 L546.2 613.8 L541.7 616.7 L537.0 619.3 L531.8 621.1 L528.3 625.4 L524.6 629.3 L519.7 631.8 L517.6 637.6 L512.0 640.6 L508.6 645.4 L504.7 649.9 L502.9 654.9 L501.5 660.1 L500.3 665.4 L497.6 670.0 L495.1 674.8 L493.7 680.0 L492.0 685.1 L490.4 690.2 L487.6 694.9 L485.7 700.0 L484.5 705.4 L482.1 710.3 L479.2 715.0 L477.2 720.0 L475.1 725.0 L472.8 729.8 L471.7 735.1 L470.3 740.3 L467.9 745.1 L466.0 750.0 L463.6 754.8 L461.7 759.8 L460.2 764.9 L458.5 769.9 L457.4 775.2 L455.0 780.0 L453.0 784.8 L452.0 789.9 L450.4 794.8 L448.8 799.7 L448.6 805.0 L448.3 810.2 L448.1 815.5 L445.8 820.2 L444.2 825.1 L441.7 829.8 L440.4 834.8 L440.0 840.0 M625.0 544.8 L619.9 545.3 L614.8 546.1 L610.2 549.1 L605.2 550.0 L599.9 549.7 L595.0 550.8 L590.0 552.0 L585.4 554.8 L580.0 554.8 L574.6 554.4 L570.1 557.5 L565.1 558.9 L560.0 559.9 L554.9 559.9 L549.9 559.7 L544.9 559.0 L540.0 557.4 L535.0 556.8 L530.0 556.2 L525.0 555.5 L520.0 555.2 L515.0 554.4 L510.1 553.3 L505.1 552.6 L500.0 553.0 L494.9 553.5 L489.8 554.2 L484.9 552.6 L480.0 550.9 L475.1 549.6 L470.0 550.1 L465.0 549.5 L460.1 548.3 L455.1 547.7 L450.0 547.7 L444.9 548.0 L439.9 548.1 L435.0 546.9 L430.0 545.6 L425.0 545.3 L420.1 544.4 L415.0 544.0 L410.0 543.1 L405.0 542.3 L400.1 541.3 L395.0 541.0 L389.9 540.7 L384.9 539.8 L379.9 538.8 L375.1 536.8 L370.1 536.1 L365.0 536.0 L360.0 534.9 L354.7 534.1 L349.6 532.8 L344.2 532.4 L339.4 529.9 L334.6 527.1 L329.3 526.4 L324.3 524.5 L318.9 524.0 L313.6 523.2 L308.2 522.8 L303.0 521.7 L298.1 519.6 L293.0 517.8 L287.5 518.2 L282.0 518.7 L276.5 519.5 L271.0 519.6 L265.5 518.8 L260.0 519.7 L255.0 520.6 L249.8 520.3 L244.8 521.1 L239.8 522.0 L234.8 523.0 L229.8 523.8 L224.7 524.0 L219.7 524.7 L214.7 525.9 L209.5 524.6 L204.5 525.6 L199.4 525.6 L194.3 525.6 L189.2 526.1 L184.2 527.0 L179.1 527.4 L174.2 528.8 L169.1 529.0 L164.1 529.7 L159.0 530.0 M583.0 585.2 L577.4 584.5 L572.2 582.9 L567.1 580.4 L561.7 579.0 L556.2 578.2 L550.6 578.1 L545.3 576.6 L540.0 575.1 L534.5 574.6 L529.2 573.4 L524.3 570.5 L519.3 568.1 L513.7 568.2 L508.1 567.8 L503.1 565.5 L497.7 565.7 L492.3 565.6 L487.1 563.8 L482.0 562.1 L476.5 562.6 L471.2 562.3 L465.8 562.7 L460.5 561.9 L455.3 560.3 L450.0 560.0 L445.0 560.3 L440.0 560.8 L435.0 559.9 L430.0 558.7 L425.0 558.6 L420.0 559.7 L415.0 560.5 L410.0 561.0 L405.0 560.5 L400.0 560.3 L394.7 560.0 L389.3 559.9 L384.2 557.6 L379.0 556.2 L373.6 556.8 L368.2 557.3 L363.0 555.9 L358.4 553.5 L353.4 551.7 L349.6 547.7 L344.1 547.0 L339.4 544.7 L334.6 542.5 L329.6 540.6 L325.3 537.4 L320.4 535.1 L316.1 531.9 L311.9 528.4 L307.2 525.6 L302.3 523.5 L297.3 521.3 L293.8 517.7 L290.6 513.0 L288.6 507.9 L288.7 502.0 L286.5 497.0 L284.0 492.0 M537.2 397.0 L536.1 402.4 L534.3 407.6 L533.5 413.0 L534.2 418.6 L533.7 424.0 L532.8 429.4 L530.4 434.5 L530.0 440.0 L528.4 444.9 L527.7 450.0 L527.1 455.2 L524.9 460.0 L523.8 465.0 L522.0 469.9 L520.7 474.9 L519.7 479.9 L518.9 485.0 L518.6 490.1 L517.6 495.1 L516.3 500.1 L514.2 504.8 L512.2 509.6 L512.6 514.9 L512.3 520.1 L511.0 525.0 L509.5 529.9 L509.0 535.1 L507.9 540.3 L505.6 545.2 L505.5 550.5 L506.2 555.9 L503.8 560.8 L503.5 566.3 L500.7 571.0 L497.7 575.7 L494.8 580.4 L492.9 585.6 L491.0 590.8 L488.7 595.9 L485.4 600.4 L481.9 604.8 L479.6 609.8 L477.1 614.5 L474.5 619.1 L471.5 623.4 L469.5 628.4 L466.8 633.0 L463.9 637.4 L459.9 641.2 L457.9 646.2 L455.1 650.7 L453.3 655.8 L449.8 659.9 L447.4 664.6 L445.4 669.6 L442.3 673.9 L439.1 678.2 L435.2 682.0 L432.4 686.5 L430.8 691.7 L428.5 696.6 L425.8 701.1 L423.8 706.1 L419.6 709.6 L416.0 713.3 L412.9 717.4 L408.7 720.5 L404.7 723.8 L401.1 727.5 L398.0 731.7 L395.3 736.2 L391.4 739.6 L387.5 743.0 L383.6 746.4 L379.8 749.7 L375.7 753.1 L371.3 756.3 L367.2 759.6 L362.9 762.8 L359.0 766.5 L355.4 770.5 L351.3 774.0 L347.4 777.5 L342.9 780.5 L338.8 783.9 L333.7 786.1 L329.4 789.5 L327.0 794.5 L324.0 798.8 L321.2 803.4 L316.4 806.5 L311.9 809.7 L308.5 813.8 L304.9 817.8 L303.2 823.2 L300.1 827.6 L297.5 832.4 L293.6 836.1 L290.0 840.0 M159.0 589.9 L164.1 590.0 L169.2 589.7 L174.3 589.2 L179.3 588.6 L184.4 588.2 L189.4 587.1 L194.5 586.9 L199.6 586.4 L204.7 586.6 L209.8 586.1 L214.9 586.4 L220.0 585.8 L225.0 584.7 L230.0 585.1 L235.1 585.1 L240.0 586.0 L244.9 588.2 L249.9 588.7 L254.9 588.4 L259.9 588.4 L265.0 587.6 L270.1 586.9 L275.1 587.6 L280.1 588.4 L285.0 589.6 L290.0 590.1 L295.2 591.0 L300.5 591.2 L305.7 591.7 L311.1 591.3 L316.2 593.0 L321.3 594.4 L326.5 595.3 L331.5 597.0 L336.7 598.2 L342.0 598.2 L347.3 598.3 L352.6 598.5 L357.8 599.4 L363.0 599.9 L368.1 601.8 L373.3 603.0 L378.6 604.2 L383.8 605.6 L388.9 607.2 L394.0 608.9 L399.1 610.7 L404.0 613.1 L409.3 614.1 L414.3 616.0 L419.7 617.0 L424.8 618.5 L430.0 620.0 L435.0 621.7 L439.6 624.2 L444.8 625.0 L450.2 625.3 L455.0 627.4 L460.4 627.7 L465.1 630.1 L470.0 632.1 L474.8 634.1 L479.9 635.2 L485.4 637.4 L490.0 641.1 L494.2 645.3 L500.1 646.9 L505.0 650.0 M283.4 491.8 L282.7 496.9 L281.1 501.7 L279.4 506.5 L276.8 510.9 L274.6 515.5 L272.9 520.3 L272.2 525.4 L270.1 530.1 L265.7 533.2 L262.0 537.0 L258.4 540.9 L256.7 546.7 L251.9 549.4 L246.9 551.9 L243.1 555.6 L240.0 560.0 L235.5 564.1 L233.7 569.8 L232.5 575.9 L227.4 579.6 L224.8 584.7 L220.9 588.7 L216.6 592.4 L212.4 596.0 L207.8 599.2 L203.8 603.2 L198.8 605.8 L195.0 610.0 L190.6 613.6 L185.5 616.1 L179.8 617.9 L175.6 621.8 L172.2 626.8 L167.1 629.5 L162.0 632.0 M283.8 492.1 L286.0 497.1 L289.1 501.9 L288.4 507.9 L290.0 513.2 L292.5 518.1 L294.2 523.2 L293.1 528.8 L295.7 533.7 L298.1 538.7 L298.6 544.0 L296.8 549.7 L298.1 554.9 L299.9 560.0 L299.4 565.0 L298.6 570.0 L299.2 575.0 L298.4 580.0 L298.3 585.0 L297.7 590.0 L297.4 595.0 L296.1 600.0 L295.2 604.9 L295.5 610.0 L295.0 615.0 L295.3 620.0 L294.6 625.0 L294.3 630.1 L291.9 634.8 L290.7 639.8 L290.4 644.8 L290.3 649.9 L291.3 655.1 L292.1 660.2 L290.0 665.0 L289.7 670.1 L288.0 674.9 L288.2 680.0 L288.8 685.0 L289.1 690.2 L290.3 695.1 L292.3 699.9 L293.6 704.9 L294.5 709.9 L296.3 714.7 L296.3 719.9 L296.1 725.2 L298.0 730.0 L298.2 735.2 L300.1 740.0 L300.0 745.0 L299.6 750.0 L298.2 755.0 L298.7 760.0 L297.5 765.0 L297.2 770.0 L296.4 774.9 L297.0 780.0 L297.3 785.1 L296.3 790.0 L295.3 795.0 L295.2 800.0 L293.5 804.9 L294.0 810.4 L292.1 815.2 L289.7 819.9 L287.5 824.7 L287.6 830.0 L286.7 835.1 L285.0 840.0 M159.0 689.9 L164.1 690.1 L169.2 690.5 L174.2 689.0 L179.3 688.3 L184.3 687.7 L189.4 688.8 L194.5 688.4 L199.6 689.4 L204.7 690.0 L209.8 690.1 L214.8 689.1 L219.9 688.8 L224.9 688.2 L230.0 688.1 L235.1 686.3 L240.5 686.3 L245.7 685.0 L251.1 684.9 L256.5 685.5 L261.9 685.3 L267.0 683.6 L272.1 681.8 L277.3 680.4 L282.6 680.1 L288.0 680.1 L292.9 681.2 L297.7 683.0 L302.1 685.6 L306.4 688.6 L311.0 690.7 L316.2 691.4 L321.2 692.5 L326.2 693.6 L330.9 695.5 L335.5 697.7 L340.1 699.7 L345.1 700.8 L350.2 701.7 L355.2 703.0 L360.0 704.9 L364.8 707.2 L369.7 708.5 L374.8 709.5 L379.8 710.6 L385.1 710.8 L390.2 711.8 L395.2 713.0 L400.0 715.2 L405.0 715.4 L409.9 716.8 L414.9 717.6 L419.9 718.1 L424.9 718.9 L430.0 719.3 L435.1 718.9 L440.1 719.7 L445.2 719.6 L450.1 721.1 L454.9 723.2 L459.9 723.5 L464.9 724.1 L469.9 724.8 L474.8 725.3 L479.3 727.6 L483.9 729.8 L488.7 731.5 L492.9 734.3 L496.7 737.8 L501.2 740.1 L505.9 742.1 L509.9 745.1 L514.5 748.4 L520.1 750.1 L525.2 752.5 L529.8 755.8 L533.6 760.4 L539.1 762.2 L544.0 765.0 M222.0 442.0 L226.4 438.7 L231.1 435.8 L236.9 434.9 L241.7 432.2 L245.7 428.2 L249.9 424.5 L254.8 422.0 L260.0 420.1 L265.3 418.3 L270.4 416.3 L275.2 413.4 L279.8 410.0 L285.1 408.4 L290.8 407.6 L296.2 406.2 L301.1 403.5 L306.0 401.0 L310.9 400.0 L315.6 398.1 L320.3 396.3 L325.5 396.1 L330.2 394.4 L335.2 393.5 L340.0 392.0 L344.9 390.6 L349.8 388.8 L355.1 389.0 L360.2 387.9 L365.6 386.5 L367.7 381.5 L373.1 379.3 L373.8 373.3 L377.9 369.9 L380.5 365.0 L385.2 361.7 L387.8 356.8 L391.7 352.0 L396.0 347.7 L400.0 342.9 L405.0 341.5 L410.1 340.6 L414.7 337.6 L420.0 337.5 L425.0 335.8 L430.7 335.3 L436.2 333.6 L441.6 331.5 L447.4 331.3 L453.1 330.2 L458.1 328.7 L463.2 327.3 L467.9 324.9 L473.1 323.9 L478.0 322.1 L483.8 319.9 L489.9 319.0 L496.0 318.3 L501.0 317.2 L506.0 317.9 L511.0 317.4 L516.0 316.3 L521.0 316.3 L527.0 317.4 L532.9 315.2 L539.0 316.2 L545.2 316.3 L549.5 311.7 L555.1 308.8 L559.9 304.7 L565.0 303.0 L570.3 301.5 L575.0 298.7 L579.7 295.8 L584.6 293.5 L589.9 292.0 L595.4 291.0 L600.1 288.2 L604.8 286.2 L609.1 283.5 L613.4 280.5 L618.0 278.3 L623.0 277.1 L627.8 275.3 L632.6 273.5 L637.6 272.1 L641.8 269.1 L646.2 266.5 L650.7 264.1 L655.3 261.9 L660.0 260.1 L665.0 258.6 L670.0 257.2 L674.6 254.1 L679.7 252.9 L685.0 252.4 L690.3 252.1 L695.0 249.5 L700.0 248.0 M625.1 545.0 L625.4 540.0 L627.0 535.1 L628.0 530.1 L627.4 525.0 L625.8 519.8 L627.0 514.8 L628.7 510.0 L630.4 505.1 L630.2 500.0 L630.4 494.9 L632.9 490.2 L633.7 485.1 L634.2 480.0 L634.5 474.9 L634.7 469.7 L636.0 464.8 L638.2 460.0 L639.1 454.5 L640.6 449.0 L640.8 443.3 L640.4 437.6 L641.6 432.0 L643.6 426.6 L643.7 421.0 L645.2 415.9 L644.9 410.8 L643.2 405.6 L642.9 400.5 L643.8 395.4 L645.0 390.3 L645.8 385.1 L644.4 379.9 L645.4 374.9 L646.2 369.8 L648.6 365.1 L650.8 360.4 L651.4 355.3 L650.5 349.9 L650.7 344.7 L652.2 339.8 L654.0 335.0 L655.1 330.0 L655.9 324.9 L656.5 319.8 L656.3 314.6 L656.7 309.5 L655.2 304.3 L655.8 299.2 L655.7 294.0 L655.5 288.9 L656.7 283.8 L658.7 278.8 L659.2 273.7 L660.3 268.6 L660.1 263.4 L659.8 258.3 L660.2 253.2 L660.0 248.0 M670.9 512.9 L674.3 508.6 L677.1 503.9 L677.6 498.0 L680.7 493.5 L684.4 489.3 L688.5 485.4 L690.3 480.1 L691.5 474.9 L694.4 470.3 L696.1 465.2 L696.7 459.8 L698.7 455.0 L698.4 450.0 L699.1 444.9 L698.8 439.8 L695.9 435.1 L694.5 430.2 L695.3 425.0 L694.9 420.0 L694.7 415.0 L694.5 409.9 L692.4 405.1 L691.9 400.1 L691.2 395.1 L692.7 389.9 L692.4 384.9 L691.7 379.9 L690.9 375.0 L690.2 370.0 L688.4 365.1 L688.0 360.1 L687.9 355.1 L688.6 349.9 L688.4 344.9 L688.1 339.9 L687.6 334.9 L685.2 330.1 L684.7 325.1 L685.2 320.0 L686.0 314.8 L687.1 309.7 L688.1 304.5 L689.8 299.5 L690.4 294.3 L691.7 289.2 L693.1 284.1 L693.5 278.9 L694.2 273.6 L695.7 268.6 L696.9 263.4 L698.2 258.4 L699.0 253.2 L700.0 248.0 M767.4 438.9 L763.9 434.7 L765.3 428.8 L761.2 424.9 L759.5 420.2 L757.8 415.0 L756.3 409.7 L752.3 405.4 L750.5 400.1 L749.9 395.1 L750.1 389.9 L750.8 384.7 L748.3 380.0 L745.9 375.2 L745.3 370.2 L745.6 365.0 L745.1 360.0 L744.2 355.0 L744.2 349.9 L743.3 344.9 L741.5 340.0 L739.7 335.2 L739.2 330.1 L739.0 325.0 L739.0 319.9 L738.2 314.9 L736.9 310.0 L735.7 305.0 L734.7 300.1 L734.4 294.7 L733.8 289.5 L733.2 284.2 L730.5 279.3 L728.3 274.3 L727.4 269.1 L728.0 263.6 L727.3 258.3 L726.7 253.1 L725.0 248.0 M767.2 439.1 L768.9 434.2 L769.7 429.1 L771.2 424.2 L773.7 419.6 L776.1 414.9 L777.2 409.9 L777.5 404.6 L780.2 400.1 L782.9 394.9 L784.6 389.2 L789.4 385.2 L792.7 380.4 L794.8 374.9 L799.0 371.1 L801.9 366.3 L804.1 360.8 L808.5 357.2 L813.5 354.1 L816.7 349.5 L819.9 344.9 L824.5 342.3 L829.0 339.6 L833.0 336.1 L837.6 333.5 L842.4 331.4 L846.8 328.6 L851.3 325.9 L855.9 323.3 L860.4 320.6 L864.5 317.3 L868.7 314.2 L872.4 310.1 L877.4 308.3 L883.0 307.3 L887.5 304.6 L891.5 301.1 L895.1 297.0 L899.9 294.9 L904.5 292.5 L909.1 290.1 L914.3 288.8 L918.8 286.4 L922.9 283.0 L927.1 280.0 L931.0 276.3 L935.8 274.4 L940.6 272.3 L945.4 270.3 L950.0 267.9 L955.0 266.1 L960.3 265.3 L965.6 264.3 L970.4 261.9 L975.0 259.0 L979.3 255.4 L984.5 254.0 L990.0 253.5 L995.2 252.4 L1000.0 250.0 M475.3 725.2 L471.7 729.0 L469.3 733.7 L465.9 737.6 L462.0 741.2 L458.0 744.6 L454.5 748.5 L452.4 753.4 L449.4 757.6 L447.1 762.4 L443.4 766.1 L440.0 770.1 L436.0 773.0 L432.1 776.1 L428.2 779.3 L423.6 781.5 L419.2 783.9 L415.4 787.3 L411.7 790.6 L408.7 794.9 L404.7 797.9 L400.0 800.0 L394.6 802.3 L388.4 802.4 L383.4 805.9 L377.9 808.3 L371.9 808.9 L367.3 811.3 L362.1 812.5 L357.4 814.8 L353.5 818.6 L349.2 821.8 L344.7 824.4 L339.2 825.0 L334.5 827.4 L330.3 830.6 L325.2 832.9 L319.5 834.1 L315.3 838.1 L310.0 840.0 M182.0 814.6 L187.3 814.4 L192.5 815.2 L197.7 815.4 L202.9 816.9 L208.1 817.4 L213.2 819.5 L218.5 819.6 L223.8 818.2 L229.1 818.0 L234.4 818.1 L239.6 818.6 L244.7 819.9 L250.0 820.2 L255.0 819.2 L260.0 819.3 L265.0 819.3 L270.1 819.6 L275.1 819.5 L280.0 818.2 L285.0 817.2 L289.9 816.3 L294.9 815.9 L300.0 815.9 L305.0 815.5 L310.0 815.7 L315.0 815.4 L320.0 814.9 L325.2 814.0 L330.4 814.2 L335.7 813.8 L340.8 812.9 L346.0 812.1 L351.1 810.9 L356.3 809.9 L361.6 810.0 L366.8 809.7 L372.0 809.1 L376.8 810.4 L381.5 812.2 L386.2 813.8 L391.1 815.1 L395.3 818.1 L400.1 819.6 L404.9 821.0 L409.9 822.0 L414.7 823.4 L419.3 825.2 L424.0 826.9 L429.0 828.1 L434.1 829.1 L439.2 829.7 L444.4 829.3 L449.5 830.1 L454.6 831.2 L459.6 832.3 L464.6 833.9 L469.8 833.6 L474.8 834.7 L480.0 835.0 L485.1 834.5 L490.0 835.9 L494.9 837.4 L500.0 837.4 L505.0 838.3 L510.1 837.9 L515.1 838.3 L520.0 840.0 M222.1 441.9 L218.8 437.9 L214.3 435.0 L210.5 431.5 L207.9 426.7 L204.2 423.1 L200.5 419.8 L197.5 415.0 L198.1 409.0 L194.6 404.3 L193.4 399.0 L193.1 393.5 L193.0 388.1 L192.0 382.7 L191.5 377.2 L190.5 371.8 L190.7 366.3 L190.9 360.9 L190.5 355.4 L190.4 350.0 L190.0 344.9 L192.0 340.1 L191.9 335.0 L191.3 329.9 L192.1 325.0 L191.8 319.9 L193.3 315.0 L194.5 310.0 L195.0 305.1 L194.8 300.0 L195.7 294.8 L197.2 289.7 L197.9 284.5 L197.7 279.3 L197.0 274.0 L197.1 268.7 L198.5 263.6 L199.5 258.4 L199.7 253.2 L200.0 248.0 M193.0 399.2 L198.3 398.5 L203.6 397.7 L208.7 395.6 L214.1 396.1 L219.5 397.2 L224.8 396.4 L230.0 394.6 L235.0 395.3 L240.0 394.9 L245.0 394.8 L249.9 395.4 L255.1 395.5 L260.1 396.1 L265.0 397.4 L270.0 398.5 L275.0 399.2 L280.0 399.9 L285.2 401.1 L290.4 399.5 L295.6 401.0 L300.8 401.2 L306.0 401.0 M411.7 408.1 L410.4 403.2 L407.6 398.8 L404.7 394.6 L404.1 389.3 L402.8 384.3 L399.6 380.2 L396.8 375.8 L394.2 371.3 L394.2 365.5 L389.9 361.9 L388.0 357.0 M388.3 356.9 L386.0 352.2 L384.5 347.2 L384.2 341.9 L383.7 336.7 L383.6 331.4 L380.5 326.9 L378.6 322.0 L377.3 317.0 L375.4 312.2 L374.1 306.9 L373.8 301.4 L373.2 295.9 L371.2 290.8 L368.1 286.0 L367.1 280.7 L365.9 275.4 L365.2 270.0 L363.5 264.5 L361.6 259.2 L361.8 253.4 L360.0 248.0 M505.0 650.2 L510.0 648.6 L514.7 646.5 L520.0 646.4 L525.2 645.8 L530.1 644.3 L534.9 642.2 L540.0 641.1 L545.2 640.2 L546.8 635.0 L550.2 631.1 L553.9 627.4 L557.8 623.8 L561.3 620.0 L564.2 615.7 L566.1 610.8 L567.5 605.6 L570.3 601.2 L573.4 597.1 L576.5 593.0 L579.5 588.8 L583.0 585.0 M625.1 545.5 L629.9 543.4 L635.0 542.5 L640.2 541.9 L645.3 541.0 L650.1 538.9 L655.1 537.6 L660.1 536.4 L665.2 535.9 L669.9 533.4 L674.6 531.2 L679.9 531.3 L685.0 531.2 L690.1 530.6 L694.9 528.6 L699.9 527.7 L704.8 525.6 L709.6 523.5 L715.2 523.7 L720.4 522.5 L725.0 519.7 L730.0 518.0 M628.0 542.6 L633.7 542.6 L639.5 543.7 L645.0 541.6 L650.5 539.0 L656.4 540.9 L662.1 540.5 L667.1 539.3 L672.2 538.5 L677.1 537.2 L681.6 533.6 L686.9 533.8 L692.1 533.6 L697.2 533.0 L702.0 530.9 L707.4 529.5 L711.8 525.5 L717.2 524.1 L723.2 524.0 L728.0 521.0 M630.0 548.0 L625.6 550.7 L621.3 553.5 L617.3 556.8 L613.1 559.8 L608.7 562.4 L604.4 565.2 L600.1 568.1 L597.0 572.4 L595.3 577.7 L590.5 580.8 L587.6 585.3 L585.2 590.2 L581.0 593.6 L576.7 596.7 L572.3 599.7 L568.8 603.9 L564.7 607.3 L559.9 609.9 L555.5 612.5 L551.1 615.3 L547.9 619.6 L544.0 623.1 L537.9 623.3 L533.9 626.6 L530.0 630.0 L525.7 633.7 L520.6 636.4 L517.2 641.3 L512.9 645.1 L508.0 648.0 M622.1 542.2 L618.6 546.1 L614.6 549.4 L608.9 550.6 L605.2 554.4 L602.7 559.5 L598.4 562.4 L595.0 566.5 L591.7 570.8 L586.9 573.7 L583.2 577.6 L580.2 582.3 L575.6 585.0 L572.7 589.9 L567.1 591.5 L562.5 594.3 L558.9 598.3 L555.3 602.4 L550.7 605.7 L547.1 610.2 L543.0 614.2 L537.2 616.1 L533.2 620.2 L529.6 624.7 L525.0 628.1 L521.0 632.0 L516.2 634.9 L511.1 637.4 L507.6 641.8 L503.0 645.0 M626.9 537.9 L631.4 535.3 L636.1 533.4 L641.1 532.0 L645.5 529.4 L649.9 526.7 L655.8 525.4 L661.0 522.4 L666.1 519.2 L672.0 518.2 L677.6 517.5 L683.0 515.3 L688.8 515.6 L694.5 515.7 L700.0 514.1 L705.1 513.9 L710.0 512.7 L714.7 509.9 L720.0 511.2 L725.2 512.0 L729.9 509.8 L736.2 508.2 L741.8 504.7 L748.2 503.2 L752.1 498.8 L755.8 494.2 L759.9 490.0 L762.0 485.1 L764.0 480.2 L764.8 474.8 L766.8 470.0 L766.8 465.0 L768.4 460.0 L767.5 455.0 L767.2 450.0 L768.0 445.0 M624.1 537.1 L628.3 533.0 L631.2 527.7 L636.4 524.6 L639.9 519.8 L643.3 516.1 L648.2 514.3 L653.2 512.6 L655.7 507.6 L659.9 504.8 L665.0 502.5 L670.3 500.7 L675.5 498.4 L679.7 494.4 L684.9 492.3 L690.1 490.2 L694.3 487.2 L699.1 485.0 L702.8 481.3 L706.8 478.1 L711.2 475.4 L715.7 472.9 L719.8 469.6 L724.9 466.8 L729.8 463.7 L735.1 461.2 L740.0 458.1 L745.1 455.2 L748.8 451.0 L753.3 448.0 L759.1 446.7 L762.9 442.6 L767.0 439.0 M619.9 540.0 L617.9 535.2 L615.4 530.4 L615.2 524.9 L615.1 519.4 L611.6 515.0 L610.4 509.9 L609.0 504.9 L607.1 500.1 L606.2 495.0 L604.8 490.0 L604.5 484.8 L602.5 480.0 L601.5 474.9 L600.2 469.9 L599.1 464.8 L596.9 459.9 L594.2 455.3 L592.3 450.4 L591.7 445.0 L590.0 440.0 L587.8 435.4 L583.9 432.1 L579.8 428.9 L578.2 423.9 L575.0 420.0 L572.6 415.5 L568.6 412.3 L565.3 408.5 L563.5 403.6 L560.0 400.0 M583.2 584.9 L581.7 579.6 L579.9 574.5 L574.9 570.7 L573.3 565.4 L572.5 559.8 L570.5 554.8 L568.0 550.0 L566.8 544.7 L565.4 539.4 L561.8 535.1 L560.2 529.9 L557.8 524.9 L554.2 520.4 L552.2 515.1 L550.8 509.6 L547.7 504.9 L545.0 500.0 M583.2 584.7 L587.9 588.1 L592.6 591.2 L595.2 596.9 L600.2 599.8 L602.7 604.8 L608.8 606.2 L611.1 611.4 L614.8 615.0 L616.9 610.2 L618.2 605.2 L616.2 599.6 L617.9 594.8 L620.1 590.0 L621.7 585.0 L623.8 580.2 L623.8 574.7 L626.1 569.9 L628.0 565.0 M766.8 439.2 L770.5 443.5 L774.6 447.4 L777.8 452.2 L783.5 456.8 L790.0 460.1 L795.0 460.3 L800.0 460.4 L804.9 461.6 L809.9 462.1 L814.8 462.2 L811.8 460.2 L810.0 457.0 M805.1 460.9 L808.5 465.5 L812.4 469.8 L814.8 473.8 L817.0 478.0 M767.0 439.0 L768.1 444.1 L767.5 449.4 L767.9 454.6 L769.0 459.7 L769.6 464.8 L770.0 470.0 L767.3 474.9 L765.3 480.2 L762.1 484.8 L760.0 490.0 L756.1 493.6 L753.5 498.5 L747.7 500.2 L745.0 505.0 M411.6 407.4 L407.0 410.1 L402.5 412.8 L398.8 417.0 L394.4 420.0 L389.3 421.9 L385.2 425.2 L381.1 428.7 L377.5 432.7 L373.6 436.4 L368.7 438.9 L364.6 442.4 L361.0 446.5 L357.2 450.3 L352.8 453.5 L347.3 455.0 L343.2 458.6 L339.3 462.5 L334.5 465.0 L329.8 467.7 L324.6 470.2 L319.7 473.1 L315.3 477.0 L310.6 480.5 L304.9 482.0 L300.1 485.5 L295.0 486.1 L290.2 488.3 L285.0 488.7 L279.9 489.2 L275.0 490.9 L270.0 492.2 L265.0 491.3 L260.1 490.0 L255.0 489.5 L249.9 489.8 L245.0 488.5 L240.0 487.6 L234.9 487.3 L230.0 486.0 M504.8 650.1 L507.1 654.8 L507.5 660.1 L508.8 665.2 L509.3 670.5 L512.2 675.1 L515.4 679.6 L516.1 684.8 L517.3 689.9 L519.1 694.8 L519.8 700.1 L522.5 705.0 L525.4 709.8 L529.0 714.3 L531.3 719.3 L531.3 725.6 L534.0 730.5 L537.6 734.9 L540.2 740.0 L541.5 744.9 L540.8 750.1 L542.4 755.0 L543.8 759.9 L544.0 765.0 M504.7 650.3 L509.0 653.2 L512.8 656.6 L516.7 659.9 L520.4 663.6 L523.7 667.5 L528.2 670.1 L532.0 673.6 L536.6 676.1 L540.5 679.5 L545.0 683.0 L548.7 687.3 L550.8 693.2 L555.7 696.3 L559.5 699.1 L565.0 697.0 L570.6 695.0 L575.2 691.3 L580.0 688.0 M804 358 L830 360 L870 360 L910 359 L940 358 L988 357 L991 350 M897 305 L903 318 L913 331 L928 346 L941 358 M996 256 L999 270 L1003 280 L1009 297 M405.8 251.9 L411.5 257.7 L410.6 259.6 L414.4 265.4 L420.2 269.2 L421.2 273.1 L419.2 277.9 L414.4 288.5 L416.4 298.1 L417.3 307.7 L416.4 315.4 L412 322 L405 330 M448.1 248 L451 255.8 L457.7 264.4 L458.7 271.2 L466.4 280.8 L469.3 288.5 L476 304.9 L476 315.4 L478 322.2 L480 332 M400 318 L415.4 315.4 L435.6 318.3 L443.3 317.4 L457.7 309.7 L477 304.9 L486.6 301 L501.1 289.5 L505.9 289 L520 285 L540 278 M435.6 318.3 L433.7 325.1 L424.1 331.8 L418 340 M390 252 L400 251.9 L409.6 251" fill="none" stroke="#0000ff" stroke-width="1.7" stroke-linejoin="round" stroke-linecap="round"/>
<circle cx="452" cy="272" r="58.5" fill="#663399" fill-opacity="0.5" stroke="#00aa55" stroke-width="3"/><circle cx="451.8" cy="699.6" r="3" fill="#ffff00" stroke="#ffff00" stroke-width="1"/><defs><linearGradient id="mg" x1="0" y1="0" x2="0" y2="1"><stop offset="0" stop-color="#62abe2"/><stop offset="0.5" stop-color="#3f93d5"/><stop offset="1" stop-color="#2a80cb"/></linearGradient><filter id="blur"><feGaussianBlur stdDeviation="2"/></filter></defs>
<ellipse cx="419.4" cy="677.8" rx="11" ry="5" transform="rotate(-35 419.4 677.8)" fill="#000" fill-opacity="0.35" filter="url(#blur)"/>
<ellipse cx="419.4" cy="700.9" rx="11" ry="5" transform="rotate(-35 419.4 700.9)" fill="#000" fill-opacity="0.35" filter="url(#blur)"/>
<ellipse cx="378.2" cy="703.6" rx="11" ry="5" transform="rotate(-35 378.2 703.6)" fill="#000" fill-opacity="0.35" filter="url(#blur)"/>
<ellipse cx="391.4" cy="714.8" rx="11" ry="5" transform="rotate(-35 391.4 714.8)" fill="#000" fill-opacity="0.35" filter="url(#blur)"/>
<ellipse cx="410.5" cy="725" rx="11" ry="5" transform="rotate(-35 410.5 725)" fill="#000" fill-opacity="0.35" filter="url(#blur)"/>
<ellipse cx="408.5" cy="727" rx="11" ry="5" transform="rotate(-35 408.5 727)" fill="#000" fill-opacity="0.35" filter="url(#blur)"/>
<ellipse cx="406.4" cy="729" rx="11" ry="5" transform="rotate(-35 406.4 729)" fill="#000" fill-opacity="0.35" filter="url(#blur)"/>
<ellipse cx="379.5" cy="733.5" rx="11" ry="5" transform="rotate(-35 379.5 733.5)" fill="#000" fill-opacity="0.35" filter="url(#blur)"/>
<ellipse cx="377" cy="736" rx="11" ry="5" transform="rotate(-35 377 736)" fill="#000" fill-opacity="0.35" filter="url(#blur)"/>
<ellipse cx="374.6" cy="739" rx="11" ry="5" transform="rotate(-35 374.6 739)" fill="#000" fill-opacity="0.35" filter="url(#blur)"/>
<path d="M410.4 683.3 C407.4 674.8 398.4 664.8 398.4 655.3 A12 12 0 0 1 422.4 655.3 C422.4 664.8 413.4 674.8 410.4 683.3 Z" fill="url(#mg)" stroke="#3b86c6" stroke-width="1.2"/>
<circle cx="410.4" cy="655.8" r="4.9" fill="#2a6fae"/>
<circle cx="410.4" cy="655.8" r="4.2" fill="#fff"/>
<path d="M410.4 706.4 C407.4 697.9 398.4 687.9 398.4 678.4 A12 12 0 0 1 422.4 678.4 C422.4 687.9 413.4 697.9 410.4 706.4 Z" fill="url(#mg)" stroke="#3b86c6" stroke-width="1.2"/>
<circle cx="410.4" cy="678.9" r="4.9" fill="#2a6fae"/>
<circle cx="410.4" cy="678.9" r="4.2" fill="#fff"/>
<path d="M369.2 709.1 C366.2 700.6 357.2 690.6 357.2 681.1 A12 12 0 0 1 381.2 681.1 C381.2 690.6 372.2 700.6 369.2 709.1 Z" fill="url(#mg)" stroke="#3b86c6" stroke-width="1.2"/>
<circle cx="369.2" cy="681.6" r="4.9" fill="#2a6fae"/>
<circle cx="369.2" cy="681.6" r="4.2" fill="#fff"/>
<path d="M382.4 720.3 C379.4 711.8 370.4 701.8 370.4 692.3 A12 12 0 0 1 394.4 692.3 C394.4 701.8 385.4 711.8 382.4 720.3 Z" fill="url(#mg)" stroke="#3b86c6" stroke-width="1.2"/>
<circle cx="382.4" cy="692.8" r="4.9" fill="#2a6fae"/>
<circle cx="382.4" cy="692.8" r="4.2" fill="#fff"/>
<path d="M401.5 730.5 C398.5 722 389.5 712 389.5 702.5 A12 12 0 0 1 413.5 702.5 C413.5 712 404.5 722 401.5 730.5 Z" fill="url(#mg)" stroke="#3b86c6" stroke-width="1.2"/>
<circle cx="401.5" cy="703" r="4.9" fill="#2a6fae"/>
<circle cx="401.5" cy="703" r="4.2" fill="#fff"/>
<path d="M399.5 732.5 C396.5 724 387.5 714 387.5 704.5 A12 12 0 0 1 411.5 704.5 C411.5 714 402.5 724 399.5 732.5 Z" fill="url(#mg)" stroke="#3b86c6" stroke-width="1.2"/>
<circle cx="399.5" cy="705" r="4.9" fill="#2a6fae"/>
<circle cx="399.5" cy="705" r="4.2" fill="#fff"/>
<path d="M397.4 734.5 C394.4 726 385.4 716 385.4 706.5 A12 12 0 0 1 409.4 706.5 C409.4 716 400.4 726 397.4 734.5 Z" fill="url(#mg)" stroke="#3b86c6" stroke-width="1.2"/>
<circle cx="397.4" cy="707" r="4.9" fill="#2a6fae"/>
<circle cx="397.4" cy="707" r="4.2" fill="#fff"/>
<path d="M370.5 739.0 C367.5 730.5 358.5 720.5 358.5 711.0 A12 12 0 0 1 382.5 711.0 C382.5 720.5 373.5 730.5 370.5 739.0 Z" fill="url(#mg)" stroke="#3b86c6" stroke-width="1.2"/>
<circle cx="370.5" cy="711.5" r="4.9" fill="#2a6fae"/>
<circle cx="370.5" cy="711.5" r="4.2" fill="#fff"/>
<path d="M368 741.5 C365 733 356 723 356 713.5 A12 12 0 0 1 380 713.5 C380 723 371 733 368 741.5 Z" fill="url(#mg)" stroke="#3b86c6" stroke-width="1.2"/>
<circle cx="368" cy="714" r="4.9" fill="#2a6fae"/>
<circle cx="368" cy="714" r="4.2" fill="#fff"/>
<path d="M365.6 744.5 C362.6 736 353.6 726 353.6 716.5 A12 12 0 0 1 377.6 716.5 C377.6 726 368.6 736 365.6 744.5 Z" fill="url(#mg)" stroke="#3b86c6" stroke-width="1.2"/>
<circle cx="365.6" cy="717" r="4.9" fill="#2a6fae"/>
<circle cx="365.6" cy="717" r="4.2" fill="#fff"/>
</svg>
<div style="position:absolute;left:10px;top:2px;width:26px;height:53px;background:#fff;border-radius:4px;"></div>
<div style="position:absolute;left:10px;top:28px;width:26px;height:1px;background:#ccc"></div>
<div style="position:absolute;left:10px;top:2px;width:26px;height:27px;font:bold 18px 'Liberation Sans',sans-serif;color:#000;text-align:center;line-height:28px;padding-left:1px">+</div>
<div style="position:absolute;left:10px;top:29px;width:26px;height:26px;font:bold 18px 'Liberation Sans',sans-serif;color:#000;text-align:center;line-height:29px;padding-left:1px">-</div>
<div style="position:absolute;left:693px;top:577px;width:256px;height:15px;background:rgba(255,255,255,0.7);font:10.9px 'Liberation Sans',sans-serif;color:#333;line-height:15px;padding-left:5px;white-space:nowrap"><span style="color:#0078a8">Leaflet</span> | © <span style="color:#0078a8">OpenStreetMap</span> contributors, © <span style="color:#0078a8">CARTO</span></div>
</div>

</body></html>
